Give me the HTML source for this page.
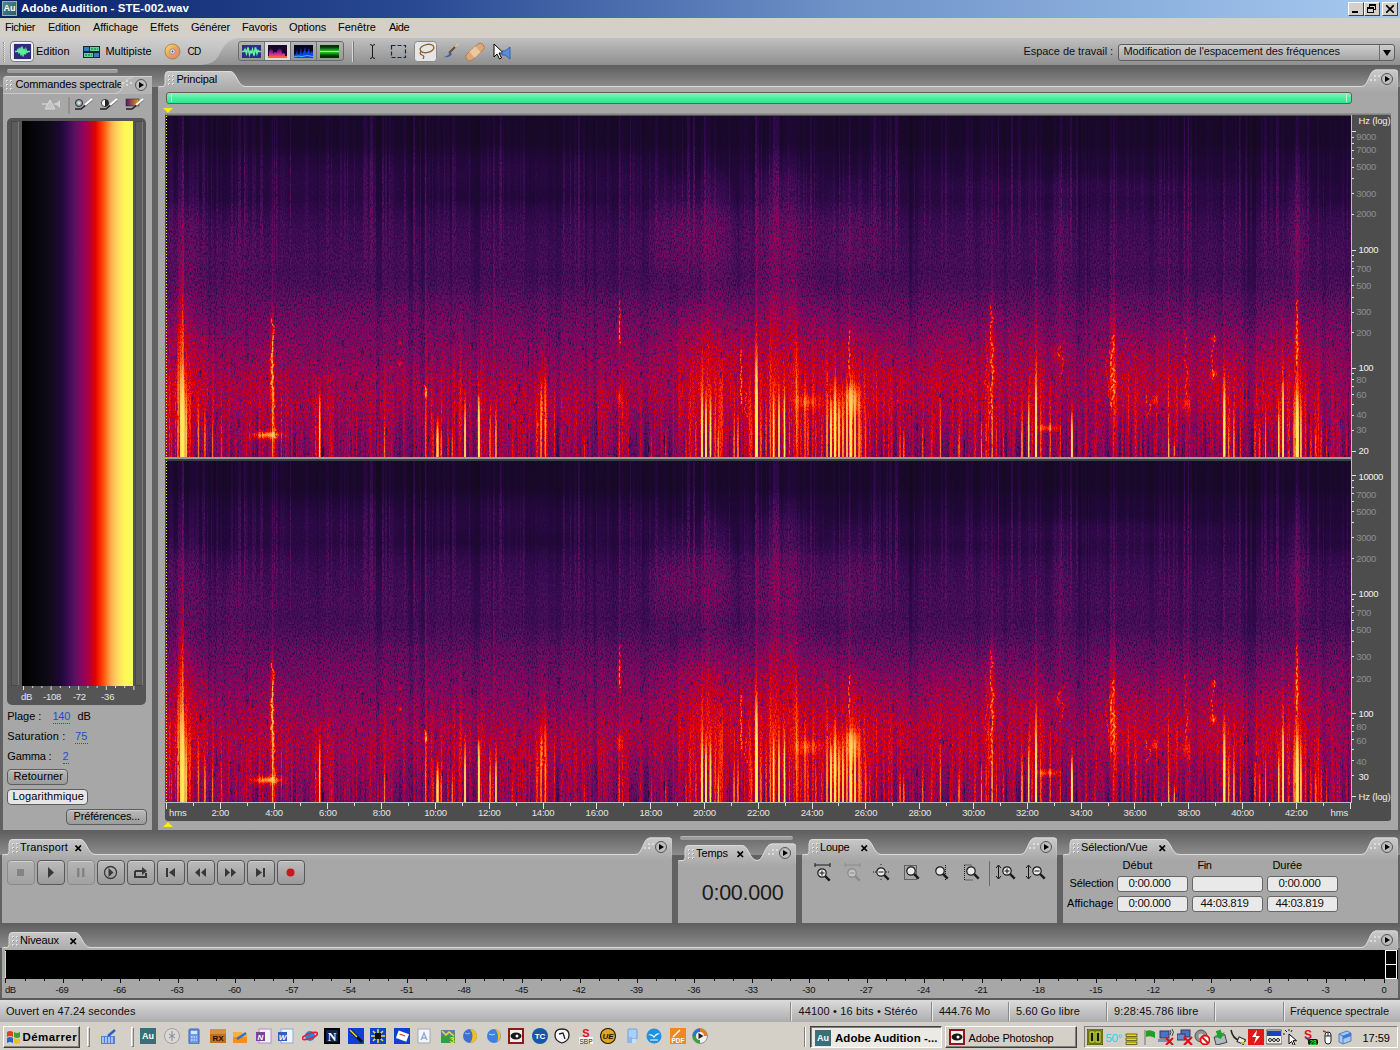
<!DOCTYPE html><html><head><meta charset="utf-8"><title>Adobe Audition - STE-002.wav</title><style>*{box-sizing:border-box;margin:0;padding:0}
html,body{width:1400px;height:1050px;overflow:hidden}
body{position:relative;background:#616161;font-family:"Liberation Sans",sans-serif;font-size:11px;color:#000;line-height:13px}
.a{position:absolute}
.t{position:absolute;white-space:nowrap}
#title{left:0;top:0;width:1400px;height:18px;background:linear-gradient(90deg,#0a246a 0%,#2a4a94 30%,#6f92c8 60%,#a6caf0 100%)}
#title .t{color:#fff}
#menu{left:0;top:18px;width:1400px;height:20px;background:#d4d0c8}
#menu .t{}
#tb{left:0;top:38px;width:1400px;height:27px;background:linear-gradient(#c0c0c0,#aaa 45%,#8f8f8f)}
#tbl{left:0;top:38px;width:240px;height:27px}
.gap{background:linear-gradient(#5e5e5e,#707070 40%,#8d8d8d)}
.panel{background:#a7a7a7}
.tabtxt{font-size:11px;color:#000}
.btn{position:absolute;border:1px solid #5c5c5c;border-radius:4px;background:linear-gradient(#b9b9b9,#9b9b9b);text-align:center;font-size:11px;line-height:13px;box-shadow:inset 0 1px 0 #cfcfcf}
.fld{position:absolute;border:1px solid #666;border-radius:3px;background:#e9e9e9;text-align:center;font-size:12px;line-height:14px;height:16px;width:71px}
.blue{color:#1a4fd0;border-bottom:1px dotted #1a4fd0}
.lt{color:#e6e6e6;font-size:10.5px}
.dim{color:#9d9d9d;font-size:10.5px}
</style></head><body>
<div id="title" class="a"><div class="a" style="left:2px;top:1px;width:15px;height:15px;background:linear-gradient(135deg,#4f8a8c,#2c5a66);border:1px solid #8fb3b3;color:#fff;font-size:9px;line-height:12px;text-align:center;font-weight:bold">Au</div><div class="t " style="left:21px;top:2px;font-size:11.5px;letter-spacing:0.08px;font-weight:bold;color:#fff;">Adobe Audition - STE-002.wav</div>
<div class="a" style="left:1348px;top:2px;width:16px;height:14px;background:#d4d0c8;border:1px solid;border-color:#fff #404040 #404040 #fff"><div class="a" style="left:3px;top:8px;width:6px;height:2px;background:#000"></div></div>
<div class="a" style="left:1364px;top:2px;width:16px;height:14px;background:#d4d0c8;border:1px solid;border-color:#fff #404040 #404040 #fff"><div class="a" style="left:4px;top:1px;width:7px;height:6px;border:1px solid #000;border-top-width:2px"></div><div class="a" style="left:2px;top:4px;width:7px;height:6px;border:1px solid #000;border-top-width:2px;background:#d4d0c8"></div></div>
<div class="a" style="left:1382px;top:2px;width:16px;height:14px;background:#d4d0c8;border:1px solid;border-color:#fff #404040 #404040 #fff"><svg class="a" style="left:3px;top:2px" width="8" height="8"><path d="M0 0L8 8M8 0L0 8" stroke="#000" stroke-width="1.6"/></svg></div>
</div>
<div id="menu" class="a">
<div class="t " style="left:5px;top:3px;font-size:11px;letter-spacing:-0.43px;">Fichier</div><div class="t " style="left:48px;top:3px;font-size:11px;letter-spacing:-0.23px;">Edition</div><div class="t " style="left:93px;top:3px;font-size:11px;letter-spacing:-0.07px;">Affichage</div><div class="t " style="left:150px;top:3px;font-size:11px;letter-spacing:0.18px;">Effets</div><div class="t " style="left:191px;top:3px;font-size:11px;letter-spacing:-0.19px;">Générer</div><div class="t " style="left:242px;top:3px;font-size:11px;letter-spacing:-0.15px;">Favoris</div><div class="t " style="left:289px;top:3px;font-size:11px;letter-spacing:-0.13px;">Options</div><div class="t " style="left:338px;top:3px;font-size:11px;letter-spacing:0.01px;">Fenêtre</div><div class="t " style="left:389px;top:3px;font-size:11px;letter-spacing:-0.50px;">Aide</div>
</div>
<div id="tb" class="a"></div>
<svg id="tbl" class="a" viewBox="0 0 240 27"><defs><linearGradient id="g1" x1="0" y1="0" x2="0" y2="1"><stop offset="0" stop-color="#cfcfcf"/><stop offset="1" stop-color="#b2b2b2"/></linearGradient></defs><path d="M0 0H240C226 1 224 9 219 17C215 25 208 27 196 27H0Z" fill="url(#g1)"/></svg>

<div class="a" style="left:3px;top:42px;width:2px;height:20px;border-left:1px dotted #8a8a8a;border-right:1px dotted #e8e8e8"></div><div class="a" style="left:10px;top:41px;width:24px;height:21px;border:1px solid #7a7a7a;border-radius:4px;background:#e4e4e4;box-shadow:inset 0 0 0 1px #fff"></div><svg class="a" style="left:14px;top:44px" width="17" height="15"><rect width="17" height="15" fill="#322a7c"/><path d="M1 7.500h2l1-2l1 4l1-6l1 8l1-9l1 10l1-8l1 6l1-5l1 3l1-1h2" stroke="#5cf09a" stroke-width="1.400" fill="none"/></svg><div class="t " style="left:36px;top:45px;font-size:11px;letter-spacing:-0.02px;">Edition</div><svg class="a" style="left:83px;top:46px" width="17" height="12"><rect width="17" height="12" fill="#1c2430"/><rect x="1" y="1" width="5" height="4" fill="#3c78c8"/><rect x="7" y="1" width="9" height="4" fill="#58d890"/><rect x="1" y="7" width="9" height="4" fill="#58d890"/><rect x="11" y="7" width="5" height="4" fill="#3c78c8"/><path d="M8 3h7M2 9h7" stroke="#1c5c34" stroke-dasharray="2 1"/></svg><div class="t " style="left:105.5px;top:45px;font-size:11px;letter-spacing:-0.05px;">Multipiste</div><svg class="a" style="left:164px;top:43px" width="17" height="17"><defs><linearGradient id="cdg" x1="0" y1="0" x2="1" y2="1"><stop offset="0" stop-color="#f8e8a0"/><stop offset=".4" stop-color="#e8b050"/><stop offset=".7" stop-color="#e89070"/><stop offset="1" stop-color="#c8a040"/></linearGradient></defs><circle cx="8.500" cy="8.500" r="7.500" fill="url(#cdg)" stroke="#a07830" stroke-width=".8"/><circle cx="8.500" cy="8.500" r="2.600" fill="#e8e0e8" stroke="#9080a0" stroke-width=".8"/><circle cx="8.500" cy="8.500" r=".9" fill="#504860"/></svg><div class="t " style="left:187.5px;top:45px;font-size:10px;letter-spacing:-0.72px;">CD</div><div class="a" style="left:238px;top:41px;width:106px;height:20px;border:1px solid #6a6a6a;border-radius:3px;background:linear-gradient(#b4b4b4,#989898)"></div><div class="a" style="left:265px;top:42px;width:26px;height:18px;background:#dcdcdc"></div><div class="a" style="left:264px;top:42px;width:1px;height:18px;background:#747474"></div><div class="a" style="left:290px;top:42px;width:1px;height:18px;background:#747474"></div><div class="a" style="left:316px;top:42px;width:1px;height:18px;background:#747474"></div><svg class="a" style="left:242px;top:45px" width="100" height="13"><defs><linearGradient id="spg" x1="0" y1="0" x2="0" y2="1"><stop offset="0" stop-color="#201040"/><stop offset=".5" stop-color="#a020a0"/><stop offset=".85" stop-color="#f04080"/><stop offset="1" stop-color="#ff8020"/></linearGradient><linearGradient id="grg" x1="0" y1="0" x2="0" y2="1"><stop offset="0" stop-color="#043004"/><stop offset=".5" stop-color="#30e030"/><stop offset="1" stop-color="#043004"/></linearGradient></defs><rect x="0" y="0" width="19" height="13" fill="#2a3088"/><path d="M0 6.500h2l1-2l1.500 4l1.500-6l1.500 7l1-3l1 1l1-3l1.500 6l1.500-8l1.500 6l1-3l1 1h2" stroke="#68f0a0" stroke-width="1.600" fill="none"/><rect x="26" y="0" width="19" height="13" fill="#180830"/><path d="M27 12V6q2-5 4 0v3q2-4 4-1v-2q3-6 5 0v3q1-2 3 0v3z" fill="url(#spg)"/><rect x="26" y="11" width="19" height="2" fill="#ff6030"/><rect x="52" y="0" width="19" height="13" fill="#040820"/><path d="M52 13v-3l2-1l1-4l1 5l2-2l1-5l1 6l2-3l1-4l1 6l2-2l1-3l1 5l2-2l1 2v5z" fill="#1040e0"/><path d="M52 12l4-1l4 .500l5-1l6 1" stroke="#40c0ff" fill="none"/><rect x="78" y="0" width="19" height="13" fill="#043004"/><rect x="78" y="2" width="19" height="9" fill="url(#grg)"/><path d="M78 6.500h19" stroke="#a0ffa0"/></svg><div class="a" style="left:352px;top:41px;width:2px;height:21px;border-left:1px solid #d8d8d8;border-right:1px solid #7a7a7a"></div><svg class="a" style="left:360px;top:40px" width="160" height="24"><path d="M12.500 6v11M10 4.500q2.500 0 2.500 2q0-2 2.500-2M10 18.500q2.500 0 2.500-2q0 2 2.500 2" stroke="#1a1a1a" fill="none"/><rect x="31.500" y="5.500" width="14" height="12" fill="none" stroke="#1c2440" stroke-width="1.200" stroke-dasharray="4 2"/><rect x="54.500" y="1.500" width="22" height="20" rx="3" fill="#e6e6e6" stroke="#8a8a8a"/><ellipse cx="67" cy="8.500" rx="7" ry="4" fill="none" stroke="#8a6432" stroke-width="1.400" transform="rotate(-12 67 8.500)"/><path d="M61 11q-2 3 1 4q3 1 1 4" stroke="#8a6432" stroke-width="1.300" fill="none"/><path d="M97 5L89 13" stroke="#6a4a2a" stroke-width="2"/><path d="M98 4l-3 3" stroke="#d8c8a0" stroke-width="2"/><path d="M90 12q-1 4-6 5q5 1 8-3z" fill="#3060b0"/><rect x="104" y="8" width="22" height="8" rx="4" fill="#dca878" stroke="#a87848" stroke-width=".8" transform="rotate(-42 115 12)"/><rect x="111" y="8" width="8" height="8" fill="#ecc8a0" transform="rotate(-42 115 12)"/><path d="M134 4v13l3-3l2.500 5l2-1l-2.500-5h4.500z" fill="#fff" stroke="#000" stroke-width="1"/><path d="M142 11h3l5-4v12l-5-4h-3z" fill="#5890e0" stroke="#2850a0" stroke-width=".8"/></svg><div class="t " style="left:1023.5px;top:45px;font-size:11px;letter-spacing:-0.05px;color:#111;">Espace de travail :</div><div class="a" style="left:1118px;top:44px;width:277px;height:17px;border:1px solid #5e5e5e;border-radius:3px;background:linear-gradient(#cdcdcd,#a6a6a6)"></div><div class="t " style="left:1123.5px;top:45px;font-size:11px;letter-spacing:-0.08px;color:#111;">Modification de l'espacement des fréquences</div><div class="a" style="left:1379px;top:45px;width:1px;height:15px;background:#6e6e6e"></div><svg class="a" style="left:1382px;top:49px" width="10" height="8"><path d="M1 1h8l-4 6z" fill="#000"/></svg>
<div class="a gap" style="left:0;top:65px;width:1400px;height:22px"></div><div class="a" style="left:7px;top:69px;width:111px;height:4px;border-radius:2px;background:#9c9c9c;border-top:1px solid #b5b5b5"></div><div class="a" style="left:3px;top:76px;width:149px;height:754px;background:linear-gradient(#bdbdbd,#a7a7a7 18px);border-radius:4px 0 0 0;border-top:1px solid #d0d0d0"></div><div class="a" style="left:3px;top:93px;width:118px;height:1px;background:#c9c9c9"></div><div class="a" style="left:0;top:76px;width:121px;height:17px;overflow:hidden"><div class="t " style="left:15.5px;top:2px;font-size:11px;letter-spacing:-0.15px;">Commandes spectrales</div></div><svg class="a" style="left:3px;top:76px" width="149" height="20"><rect x="3" y="4" width="2" height="2" fill="#e2e2e2"/><rect x="4" y="5" width="1" height="1" fill="#8a8a8a"/><rect x="7" y="4" width="2" height="2" fill="#e2e2e2"/><rect x="8" y="5" width="1" height="1" fill="#8a8a8a"/><rect x="3" y="8" width="2" height="2" fill="#e2e2e2"/><rect x="4" y="9" width="1" height="1" fill="#8a8a8a"/><rect x="7" y="8" width="2" height="2" fill="#e2e2e2"/><rect x="8" y="9" width="1" height="1" fill="#8a8a8a"/><rect x="3" y="12" width="2" height="2" fill="#e2e2e2"/><rect x="4" y="13" width="1" height="1" fill="#8a8a8a"/><rect x="7" y="12" width="2" height="2" fill="#e2e2e2"/><rect x="8" y="13" width="1" height="1" fill="#8a8a8a"/><path d="M112 18C122 17 118 2 130 1H149V18Z" fill="#b4b4b4"/><path d="M112 17.5C122 17 118 2 130 1.5" fill="none" stroke="#cfcfcf"/><rect x="119" y="6" width="2" height="2" fill="#d8d8d8"/><rect x="123" y="4" width="2" height="2" fill="#d8d8d8"/><rect x="127" y="6" width="2" height="2" fill="#d8d8d8"/><rect x="123" y="8" width="2" height="2" fill="#d8d8d8"/><circle cx="138" cy="9" r="5.5" fill="#bdbdbd" stroke="#555"/><path d="M136 6l5 3l-5 3z" fill="#000"/></svg><svg class="a" style="left:40px;top:96px" width="110" height="20"><path d="M2 8H8M14 8H20" stroke="#d0d0d0" stroke-width="1.3"/><path d="M5 13L10 4L15 13Z" fill="#c4c4c4" stroke="#d8d8d8" stroke-width="1"/><path d="M15 8L20 4V12Z" fill="#d0d0d0"/><path d="M29 1V18" stroke="#7a7a7a"/><defs><radialGradient id="rb"><stop offset="0" stop-color="#fff"/><stop offset=".5" stop-color="#7fd0a0"/><stop offset="1" stop-color="#c040c0"/></radialGradient><linearGradient id="pg" x1="0" x2="1"><stop offset="0" stop-color="#5a1070"/><stop offset="1" stop-color="#e0a020"/></linearGradient></defs><circle cx="39" cy="7" r="3.6" fill="url(#rb)" stroke="#222" stroke-width=".8"/><path d="M35 13H41L52 4" stroke="#222" stroke-width="1.6" fill="none"/><path d="M45 9L52 3" stroke="#fff" stroke-width="2.2"/><circle cx="65" cy="7" r="3.6" fill="#fff" stroke="#222" stroke-width=".8"/><path d="M65 3.4A3.6 3.6 0 0 1 65 10.6Z" fill="#222"/><path d="M60 13H66L77 4" stroke="#222" stroke-width="1.6" fill="none"/><path d="M70 9L77 3" stroke="#fff" stroke-width="2.2"/><rect x="86" y="3" width="13" height="7" fill="url(#pg)" stroke="#333" stroke-width=".6"/><path d="M86 13H92L103 4" stroke="#222" stroke-width="1.6" fill="none"/><path d="M96 9L103 3" stroke="#fff" stroke-width="2.2"/></svg><div class="a" style="left:7px;top:118px;width:139px;height:587px;background:#555;border-radius:5px"></div><div class="a" style="left:11px;top:121px;width:8px;height:565px;background:#5c5c5c;border:1px solid #484848;border-right-color:#7a7a7a"></div><div class="a" style="left:135px;top:121px;width:8px;height:565px;background:#5c5c5c;border:1px solid #484848;border-right-color:#7a7a7a"></div><div class="a" style="left:22px;top:121px;width:111px;height:565px;background:linear-gradient(90deg,#000000 0.0%,#0a0810 17.7%,#140a1e 27.4%,#200838 35.4%,#3a0c54 41.9%,#601060 48.3%,#8c0460 54.7%,#b00040 60.4%,#e00000 66.0%,#ff3000 70.9%,#ff7020 75.7%,#ffb050 80.5%,#ffd860 86.1%,#fff858 92.6%,#f4ff58 100.0%)"></div><svg class="a" style="left:7px;top:686px" width="139" height="6"><path d="M16.5 0V4" stroke="#ddd"/><path d="M25.7 0V2" stroke="#ddd"/><path d="M34.9 0V2" stroke="#ddd"/><path d="M44.1 0V4" stroke="#ddd"/><path d="M53.3 0V2" stroke="#ddd"/><path d="M62.5 0V2" stroke="#ddd"/><path d="M71.7 0V4" stroke="#ddd"/><path d="M80.9 0V2" stroke="#ddd"/><path d="M90.1 0V2" stroke="#ddd"/><path d="M99.3 0V4" stroke="#ddd"/><path d="M108.5 0V2" stroke="#ddd"/><path d="M117.7 0V2" stroke="#ddd"/><path d="M126.9 0V4" stroke="#ddd"/></svg><div class="t " style="left:21px;top:690px;font-size:9.5px;letter-spacing:-0.31px;color:#e6e6e6;">dB</div><div class="t " style="left:43px;top:690px;font-size:9.5px;letter-spacing:-0.25px;color:#e6e6e6;">-108</div><div class="t " style="left:73px;top:690px;font-size:9.5px;letter-spacing:-0.41px;color:#e6e6e6;">-72</div><div class="t " style="left:101px;top:690px;font-size:9.5px;letter-spacing:-0.08px;color:#e6e6e6;">-36</div><div class="t " style="left:7.3px;top:710px;font-size:11px;letter-spacing:-0.04px;">Plage :</div><div class="t blue" style="left:52.5px;top:710px;font-size:11px;letter-spacing:-0.28px;">140</div><div class="t " style="left:77.5px;top:710px;font-size:11px;letter-spacing:-0.23px;">dB</div><div class="t " style="left:7.3px;top:730px;font-size:11px;letter-spacing:0.16px;">Saturation :</div><div class="t blue" style="left:75px;top:730px;font-size:11px;letter-spacing:0.13px;">75</div><div class="t " style="left:7.3px;top:750px;font-size:11px;letter-spacing:-0.15px;">Gamma :</div><div class="t blue" style="left:62.5px;top:750px;font-size:11px;letter-spacing:0.38px;">2</div><div class="btn" style="left:7px;top:769px;width:61px;height:16px"></div><div class="t " style="left:13.5px;top:769.5px;font-size:11px;letter-spacing:0.07px;">Retourner</div><div class="btn" style="left:7px;top:789px;width:81px;height:16px;background:#e6e6e6;box-shadow:none"></div><div class="t " style="left:12.5px;top:789.5px;font-size:11px;letter-spacing:0.14px;">Logarithmique</div><div class="btn" style="left:66px;top:809px;width:81px;height:16px"></div><div class="t " style="left:73.5px;top:809.5px;font-size:11px;letter-spacing:-0.14px;">Préférences...</div><svg class="a" style="left:158px;top:71px;overflow:visible" width="1240" height="759" viewBox="0 0 1240 759"><defs><linearGradient id="pg1" x1="0" y1="0" x2="0" y2="21" gradientUnits="userSpaceOnUse"><stop offset="0" stop-color="#c8c8c8"/><stop offset="1" stop-color="#a7a7a7"/></linearGradient></defs><path d="M0 759 V16 Q0 15 2 15 H5 Q7 15 7 12 V4 Q7 0 11 0 H72 C78.75 0 79.5 15 87 15 H1204 C1210.5 15 1211 -1.5 1218 -1.5 H1237 Q1240 -1.5 1240 1.5 V759 Z" fill="url(#pg1)"/><path d="M0 759 V16 Q0 15 2 15 H5 Q7 15 7 12 V4 Q7 0 11 0 H72 C78.75 0 79.5 15 87 15 H1204 C1210.5 15 1211 -1.5 1218 -1.5 H1237 Q1240 -1.5 1240 1.5 V759 Z" fill="none" stroke="#dadada" stroke-width="1" transform="translate(0,0.5)" clip-path="inset(-3px 1px 742px 1px)"/><rect x="10" y="4" width="2" height="2" fill="#e2e2e2"/><rect x="11" y="5" width="1" height="1" fill="#8a8a8a"/><rect x="14" y="4" width="2" height="2" fill="#e2e2e2"/><rect x="15" y="5" width="1" height="1" fill="#8a8a8a"/><rect x="10" y="8" width="2" height="2" fill="#e2e2e2"/><rect x="11" y="9" width="1" height="1" fill="#8a8a8a"/><rect x="14" y="8" width="2" height="2" fill="#e2e2e2"/><rect x="15" y="9" width="1" height="1" fill="#8a8a8a"/><rect x="10" y="12" width="2" height="2" fill="#e2e2e2"/><rect x="11" y="13" width="1" height="1" fill="#8a8a8a"/><rect x="14" y="12" width="2" height="2" fill="#e2e2e2"/><rect x="15" y="13" width="1" height="1" fill="#8a8a8a"/><rect x="1212" y="8" width="2" height="2" fill="#dcdcdc"/><rect x="1216" y="8" width="2" height="2" fill="#dcdcdc"/><rect x="1216" y="4" width="2" height="2" fill="#dcdcdc"/><rect x="1220" y="4" width="2" height="2" fill="#dcdcdc"/><circle cx="1229" cy="8" r="5.500" fill="#bdbdbd" stroke="#555" stroke-width="1"/><path d="M1227 5 l5 3 l-5 3z" fill="#000"/></svg><div class="t " style="left:176.4px;top:73px;font-size:11px;letter-spacing:-0.18px;">Principal</div><div class="a" style="left:166px;top:92px;width:1186px;height:12px;border:1px solid #6b5a5a;border-radius:3px;background:linear-gradient(#86f2be,#4fec9f 50%,#2fe78d)"></div><div class="a" style="left:171px;top:94px;width:1px;height:8px;background:#b8f8d8"></div><div class="a" style="left:1346px;top:94px;width:1px;height:8px;background:#b8f8d8"></div><div class="a" style="left:165px;top:113px;width:1226px;height:3px;background:linear-gradient(#9a9a9a,#6a6a6a)"></div><div class="a" style="left:165px;top:115px;width:1226px;height:706px;background:#4d4d4d;border-radius:0 3px 3px 3px"></div><svg class="a" style="left:162px;top:107px" width="12" height="8"><path d="M1 1H11L6 6Z" fill="#ffee00"/></svg><svg class="a" style="left:162px;top:820px" width="12" height="8"><path d="M1 7H11L6 2Z" fill="#ffee00"/></svg>
<svg class="a" style="left:0;top:0" width="1400" height="1050" viewBox="0 0 1400 1050"><defs><filter id="cmapf" x="166" y="116" width="1185" height="686" filterUnits="userSpaceOnUse" color-interpolation-filters="sRGB"><feTurbulence type="fractalNoise" baseFrequency="0.85 0.45" numOctaves="2" seed="3" result="n"/><feColorMatrix in="SourceGraphic" type="matrix" values="0 0 0 0 0  0 0 0 0 0  0 0 0 0 0  1 0 0 0 0" result="sa0"/><feComponentTransfer in="sa0" result="sa"><feFuncA type="table" tableValues="0 0 0 0 0 0 0 .05 .3 .7 1 1 1 .8 .5 .25 .1 0 0 0 0"/></feComponentTransfer><feColorMatrix in="n" type="matrix" values="0 0 0 0 0  0 0 0 0 0  0 0 0 0 0  0.75 0 0 0 -0.325" result="nb0"/><feColorMatrix in="n" type="matrix" values="0 0 0 0 1  0 0 0 0 1  0 0 0 0 1  0 0.45 0 0 -0.205" result="nw0"/><feComposite in="nb0" in2="sa" operator="in" result="nb"/><feComposite in="nw0" in2="sa" operator="in" result="nw"/><feMerge result="m"><feMergeNode in="SourceGraphic"/><feMergeNode in="nb"/><feMergeNode in="nw"/></feMerge><feComponentTransfer in="m"><feFuncR type="table" tableValues="0.000 0.003 0.007 0.010 0.014 0.017 0.021 0.024 0.028 0.031 0.035 0.038 0.043 0.050 0.056 0.062 0.069 0.075 0.083 0.092 0.101 0.110 0.119 0.134 0.158 0.183 0.207 0.234 0.271 0.307 0.343 0.380 0.422 0.464 0.507 0.549 0.587 0.626 0.665 0.708 0.761 0.813 0.866 0.908 0.947 0.985 1.000 1.000 1.000 1.000 1.000 1.000 1.000 1.000 1.000 1.000 1.000 1.000 1.000 1.000 0.993 0.984 0.975 0.966 0.957"/><feFuncG type="table" tableValues="0.000 0.003 0.006 0.008 0.011 0.014 0.017 0.019 0.022 0.025 0.028 0.030 0.032 0.033 0.035 0.036 0.037 0.039 0.039 0.037 0.035 0.034 0.032 0.033 0.036 0.040 0.044 0.048 0.052 0.055 0.059 0.062 0.050 0.039 0.027 0.016 0.011 0.007 0.003 0.000 0.000 0.000 0.000 0.046 0.106 0.166 0.239 0.321 0.403 0.484 0.566 0.648 0.711 0.755 0.799 0.843 0.874 0.904 0.934 0.965 0.977 0.983 0.988 0.994 1.000"/><feFuncB type="table" tableValues="0.000 0.006 0.011 0.017 0.022 0.028 0.033 0.039 0.044 0.050 0.055 0.061 0.069 0.078 0.086 0.095 0.104 0.113 0.127 0.147 0.167 0.187 0.207 0.229 0.255 0.281 0.308 0.332 0.343 0.355 0.366 0.376 0.376 0.376 0.376 0.376 0.342 0.308 0.274 0.227 0.157 0.087 0.017 0.000 0.000 0.000 0.025 0.066 0.107 0.159 0.221 0.282 0.322 0.340 0.357 0.375 0.370 0.362 0.355 0.347 0.345 0.345 0.345 0.345 0.345"/><feFuncA type="linear" slope="0" intercept="1"/></feComponentTransfer></filter><linearGradient id="sb" x1="0" y1="0" x2="0" y2="1"><stop offset="0.00" stop-color="#4f4f4f"/><stop offset="0.08" stop-color="#505050"/><stop offset="0.12" stop-color="#585858"/><stop offset="0.24" stop-color="#5c5c5c"/><stop offset="0.28" stop-color="#666666"/><stop offset="0.33" stop-color="#6c6c6c"/><stop offset="0.42" stop-color="#717171"/><stop offset="0.46" stop-color="#707070"/><stop offset="0.50" stop-color="#747474"/><stop offset="0.55" stop-color="#7e7e7e"/><stop offset="0.62" stop-color="#878787"/><stop offset="0.70" stop-color="#8c8c8c"/><stop offset="0.78" stop-color="#8f8f8f"/><stop offset="0.85" stop-color="#8e8e8e"/><stop offset="0.92" stop-color="#878787"/><stop offset="1.00" stop-color="#818181"/></linearGradient><linearGradient id="ss" x1="0" y1="0" x2="0" y2="1"><stop offset="0" stop-color="#e4e4e4" stop-opacity="0"/><stop offset=".3" stop-color="#e4e4e4" stop-opacity=".4"/><stop offset=".65" stop-color="#e4e4e4" stop-opacity=".8"/><stop offset="1" stop-color="#e4e4e4" stop-opacity=".85"/></linearGradient><linearGradient id="sc" x1="0" y1="0" x2="0" y2="1"><stop offset="0" stop-color="#f6f6f6" stop-opacity="0"/><stop offset=".35" stop-color="#f6f6f6" stop-opacity=".7"/><stop offset="1" stop-color="#f6f6f6" stop-opacity=".9"/></linearGradient><linearGradient id="su" x1="0" y1="0" x2="0" y2="1"><stop offset="0" stop-color="#fff" stop-opacity=".8"/><stop offset=".5" stop-color="#fff" stop-opacity="1"/><stop offset="1" stop-color="#fff" stop-opacity="0"/></linearGradient><linearGradient id="sl" x1="0" y1="0" x2="0" y2="1"><stop offset="0" stop-color="#fff" stop-opacity=".7"/><stop offset=".6" stop-color="#fff" stop-opacity="1"/><stop offset="1" stop-color="#fff" stop-opacity="1"/></linearGradient><radialGradient id="sr"><stop offset="0" stop-color="#e4e4e4" stop-opacity=".5"/><stop offset=".4" stop-color="#e4e4e4" stop-opacity=".35"/><stop offset="1" stop-color="#e4e4e4" stop-opacity="0"/></radialGradient><linearGradient id="sd" x1="0" y1="0" x2="0" y2="1"><stop offset="0" stop-color="#000" stop-opacity="0"/><stop offset=".5" stop-color="#000" stop-opacity=".7"/><stop offset="1" stop-color="#000" stop-opacity="1"/></linearGradient><pattern id="stp" x="166" y="116" width="237" height="345" patternUnits="userSpaceOnUse"><rect x="0" y="253" width="2" height="88" fill="url(#ss)" opacity="0.22"/><rect x="2" y="295" width="2" height="46" fill="url(#ss)" opacity="0.09"/><rect x="4" y="296" width="1" height="45" fill="url(#sd)" opacity="0.10"/><rect x="5" y="286" width="2" height="55" fill="url(#sd)" opacity="0.10"/><rect x="7" y="279" width="2" height="62" fill="url(#sd)" opacity="0.07"/><rect x="10" y="277" width="1" height="64" fill="url(#sd)" opacity="0.05"/><rect x="11" y="303" width="1" height="38" fill="url(#ss)" opacity="0.27"/><rect x="12" y="343" width="1" height="-2" fill="url(#sd)" opacity="0.17"/><rect x="14" y="234" width="1.5" height="107" fill="url(#ss)" opacity="0.27"/><rect x="16" y="293" width="1" height="48" fill="url(#sd)" opacity="0.12"/><rect x="17.5" y="291" width="1" height="50" fill="url(#sd)" opacity="0.11"/><rect x="19" y="305" width="1" height="36" fill="url(#sd)" opacity="0.06"/><rect x="20" y="261" width="3" height="80" fill="url(#ss)" opacity="0.19"/><rect x="24" y="297" width="1.5" height="44" fill="url(#sd)" opacity="0.10"/><rect x="25.5" y="310" width="2" height="31" fill="url(#ss)" opacity="0.23"/><rect x="28.5" y="308" width="1.5" height="33" fill="url(#sd)" opacity="0.08"/><rect x="31" y="314" width="1" height="27" fill="url(#sd)" opacity="0.09"/><rect x="32.5" y="301" width="1" height="40" fill="url(#sd)" opacity="0.08"/><rect x="34" y="294" width="1" height="47" fill="url(#sd)" opacity="0.12"/><rect x="35.5" y="258" width="3" height="83" fill="url(#ss)" opacity="0.10"/><rect x="38.5" y="322" width="3" height="19" fill="url(#sd)" opacity="0.07"/><rect x="41.5" y="313" width="1" height="28" fill="url(#ss)" opacity="0.16"/><rect x="42.5" y="315" width="3" height="26" fill="url(#sd)" opacity="0.10"/><rect x="46.5" y="271" width="1" height="70" fill="url(#sd)" opacity="0.05"/><rect x="48.5" y="300" width="1.5" height="41" fill="url(#ss)" opacity="0.23"/><rect x="50" y="305" width="3" height="36" fill="url(#ss)" opacity="0.11"/><rect x="53.5" y="237" width="1" height="104" fill="url(#ss)" opacity="0.11"/><rect x="54.5" y="269" width="2" height="72" fill="url(#ss)" opacity="0.23"/><rect x="57.5" y="256" width="1.5" height="85" fill="url(#ss)" opacity="0.11"/><rect x="60" y="345" width="2" height="-4" fill="url(#sd)" opacity="0.11"/><rect x="62.5" y="239" width="1" height="102" fill="url(#ss)" opacity="0.24"/><rect x="64" y="330" width="1" height="11" fill="url(#sd)" opacity="0.13"/><rect x="65" y="296" width="1.5" height="45" fill="url(#sd)" opacity="0.08"/><rect x="67.5" y="329" width="1.5" height="12" fill="url(#sd)" opacity="0.09"/><rect x="69.5" y="281" width="3" height="60" fill="url(#sd)" opacity="0.11"/><rect x="73" y="287" width="1.5" height="54" fill="url(#ss)" opacity="0.24"/><rect x="75" y="254" width="1.5" height="87" fill="url(#ss)" opacity="0.27"/><rect x="77.5" y="307" width="1.5" height="34" fill="url(#ss)" opacity="0.25"/><rect x="80" y="310" width="1.5" height="31" fill="url(#ss)" opacity="0.19"/><rect x="81.5" y="334" width="1" height="7" fill="url(#sd)" opacity="0.11"/><rect x="82.5" y="287" width="3" height="54" fill="url(#ss)" opacity="0.20"/><rect x="86.5" y="317" width="1.5" height="24" fill="url(#sd)" opacity="0.13"/><rect x="88" y="245" width="1" height="96" fill="url(#ss)" opacity="0.21"/><rect x="89" y="281" width="3" height="60" fill="url(#sd)" opacity="0.17"/><rect x="92" y="236" width="1" height="105" fill="url(#ss)" opacity="0.14"/><rect x="93" y="248" width="2" height="93" fill="url(#ss)" opacity="0.17"/><rect x="96" y="282" width="3" height="59" fill="url(#ss)" opacity="0.13"/><rect x="99.5" y="295" width="1" height="46" fill="url(#sd)" opacity="0.15"/><rect x="100.5" y="300" width="3" height="41" fill="url(#ss)" opacity="0.09"/><rect x="104" y="256" width="1" height="85" fill="url(#ss)" opacity="0.27"/><rect x="105.5" y="299" width="1.5" height="42" fill="url(#ss)" opacity="0.24"/><rect x="107.5" y="244" width="2" height="97" fill="url(#ss)" opacity="0.19"/><rect x="109.5" y="282" width="1" height="59" fill="url(#ss)" opacity="0.26"/><rect x="110.5" y="241" width="2" height="100" fill="url(#ss)" opacity="0.20"/><rect x="112.5" y="317" width="1.5" height="24" fill="url(#sd)" opacity="0.10"/><rect x="115" y="272" width="1" height="69" fill="url(#ss)" opacity="0.22"/><rect x="117" y="281" width="1" height="60" fill="url(#ss)" opacity="0.28"/><rect x="119" y="266" width="1.5" height="75" fill="url(#ss)" opacity="0.28"/><rect x="121.5" y="244" width="1.5" height="97" fill="url(#ss)" opacity="0.21"/><rect x="124" y="290" width="1" height="51" fill="url(#sd)" opacity="0.15"/><rect x="125" y="275" width="2" height="66" fill="url(#ss)" opacity="0.27"/><rect x="127" y="306" width="1" height="35" fill="url(#sd)" opacity="0.14"/><rect x="128.5" y="306" width="1.5" height="35" fill="url(#sd)" opacity="0.11"/><rect x="130" y="294" width="1" height="47" fill="url(#ss)" opacity="0.19"/><rect x="131.5" y="256" width="2" height="85" fill="url(#ss)" opacity="0.17"/><rect x="134" y="293" width="3" height="48" fill="url(#ss)" opacity="0.09"/><rect x="137.5" y="303" width="2" height="38" fill="url(#sd)" opacity="0.16"/><rect x="139.5" y="301" width="1" height="40" fill="url(#sd)" opacity="0.12"/><rect x="141.5" y="305" width="2" height="36" fill="url(#sd)" opacity="0.14"/><rect x="144" y="300" width="2" height="41" fill="url(#ss)" opacity="0.25"/><rect x="147" y="289" width="2" height="52" fill="url(#sd)" opacity="0.16"/><rect x="149" y="271" width="1" height="70" fill="url(#ss)" opacity="0.18"/><rect x="150.5" y="244" width="2" height="97" fill="url(#ss)" opacity="0.24"/><rect x="152.5" y="285" width="3" height="56" fill="url(#sd)" opacity="0.15"/><rect x="155.5" y="325" width="1.5" height="16" fill="url(#sd)" opacity="0.17"/><rect x="158" y="242" width="1" height="99" fill="url(#ss)" opacity="0.20"/><rect x="159" y="339" width="3" height="2" fill="url(#sd)" opacity="0.13"/><rect x="163" y="247" width="1" height="94" fill="url(#ss)" opacity="0.24"/><rect x="164" y="249" width="2" height="92" fill="url(#ss)" opacity="0.21"/><rect x="166" y="237" width="1.5" height="104" fill="url(#ss)" opacity="0.23"/><rect x="167.5" y="267" width="1" height="74" fill="url(#ss)" opacity="0.20"/><rect x="169.5" y="309" width="1.5" height="32" fill="url(#ss)" opacity="0.09"/><rect x="171.5" y="313" width="1" height="28" fill="url(#sd)" opacity="0.08"/><rect x="172.5" y="237" width="1.5" height="104" fill="url(#ss)" opacity="0.25"/><rect x="174.5" y="346" width="2" height="-5" fill="url(#sd)" opacity="0.15"/><rect x="177.5" y="264" width="3" height="77" fill="url(#ss)" opacity="0.08"/><rect x="181" y="279" width="1" height="62" fill="url(#ss)" opacity="0.25"/><rect x="183" y="264" width="1" height="77" fill="url(#ss)" opacity="0.27"/><rect x="184" y="268" width="2" height="73" fill="url(#sd)" opacity="0.06"/><rect x="186" y="288" width="2" height="53" fill="url(#ss)" opacity="0.10"/><rect x="189" y="277" width="1" height="64" fill="url(#sd)" opacity="0.09"/><rect x="190" y="259" width="1.5" height="82" fill="url(#ss)" opacity="0.15"/><rect x="192.5" y="277" width="2" height="64" fill="url(#sd)" opacity="0.13"/><rect x="195.5" y="274" width="1.5" height="67" fill="url(#ss)" opacity="0.19"/><rect x="197" y="237" width="2" height="104" fill="url(#ss)" opacity="0.12"/><rect x="199" y="306" width="1" height="35" fill="url(#sd)" opacity="0.13"/><rect x="200.5" y="267" width="1" height="74" fill="url(#ss)" opacity="0.27"/><rect x="202.5" y="270" width="1.5" height="71" fill="url(#ss)" opacity="0.11"/><rect x="204" y="263" width="1" height="78" fill="url(#ss)" opacity="0.26"/><rect x="205" y="253" width="2" height="88" fill="url(#ss)" opacity="0.11"/><rect x="207.5" y="251" width="3" height="90" fill="url(#ss)" opacity="0.09"/><rect x="211" y="343" width="1.5" height="-2" fill="url(#sd)" opacity="0.13"/><rect x="213.5" y="276" width="1" height="65" fill="url(#sd)" opacity="0.08"/><rect x="214.5" y="313" width="3" height="28" fill="url(#ss)" opacity="0.22"/><rect x="217.5" y="238" width="3" height="103" fill="url(#ss)" opacity="0.27"/><rect x="221" y="257" width="3" height="84" fill="url(#ss)" opacity="0.14"/><rect x="225" y="295" width="1" height="46" fill="url(#ss)" opacity="0.12"/><rect x="226" y="316" width="3" height="25" fill="url(#sd)" opacity="0.08"/><rect x="230" y="303" width="1" height="38" fill="url(#sd)" opacity="0.07"/><rect x="231" y="334" width="2" height="7" fill="url(#sd)" opacity="0.12"/><rect x="233" y="272" width="3" height="69" fill="url(#sd)" opacity="0.11"/></pattern><clipPath id="c1"><rect x="166" y="116" width="1185" height="341"/></clipPath><clipPath id="c2"><rect x="166" y="461" width="1185" height="341"/></clipPath></defs><g filter="url(#cmapf)"><g clip-path="url(#c1)"><rect x="166" y="116" width="1185" height="341" fill="url(#sb)"/><rect x="166" y="116" width="1185" height="341" fill="url(#stp)"/><rect x="169" y="116" width="2" height="187" fill="url(#su)" opacity="0.07"/><rect x="171" y="116" width="2" height="187" fill="url(#su)" opacity="0.08"/><rect x="173" y="116" width="1" height="187" fill="url(#su)" opacity="0.03"/><rect x="189" y="116" width="2" height="187" fill="url(#su)" opacity="0.06"/><rect x="191" y="116" width="1" height="187" fill="url(#su)" opacity="0.04"/><rect x="192" y="116" width="2" height="187" fill="url(#su)" opacity="0.07"/><rect x="194" y="116" width="2" height="187" fill="url(#su)" opacity="0.04"/><rect x="196" y="116" width="3" height="187" fill="url(#su)" opacity="0.08"/><rect x="202" y="116" width="3" height="187" fill="url(#su)" opacity="0.10"/><rect x="207" y="116" width="1" height="187" fill="url(#su)" opacity="0.07"/><rect x="208" y="116" width="2" height="187" fill="url(#su)" opacity="0.04"/><rect x="211" y="116" width="1" height="187" fill="url(#su)" opacity="0.13"/><rect x="216" y="116" width="2" height="187" fill="url(#su)" opacity="0.08"/><rect x="221" y="116" width="1" height="187" fill="url(#su)" opacity="0.04"/><rect x="224" y="116" width="1" height="187" fill="url(#su)" opacity="0.03"/><rect x="231" y="116" width="2" height="187" fill="url(#su)" opacity="0.09"/><rect x="235" y="116" width="2" height="187" fill="url(#su)" opacity="0.04"/><rect x="238" y="116" width="2" height="187" fill="url(#su)" opacity="0.12"/><rect x="240" y="116" width="1" height="187" fill="url(#su)" opacity="0.12"/><rect x="244" y="116" width="2" height="187" fill="url(#su)" opacity="0.15"/><rect x="246" y="116" width="2" height="187" fill="url(#su)" opacity="0.10"/><rect x="249" y="116" width="1" height="187" fill="url(#su)" opacity="0.03"/><rect x="252" y="116" width="2" height="187" fill="url(#su)" opacity="0.08"/><rect x="254" y="116" width="2" height="187" fill="url(#su)" opacity="0.07"/><rect x="260" y="116" width="3" height="187" fill="url(#su)" opacity="0.10"/><rect x="270" y="116" width="1" height="187" fill="url(#su)" opacity="0.03"/><rect x="274" y="116" width="1" height="187" fill="url(#su)" opacity="0.13"/><rect x="276" y="116" width="1" height="187" fill="url(#su)" opacity="0.13"/><rect x="277" y="116" width="1" height="187" fill="url(#su)" opacity="0.07"/><rect x="280" y="116" width="2" height="187" fill="url(#su)" opacity="0.04"/><rect x="282" y="116" width="3" height="187" fill="url(#su)" opacity="0.04"/><rect x="286" y="116" width="1" height="187" fill="url(#su)" opacity="0.03"/><rect x="290" y="116" width="1" height="187" fill="url(#su)" opacity="0.13"/><rect x="305" y="116" width="2" height="187" fill="url(#su)" opacity="0.04"/><rect x="307" y="116" width="1" height="187" fill="url(#su)" opacity="0.07"/><rect x="319" y="116" width="1" height="187" fill="url(#su)" opacity="0.06"/><rect x="326" y="116" width="3" height="187" fill="url(#su)" opacity="0.07"/><rect x="331" y="116" width="1" height="187" fill="url(#su)" opacity="0.08"/><rect x="340" y="116" width="2" height="187" fill="url(#su)" opacity="0.07"/><rect x="344" y="116" width="2" height="187" fill="url(#su)" opacity="0.07"/><rect x="347" y="116" width="1" height="187" fill="url(#su)" opacity="0.09"/><rect x="354" y="116" width="1" height="187" fill="url(#su)" opacity="0.07"/><rect x="363" y="116" width="1" height="187" fill="url(#su)" opacity="0.08"/><rect x="364" y="116" width="3" height="187" fill="url(#su)" opacity="0.11"/><rect x="367" y="116" width="1" height="187" fill="url(#su)" opacity="0.07"/><rect x="369" y="116" width="1" height="187" fill="url(#su)" opacity="0.06"/><rect x="370" y="116" width="3" height="187" fill="url(#su)" opacity="0.15"/><rect x="373" y="116" width="1" height="187" fill="url(#su)" opacity="0.04"/><rect x="374" y="116" width="2" height="187" fill="url(#su)" opacity="0.06"/><rect x="382" y="116" width="2" height="187" fill="url(#su)" opacity="0.11"/><rect x="385" y="116" width="2" height="187" fill="url(#su)" opacity="0.09"/><rect x="389" y="116" width="1" height="187" fill="url(#su)" opacity="0.11"/><rect x="390" y="116" width="3" height="187" fill="url(#su)" opacity="0.05"/><rect x="393" y="116" width="1" height="187" fill="url(#su)" opacity="0.03"/><rect x="394" y="116" width="3" height="187" fill="url(#su)" opacity="0.03"/><rect x="404" y="116" width="2" height="187" fill="url(#su)" opacity="0.09"/><rect x="409" y="116" width="1" height="187" fill="url(#su)" opacity="0.04"/><rect x="413" y="116" width="2" height="187" fill="url(#su)" opacity="0.15"/><rect x="420" y="116" width="1" height="187" fill="url(#su)" opacity="0.13"/><rect x="424" y="116" width="2" height="187" fill="url(#su)" opacity="0.05"/><rect x="429" y="116" width="1" height="187" fill="url(#su)" opacity="0.07"/><rect x="432" y="116" width="1" height="187" fill="url(#su)" opacity="0.08"/><rect x="437" y="116" width="3" height="187" fill="url(#su)" opacity="0.04"/><rect x="444" y="116" width="1" height="187" fill="url(#su)" opacity="0.09"/><rect x="445" y="116" width="1" height="187" fill="url(#su)" opacity="0.03"/><rect x="447" y="116" width="2" height="187" fill="url(#su)" opacity="0.04"/><rect x="452" y="116" width="2" height="187" fill="url(#su)" opacity="0.10"/><rect x="454" y="116" width="2" height="187" fill="url(#su)" opacity="0.06"/><rect x="469" y="116" width="1" height="187" fill="url(#su)" opacity="0.07"/><rect x="481" y="116" width="1" height="187" fill="url(#su)" opacity="0.05"/><rect x="484" y="116" width="1" height="187" fill="url(#su)" opacity="0.03"/><rect x="487" y="116" width="2" height="187" fill="url(#su)" opacity="0.06"/><rect x="490" y="116" width="2" height="187" fill="url(#su)" opacity="0.03"/><rect x="493" y="116" width="1" height="187" fill="url(#su)" opacity="0.03"/><rect x="499" y="116" width="1" height="187" fill="url(#su)" opacity="0.09"/><rect x="500" y="116" width="2" height="187" fill="url(#su)" opacity="0.13"/><rect x="503" y="116" width="1" height="187" fill="url(#su)" opacity="0.06"/><rect x="508" y="116" width="2" height="187" fill="url(#su)" opacity="0.03"/><rect x="516" y="116" width="1" height="187" fill="url(#su)" opacity="0.04"/><rect x="520" y="116" width="1" height="187" fill="url(#su)" opacity="0.05"/><rect x="523" y="116" width="2" height="187" fill="url(#su)" opacity="0.09"/><rect x="532" y="116" width="1" height="187" fill="url(#su)" opacity="0.05"/><rect x="535" y="116" width="2" height="187" fill="url(#su)" opacity="0.04"/><rect x="553" y="116" width="1" height="187" fill="url(#su)" opacity="0.04"/><rect x="555" y="116" width="1" height="187" fill="url(#su)" opacity="0.04"/><rect x="559" y="116" width="1" height="187" fill="url(#su)" opacity="0.03"/><rect x="563" y="116" width="1" height="187" fill="url(#su)" opacity="0.09"/><rect x="564" y="116" width="1" height="187" fill="url(#su)" opacity="0.09"/><rect x="570" y="116" width="1" height="187" fill="url(#su)" opacity="0.09"/><rect x="571" y="116" width="1" height="187" fill="url(#su)" opacity="0.03"/><rect x="574" y="116" width="2" height="187" fill="url(#su)" opacity="0.07"/><rect x="576" y="116" width="1" height="187" fill="url(#su)" opacity="0.03"/><rect x="578" y="116" width="2" height="187" fill="url(#su)" opacity="0.14"/><rect x="583" y="116" width="2" height="187" fill="url(#su)" opacity="0.06"/><rect x="590" y="116" width="1" height="187" fill="url(#su)" opacity="0.05"/><rect x="596" y="116" width="1" height="187" fill="url(#su)" opacity="0.11"/><rect x="607" y="116" width="2" height="187" fill="url(#su)" opacity="0.07"/><rect x="610" y="116" width="1" height="187" fill="url(#su)" opacity="0.03"/><rect x="619" y="116" width="3" height="187" fill="url(#su)" opacity="0.05"/><rect x="622" y="116" width="2" height="187" fill="url(#su)" opacity="0.03"/><rect x="625" y="116" width="1" height="187" fill="url(#su)" opacity="0.03"/><rect x="630" y="116" width="1" height="187" fill="url(#su)" opacity="0.14"/><rect x="632" y="116" width="1" height="187" fill="url(#su)" opacity="0.05"/><rect x="633" y="116" width="2" height="187" fill="url(#su)" opacity="0.06"/><rect x="636" y="116" width="3" height="187" fill="url(#su)" opacity="0.03"/><rect x="640" y="116" width="2" height="187" fill="url(#su)" opacity="0.08"/><rect x="645" y="116" width="1" height="187" fill="url(#su)" opacity="0.05"/><rect x="647" y="116" width="1" height="187" fill="url(#su)" opacity="0.04"/><rect x="649" y="116" width="2" height="187" fill="url(#su)" opacity="0.05"/><rect x="655" y="116" width="3" height="187" fill="url(#su)" opacity="0.08"/><rect x="664" y="116" width="2" height="187" fill="url(#su)" opacity="0.03"/><rect x="672" y="116" width="1" height="187" fill="url(#su)" opacity="0.07"/><rect x="674" y="116" width="2" height="187" fill="url(#su)" opacity="0.08"/><rect x="682" y="116" width="1" height="187" fill="url(#su)" opacity="0.10"/><rect x="687" y="116" width="3" height="187" fill="url(#su)" opacity="0.13"/><rect x="693" y="116" width="2" height="187" fill="url(#su)" opacity="0.15"/><rect x="700" y="116" width="1" height="187" fill="url(#su)" opacity="0.03"/><rect x="704" y="116" width="2" height="187" fill="url(#su)" opacity="0.14"/><rect x="708" y="116" width="2" height="187" fill="url(#su)" opacity="0.03"/><rect x="710" y="116" width="1" height="187" fill="url(#su)" opacity="0.03"/><rect x="714" y="116" width="2" height="187" fill="url(#su)" opacity="0.07"/><rect x="724" y="116" width="1" height="187" fill="url(#su)" opacity="0.03"/><rect x="729" y="116" width="1" height="187" fill="url(#su)" opacity="0.09"/><rect x="739" y="116" width="1" height="187" fill="url(#su)" opacity="0.08"/><rect x="740" y="116" width="3" height="187" fill="url(#su)" opacity="0.03"/><rect x="744" y="116" width="1" height="187" fill="url(#su)" opacity="0.08"/><rect x="745" y="116" width="1" height="187" fill="url(#su)" opacity="0.03"/><rect x="746" y="116" width="3" height="187" fill="url(#su)" opacity="0.04"/><rect x="750" y="116" width="2" height="187" fill="url(#su)" opacity="0.04"/><rect x="755" y="116" width="1" height="187" fill="url(#su)" opacity="0.11"/><rect x="756" y="116" width="2" height="187" fill="url(#su)" opacity="0.04"/><rect x="758" y="116" width="1" height="187" fill="url(#su)" opacity="0.11"/><rect x="761" y="116" width="1" height="187" fill="url(#su)" opacity="0.10"/><rect x="766" y="116" width="1" height="187" fill="url(#su)" opacity="0.04"/><rect x="769" y="116" width="1" height="187" fill="url(#su)" opacity="0.07"/><rect x="773" y="116" width="2" height="187" fill="url(#su)" opacity="0.10"/><rect x="775" y="116" width="1" height="187" fill="url(#su)" opacity="0.08"/><rect x="776" y="116" width="3" height="187" fill="url(#su)" opacity="0.09"/><rect x="782" y="116" width="1" height="187" fill="url(#su)" opacity="0.03"/><rect x="788" y="116" width="1" height="187" fill="url(#su)" opacity="0.05"/><rect x="798" y="116" width="2" height="187" fill="url(#su)" opacity="0.05"/><rect x="803" y="116" width="2" height="187" fill="url(#su)" opacity="0.05"/><rect x="806" y="116" width="1" height="187" fill="url(#su)" opacity="0.05"/><rect x="810" y="116" width="2" height="187" fill="url(#su)" opacity="0.11"/><rect x="814" y="116" width="1" height="187" fill="url(#su)" opacity="0.10"/><rect x="816" y="116" width="1" height="187" fill="url(#su)" opacity="0.03"/><rect x="817" y="116" width="2" height="187" fill="url(#su)" opacity="0.03"/><rect x="822" y="116" width="2" height="187" fill="url(#su)" opacity="0.03"/><rect x="833" y="116" width="2" height="187" fill="url(#su)" opacity="0.04"/><rect x="839" y="116" width="1" height="187" fill="url(#su)" opacity="0.14"/><rect x="843" y="116" width="1" height="187" fill="url(#su)" opacity="0.06"/><rect x="858" y="116" width="3" height="187" fill="url(#su)" opacity="0.05"/><rect x="861" y="116" width="1" height="187" fill="url(#su)" opacity="0.05"/><rect x="869" y="116" width="1" height="187" fill="url(#su)" opacity="0.06"/><rect x="871" y="116" width="1" height="187" fill="url(#su)" opacity="0.09"/><rect x="873" y="116" width="3" height="187" fill="url(#su)" opacity="0.13"/><rect x="876" y="116" width="2" height="187" fill="url(#su)" opacity="0.06"/><rect x="878" y="116" width="1" height="187" fill="url(#su)" opacity="0.03"/><rect x="879" y="116" width="2" height="187" fill="url(#su)" opacity="0.09"/><rect x="883" y="116" width="2" height="187" fill="url(#su)" opacity="0.03"/><rect x="886" y="116" width="2" height="187" fill="url(#su)" opacity="0.10"/><rect x="889" y="116" width="3" height="187" fill="url(#su)" opacity="0.11"/><rect x="893" y="116" width="1" height="187" fill="url(#su)" opacity="0.05"/><rect x="895" y="116" width="3" height="187" fill="url(#su)" opacity="0.14"/><rect x="899" y="116" width="1" height="187" fill="url(#su)" opacity="0.04"/><rect x="914" y="116" width="1" height="187" fill="url(#su)" opacity="0.10"/><rect x="921" y="116" width="1" height="187" fill="url(#su)" opacity="0.03"/><rect x="924" y="116" width="1" height="187" fill="url(#su)" opacity="0.11"/><rect x="925" y="116" width="1" height="187" fill="url(#su)" opacity="0.04"/><rect x="929" y="116" width="2" height="187" fill="url(#su)" opacity="0.06"/><rect x="941" y="116" width="2" height="187" fill="url(#su)" opacity="0.07"/><rect x="945" y="116" width="2" height="187" fill="url(#su)" opacity="0.11"/><rect x="948" y="116" width="1" height="187" fill="url(#su)" opacity="0.03"/><rect x="952" y="116" width="1" height="187" fill="url(#su)" opacity="0.03"/><rect x="965" y="116" width="1" height="187" fill="url(#su)" opacity="0.03"/><rect x="966" y="116" width="3" height="187" fill="url(#su)" opacity="0.08"/><rect x="970" y="116" width="3" height="187" fill="url(#su)" opacity="0.06"/><rect x="977" y="116" width="3" height="187" fill="url(#su)" opacity="0.03"/><rect x="981" y="116" width="3" height="187" fill="url(#su)" opacity="0.04"/><rect x="985" y="116" width="2" height="187" fill="url(#su)" opacity="0.08"/><rect x="988" y="116" width="2" height="187" fill="url(#su)" opacity="0.03"/><rect x="994" y="116" width="1" height="187" fill="url(#su)" opacity="0.05"/><rect x="998" y="116" width="1" height="187" fill="url(#su)" opacity="0.15"/><rect x="1005" y="116" width="3" height="187" fill="url(#su)" opacity="0.03"/><rect x="1011" y="116" width="2" height="187" fill="url(#su)" opacity="0.13"/><rect x="1018" y="116" width="3" height="187" fill="url(#su)" opacity="0.10"/><rect x="1026" y="116" width="1" height="187" fill="url(#su)" opacity="0.03"/><rect x="1028" y="116" width="3" height="187" fill="url(#su)" opacity="0.07"/><rect x="1031" y="116" width="2" height="187" fill="url(#su)" opacity="0.04"/><rect x="1040" y="116" width="1" height="187" fill="url(#su)" opacity="0.06"/><rect x="1053" y="116" width="3" height="187" fill="url(#su)" opacity="0.03"/><rect x="1061" y="116" width="1" height="187" fill="url(#su)" opacity="0.13"/><rect x="1063" y="116" width="1" height="187" fill="url(#su)" opacity="0.03"/><rect x="1067" y="116" width="1" height="187" fill="url(#su)" opacity="0.07"/><rect x="1070" y="116" width="2" height="187" fill="url(#su)" opacity="0.13"/><rect x="1076" y="116" width="2" height="187" fill="url(#su)" opacity="0.13"/><rect x="1082" y="116" width="1" height="187" fill="url(#su)" opacity="0.07"/><rect x="1083" y="116" width="2" height="187" fill="url(#su)" opacity="0.03"/><rect x="1088" y="116" width="1" height="187" fill="url(#su)" opacity="0.08"/><rect x="1097" y="116" width="1" height="187" fill="url(#su)" opacity="0.05"/><rect x="1098" y="116" width="1" height="187" fill="url(#su)" opacity="0.03"/><rect x="1100" y="116" width="1" height="187" fill="url(#su)" opacity="0.03"/><rect x="1116" y="116" width="1" height="187" fill="url(#su)" opacity="0.08"/><rect x="1126" y="116" width="3" height="187" fill="url(#su)" opacity="0.05"/><rect x="1134" y="116" width="1" height="187" fill="url(#su)" opacity="0.05"/><rect x="1141" y="116" width="3" height="187" fill="url(#su)" opacity="0.04"/><rect x="1154" y="116" width="1" height="187" fill="url(#su)" opacity="0.08"/><rect x="1159" y="116" width="3" height="187" fill="url(#su)" opacity="0.07"/><rect x="1164" y="116" width="1" height="187" fill="url(#su)" opacity="0.10"/><rect x="1173" y="116" width="1" height="187" fill="url(#su)" opacity="0.09"/><rect x="1174" y="116" width="1" height="187" fill="url(#su)" opacity="0.05"/><rect x="1176" y="116" width="2" height="187" fill="url(#su)" opacity="0.05"/><rect x="1180" y="116" width="1" height="187" fill="url(#su)" opacity="0.03"/><rect x="1182" y="116" width="1" height="187" fill="url(#su)" opacity="0.03"/><rect x="1184" y="116" width="1" height="187" fill="url(#su)" opacity="0.12"/><rect x="1188" y="116" width="1" height="187" fill="url(#su)" opacity="0.11"/><rect x="1190" y="116" width="2" height="187" fill="url(#su)" opacity="0.08"/><rect x="1195" y="116" width="2" height="187" fill="url(#su)" opacity="0.08"/><rect x="1207" y="116" width="2" height="187" fill="url(#su)" opacity="0.04"/><rect x="1211" y="116" width="1" height="187" fill="url(#su)" opacity="0.04"/><rect x="1217" y="116" width="3" height="187" fill="url(#su)" opacity="0.03"/><rect x="1223" y="116" width="3" height="187" fill="url(#su)" opacity="0.03"/><rect x="1229" y="116" width="1" height="187" fill="url(#su)" opacity="0.03"/><rect x="1232" y="116" width="1" height="187" fill="url(#su)" opacity="0.03"/><rect x="1235" y="116" width="2" height="187" fill="url(#su)" opacity="0.04"/><rect x="1239" y="116" width="1" height="187" fill="url(#su)" opacity="0.15"/><rect x="1240" y="116" width="1" height="187" fill="url(#su)" opacity="0.09"/><rect x="1245" y="116" width="2" height="187" fill="url(#su)" opacity="0.13"/><rect x="1247" y="116" width="1" height="187" fill="url(#su)" opacity="0.10"/><rect x="1250" y="116" width="2" height="187" fill="url(#su)" opacity="0.11"/><rect x="1261" y="116" width="2" height="187" fill="url(#su)" opacity="0.10"/><rect x="1264" y="116" width="3" height="187" fill="url(#su)" opacity="0.10"/><rect x="1270" y="116" width="3" height="187" fill="url(#su)" opacity="0.06"/><rect x="1276" y="116" width="1" height="187" fill="url(#su)" opacity="0.14"/><rect x="1277" y="116" width="2" height="187" fill="url(#su)" opacity="0.12"/><rect x="1289" y="116" width="1" height="187" fill="url(#su)" opacity="0.03"/><rect x="1299" y="116" width="1" height="187" fill="url(#su)" opacity="0.09"/><rect x="1302" y="116" width="3" height="187" fill="url(#su)" opacity="0.04"/><rect x="1307" y="116" width="2" height="187" fill="url(#su)" opacity="0.11"/><rect x="1309" y="116" width="2" height="187" fill="url(#su)" opacity="0.03"/><rect x="1318" y="116" width="1" height="187" fill="url(#su)" opacity="0.06"/><rect x="1323" y="116" width="1" height="187" fill="url(#su)" opacity="0.10"/><rect x="1330" y="116" width="1" height="187" fill="url(#su)" opacity="0.06"/><rect x="1342" y="116" width="2" height="187" fill="url(#su)" opacity="0.04"/><rect x="1346" y="116" width="1" height="187" fill="url(#su)" opacity="0.03"/><rect x="1347" y="116" width="1" height="187" fill="url(#su)" opacity="0.14"/><rect x="1350" y="116" width="1" height="187" fill="url(#su)" opacity="0.05"/><rect x="1345" y="116" width="4" height="341" fill="#000" opacity="0.05"/><rect x="1247" y="116" width="9" height="341" fill="#000" opacity="0.07"/><rect x="376" y="116" width="6" height="341" fill="#000" opacity="0.07"/><rect x="419" y="116" width="6" height="341" fill="#000" opacity="0.06"/><rect x="421" y="116" width="4" height="341" fill="#000" opacity="0.03"/><rect x="1106" y="116" width="3" height="341" fill="#000" opacity="0.04"/><rect x="640" y="116" width="9" height="341" fill="#000" opacity="0.04"/><rect x="532" y="116" width="6" height="341" fill="#000" opacity="0.04"/><rect x="909" y="116" width="3" height="341" fill="#000" opacity="0.06"/><rect x="408" y="116" width="6" height="341" fill="#000" opacity="0.04"/><rect x="222" y="116" width="4" height="341" fill="#000" opacity="0.04"/><rect x="491" y="116" width="2" height="341" fill="#000" opacity="0.05"/><rect x="1045" y="116" width="9" height="341" fill="#000" opacity="0.04"/><rect x="1260" y="116" width="3" height="341" fill="#000" opacity="0.03"/><rect x="594" y="116" width="3" height="341" fill="#000" opacity="0.06"/><rect x="1087" y="116" width="3" height="341" fill="#000" opacity="0.06"/><rect x="1023" y="116" width="2" height="341" fill="#000" opacity="0.02"/><rect x="548" y="116" width="6" height="341" fill="#000" opacity="0.04"/><rect x="1179" y="116" width="6" height="341" fill="#000" opacity="0.04"/><rect x="1079" y="116" width="9" height="341" fill="#000" opacity="0.05"/><rect x="524" y="116" width="9" height="341" fill="#000" opacity="0.03"/><rect x="214" y="116" width="3" height="341" fill="#000" opacity="0.05"/><rect x="317" y="116" width="3" height="341" fill="#000" opacity="0.04"/><rect x="669" y="116" width="9" height="341" fill="#000" opacity="0.05"/><rect x="779" y="116" width="9" height="341" fill="#000" opacity="0.03"/><rect x="1026" y="116" width="6" height="341" fill="#000" opacity="0.03"/><rect x="409" y="116" width="4" height="341" fill="#000" opacity="0.05"/><rect x="699" y="116" width="3" height="341" fill="#000" opacity="0.04"/><rect x="1192" y="116" width="3" height="341" fill="#000" opacity="0.03"/><rect x="605" y="116" width="9" height="341" fill="#000" opacity="0.03"/><rect x="214" y="116" width="2" height="341" fill="#000" opacity="0.06"/><rect x="738" y="116" width="2" height="341" fill="#000" opacity="0.06"/><rect x="1322" y="116" width="4" height="341" fill="#000" opacity="0.05"/><rect x="245" y="116" width="3" height="341" fill="#000" opacity="0.05"/><rect x="585" y="116" width="2" height="341" fill="#000" opacity="0.07"/><rect x="1195" y="116" width="3" height="341" fill="#000" opacity="0.06"/><rect x="474" y="116" width="6" height="341" fill="#000" opacity="0.03"/><rect x="750" y="116" width="6" height="341" fill="#000" opacity="0.04"/><rect x="555" y="116" width="6" height="341" fill="#000" opacity="0.06"/><rect x="429" y="116" width="6" height="341" fill="#000" opacity="0.03"/><rect x="1076" y="116" width="4" height="341" fill="#000" opacity="0.05"/><rect x="450" y="116" width="2" height="341" fill="#000" opacity="0.06"/><rect x="1241" y="116" width="3" height="341" fill="#000" opacity="0.04"/><rect x="471" y="116" width="9" height="341" fill="#000" opacity="0.04"/><rect x="1250" y="116" width="6" height="341" fill="#000" opacity="0.03"/><rect x="1244" y="116" width="6" height="341" fill="#000" opacity="0.03"/><rect x="613" y="116" width="9" height="341" fill="#000" opacity="0.03"/><rect x="1018" y="116" width="4" height="341" fill="#000" opacity="0.02"/><rect x="208" y="116" width="4" height="341" fill="#000" opacity="0.06"/><rect x="836" y="116" width="4" height="341" fill="#000" opacity="0.06"/><rect x="1217" y="116" width="6" height="341" fill="#000" opacity="0.04"/><rect x="571" y="116" width="4" height="341" fill="#000" opacity="0.02"/><rect x="1004" y="116" width="3" height="341" fill="#000" opacity="0.06"/><rect x="909" y="116" width="9" height="341" fill="#000" opacity="0.05"/><rect x="892" y="116" width="2" height="341" fill="#000" opacity="0.03"/><rect x="1149" y="116" width="6" height="341" fill="#000" opacity="0.04"/><rect x="1244" y="116" width="2" height="341" fill="#000" opacity="0.06"/><rect x="976" y="116" width="4" height="341" fill="#000" opacity="0.04"/><rect x="593" y="116" width="2" height="341" fill="#000" opacity="0.03"/><rect x="394" y="116" width="3" height="341" fill="#000" opacity="0.03"/><ellipse cx="215" cy="400" rx="72" ry="80" fill="url(#sr)" opacity="0.24"/><ellipse cx="930" cy="385" rx="64" ry="80" fill="url(#sr)" opacity="0.24"/><ellipse cx="1150" cy="390" rx="80" ry="64" fill="url(#sr)" opacity="0.20"/><ellipse cx="1240" cy="390" rx="64" ry="64" fill="url(#sr)" opacity="0.20"/><ellipse cx="870" cy="390" rx="64" ry="64" fill="url(#sr)" opacity="0.20"/><ellipse cx="350" cy="395" rx="80" ry="56" fill="url(#sr)" opacity="0.16"/><ellipse cx="600" cy="400" rx="64" ry="48" fill="url(#sr)" opacity="0.12"/><ellipse cx="780" cy="370" rx="144" ry="96" fill="url(#sr)" opacity="0.32"/><ellipse cx="700" cy="380" rx="64" ry="96" fill="url(#sr)" opacity="0.32"/><ellipse cx="185" cy="390" rx="40" ry="96" fill="url(#sr)" opacity="0.40"/><ellipse cx="985" cy="380" rx="80" ry="80" fill="url(#sr)" opacity="0.28"/><ellipse cx="1040" cy="385" rx="48" ry="72" fill="url(#sr)" opacity="0.24"/><ellipse cx="1115" cy="380" rx="48" ry="80" fill="url(#sr)" opacity="0.24"/><ellipse cx="1190" cy="380" rx="80" ry="72" fill="url(#sr)" opacity="0.24"/><ellipse cx="1290" cy="385" rx="64" ry="80" fill="url(#sr)" opacity="0.28"/><ellipse cx="270" cy="390" rx="48" ry="64" fill="url(#sr)" opacity="0.20"/><ellipse cx="450" cy="395" rx="96" ry="56" fill="url(#sr)" opacity="0.20"/><ellipse cx="540" cy="395" rx="48" ry="64" fill="url(#sr)" opacity="0.20"/><ellipse cx="620" cy="385" rx="40" ry="72" fill="url(#sr)" opacity="0.20"/><ellipse cx="675" cy="235" rx="32" ry="64" fill="url(#sr)" opacity="0.32"/><ellipse cx="714" cy="235" rx="25.6" ry="80" fill="url(#sr)" opacity="0.36"/><ellipse cx="780" cy="240" rx="44.8" ry="96" fill="url(#sr)" opacity="0.34"/><ellipse cx="850" cy="235" rx="40" ry="64" fill="url(#sr)" opacity="0.24"/><ellipse cx="185" cy="260" rx="19.2" ry="112" fill="url(#sr)" opacity="0.24"/><ellipse cx="230" cy="270" rx="48" ry="64" fill="url(#sr)" opacity="0.12"/><ellipse cx="1297" cy="230" rx="12.8" ry="96" fill="url(#sr)" opacity="0.28"/><ellipse cx="1060" cy="240" rx="12.8" ry="96" fill="url(#sr)" opacity="0.16"/><ellipse cx="500" cy="170" rx="96" ry="28.8" fill="url(#sr)" opacity="0.10"/><ellipse cx="330" cy="180" rx="144" ry="32" fill="url(#sr)" opacity="0.12"/><ellipse cx="620" cy="180" rx="96" ry="32" fill="url(#sr)" opacity="0.10"/><ellipse cx="900" cy="185" rx="320" ry="22.4" fill="url(#sr)" opacity="0.08"/><ellipse cx="1150" cy="190" rx="240" ry="19.2" fill="url(#sr)" opacity="0.12"/><rect x="178" y="116" width="6" height="341" fill="url(#sl)" opacity="0.10"/><rect x="182" y="116" width="2" height="341" fill="url(#sl)" opacity="0.14"/><rect x="271.75" y="116" width="1.5" height="341" fill="url(#sl)" opacity="0.12"/><rect x="424.95" y="116" width="1.5" height="341" fill="url(#sl)" opacity="0.12"/><rect x="493.25" y="116" width="1.5" height="341" fill="url(#sl)" opacity="0.13"/><rect x="618.85" y="116" width="1.5" height="341" fill="url(#sl)" opacity="0.13"/><rect x="701" y="116" width="2" height="341" fill="url(#sl)" opacity="0.06"/><rect x="706.5" y="116" width="3" height="341" fill="url(#sl)" opacity="0.07"/><rect x="755.4" y="116" width="2" height="341" fill="url(#sl)" opacity="0.16"/><rect x="769" y="116" width="12" height="341" fill="url(#sl)" opacity="0.06"/><rect x="783" y="116" width="14" height="341" fill="url(#sl)" opacity="0.06"/><rect x="848.85" y="116" width="1.5" height="341" fill="url(#sl)" opacity="0.14"/><rect x="991.25" y="116" width="1.5" height="341" fill="url(#sl)" opacity="0.11"/><rect x="1035.25" y="116" width="1.5" height="341" fill="url(#sl)" opacity="0.14"/><rect x="1059.25" y="116" width="1.5" height="341" fill="url(#sl)" opacity="0.10"/><rect x="1085.25" y="116" width="1.5" height="341" fill="url(#sl)" opacity="0.10"/><rect x="1110" y="116" width="2" height="341" fill="url(#sl)" opacity="0.08"/><rect x="1113" y="116" width="2" height="341" fill="url(#sl)" opacity="0.12"/><rect x="1167.95" y="116" width="1.5" height="341" fill="url(#sl)" opacity="0.10"/><rect x="1183.25" y="116" width="1.5" height="341" fill="url(#sl)" opacity="0.10"/><rect x="1187.25" y="116" width="1.5" height="341" fill="url(#sl)" opacity="0.10"/><rect x="1223.25" y="116" width="1.5" height="341" fill="url(#sl)" opacity="0.10"/><rect x="1282.25" y="116" width="1.5" height="341" fill="url(#sl)" opacity="0.08"/><rect x="1295.5" y="116" width="3" height="341" fill="url(#sl)" opacity="0.14"/><rect x="1317.25" y="116" width="1.5" height="341" fill="url(#sl)" opacity="0.06"/><rect x="214.25" y="116" width="1.5" height="341" fill="url(#sl)" opacity="0.06"/><rect x="204.25" y="116" width="1.5" height="341" fill="url(#sl)" opacity="0.05"/><rect x="600.7" y="386" width="1.7" height="71" fill="url(#ss)" opacity="0.13"/><rect x="1002.8" y="396" width="2.1" height="61" fill="url(#ss)" opacity="0.22"/><rect x="1135.1" y="407" width="1.5" height="50" fill="url(#ss)" opacity="0.16"/><rect x="970.9" y="307" width="1.9" height="150" fill="url(#ss)" opacity="0.14"/><rect x="574.4" y="362" width="2.1" height="95" fill="url(#ss)" opacity="0.13"/><rect x="918.2" y="342" width="2.0" height="115" fill="url(#ss)" opacity="0.14"/><rect x="408.7" y="377" width="1.2" height="80" fill="url(#ss)" opacity="0.17"/><rect x="314.8" y="383" width="1.4" height="74" fill="url(#ss)" opacity="0.10"/><rect x="902.1" y="331" width="2.0" height="126" fill="url(#ss)" opacity="0.20"/><rect x="988.2" y="371" width="2.4" height="86" fill="url(#ss)" opacity="0.14"/><rect x="464.6" y="359" width="1.6" height="98" fill="url(#ss)" opacity="0.17"/><rect x="352.4" y="426" width="2.3" height="31" fill="url(#ss)" opacity="0.08"/><rect x="804.1" y="372" width="1.6" height="85" fill="url(#ss)" opacity="0.25"/><rect x="1179.8" y="318" width="1.1" height="139" fill="url(#ss)" opacity="0.18"/><rect x="935.8" y="329" width="2.1" height="128" fill="url(#ss)" opacity="0.12"/><rect x="849.0" y="356" width="1.3" height="101" fill="url(#ss)" opacity="0.20"/><rect x="690.1" y="377" width="1.8" height="80" fill="url(#ss)" opacity="0.25"/><rect x="678.7" y="325" width="2.3" height="132" fill="url(#ss)" opacity="0.12"/><rect x="490.4" y="327" width="1.5" height="130" fill="url(#ss)" opacity="0.12"/><rect x="819.5" y="344" width="1.2" height="113" fill="url(#ss)" opacity="0.17"/><rect x="960.3" y="307" width="1.5" height="150" fill="url(#ss)" opacity="0.12"/><rect x="1341.1" y="350" width="1.0" height="107" fill="url(#ss)" opacity="0.13"/><rect x="826.5" y="308" width="1.9" height="149" fill="url(#ss)" opacity="0.20"/><rect x="389.5" y="339" width="1.4" height="118" fill="url(#ss)" opacity="0.17"/><rect x="1280.8" y="291" width="2.3" height="166" fill="url(#ss)" opacity="0.24"/><rect x="965.7" y="334" width="1.0" height="123" fill="url(#ss)" opacity="0.13"/><rect x="718.0" y="377" width="1.1" height="80" fill="url(#ss)" opacity="0.20"/><rect x="479.9" y="312" width="2.4" height="145" fill="url(#ss)" opacity="0.17"/><rect x="795.7" y="355" width="2.2" height="102" fill="url(#ss)" opacity="0.26"/><rect x="737.3" y="375" width="1.6" height="82" fill="url(#ss)" opacity="0.24"/><rect x="177.2" y="301" width="1.5" height="156" fill="url(#ss)" opacity="0.21"/><rect x="494.0" y="388" width="1.9" height="69" fill="url(#ss)" opacity="0.17"/><rect x="245.0" y="390" width="1.9" height="67" fill="url(#ss)" opacity="0.08"/><rect x="379.4" y="313" width="1.2" height="144" fill="url(#ss)" opacity="0.11"/><rect x="577.8" y="336" width="1.6" height="121" fill="url(#ss)" opacity="0.08"/><rect x="639.7" y="323" width="1.1" height="134" fill="url(#ss)" opacity="0.17"/><rect x="1068.4" y="300" width="1.3" height="157" fill="url(#ss)" opacity="0.13"/><rect x="851.9" y="319" width="1.7" height="138" fill="url(#ss)" opacity="0.23"/><rect x="1090.8" y="401" width="2.2" height="56" fill="url(#ss)" opacity="0.09"/><rect x="1257.3" y="380" width="2.2" height="77" fill="url(#ss)" opacity="0.14"/><rect x="1031.3" y="354" width="2.4" height="103" fill="url(#ss)" opacity="0.16"/><rect x="574.3" y="366" width="2.1" height="91" fill="url(#ss)" opacity="0.11"/><rect x="1261.9" y="300" width="2.1" height="157" fill="url(#ss)" opacity="0.21"/><rect x="719.7" y="372" width="1.8" height="85" fill="url(#ss)" opacity="0.18"/><rect x="216.4" y="397" width="1.8" height="60" fill="url(#ss)" opacity="0.14"/><rect x="220.7" y="314" width="1.5" height="143" fill="url(#ss)" opacity="0.14"/><rect x="469.3" y="352" width="1.3" height="105" fill="url(#ss)" opacity="0.19"/><rect x="228.2" y="415" width="2.1" height="42" fill="url(#ss)" opacity="0.15"/><rect x="387.5" y="403" width="2.2" height="54" fill="url(#ss)" opacity="0.09"/><rect x="289.5" y="349" width="1.4" height="108" fill="url(#ss)" opacity="0.07"/><rect x="571.8" y="374" width="1.5" height="83" fill="url(#ss)" opacity="0.08"/><rect x="671.8" y="363" width="2.4" height="94" fill="url(#ss)" opacity="0.09"/><rect x="688.0" y="374" width="2.3" height="83" fill="url(#ss)" opacity="0.13"/><rect x="232.3" y="407" width="2.5" height="50" fill="url(#ss)" opacity="0.09"/><rect x="1127.8" y="334" width="1.5" height="123" fill="url(#ss)" opacity="0.18"/><rect x="426.2" y="324" width="1.6" height="133" fill="url(#ss)" opacity="0.15"/><rect x="974.0" y="348" width="1.7" height="109" fill="url(#ss)" opacity="0.13"/><rect x="796.7" y="319" width="2.4" height="138" fill="url(#ss)" opacity="0.24"/><rect x="1344.4" y="350" width="2.2" height="107" fill="url(#ss)" opacity="0.17"/><rect x="1286.9" y="354" width="1.3" height="103" fill="url(#ss)" opacity="0.19"/><rect x="369.2" y="377" width="1.1" height="80" fill="url(#ss)" opacity="0.09"/><rect x="573.7" y="385" width="1.5" height="72" fill="url(#ss)" opacity="0.06"/><rect x="409.6" y="392" width="2.3" height="65" fill="url(#ss)" opacity="0.14"/><rect x="250.7" y="352" width="1.6" height="105" fill="url(#ss)" opacity="0.12"/><rect x="324.5" y="318" width="1.1" height="139" fill="url(#ss)" opacity="0.15"/><rect x="749.7" y="299" width="1.2" height="158" fill="url(#ss)" opacity="0.27"/><rect x="258.6" y="388" width="1.3" height="69" fill="url(#ss)" opacity="0.11"/><rect x="656.6" y="339" width="2.0" height="118" fill="url(#ss)" opacity="0.11"/><rect x="858.4" y="354" width="1.4" height="103" fill="url(#ss)" opacity="0.16"/><rect x="889.6" y="308" width="1.6" height="149" fill="url(#ss)" opacity="0.18"/><rect x="625.9" y="342" width="1.2" height="115" fill="url(#ss)" opacity="0.18"/><rect x="289.7" y="391" width="1.7" height="66" fill="url(#ss)" opacity="0.08"/><rect x="185.1" y="290" width="1.9" height="167" fill="url(#ss)" opacity="0.26"/><rect x="1132.6" y="406" width="2.0" height="51" fill="url(#ss)" opacity="0.08"/><rect x="367.9" y="371" width="1.7" height="86" fill="url(#ss)" opacity="0.12"/><rect x="429.4" y="289" width="2.2" height="168" fill="url(#ss)" opacity="0.16"/><rect x="807.5" y="300" width="1.1" height="157" fill="url(#ss)" opacity="0.25"/><rect x="1102.4" y="408" width="1.8" height="49" fill="url(#ss)" opacity="0.14"/><rect x="1150.0" y="364" width="1.1" height="93" fill="url(#ss)" opacity="0.15"/><rect x="1301.6" y="358" width="2.2" height="99" fill="url(#ss)" opacity="0.25"/><rect x="1315.3" y="335" width="2.3" height="122" fill="url(#ss)" opacity="0.15"/><rect x="605.5" y="354" width="2.2" height="103" fill="url(#ss)" opacity="0.15"/><rect x="655.3" y="375" width="2.5" height="82" fill="url(#ss)" opacity="0.14"/><rect x="1349.7" y="373" width="1.1" height="84" fill="url(#ss)" opacity="0.11"/><rect x="770.0" y="318" width="1.5" height="139" fill="url(#ss)" opacity="0.17"/><rect x="718.6" y="388" width="1.9" height="69" fill="url(#ss)" opacity="0.12"/><rect x="329.1" y="401" width="2.2" height="56" fill="url(#ss)" opacity="0.12"/><rect x="834.7" y="304" width="1.9" height="153" fill="url(#ss)" opacity="0.26"/><rect x="306.9" y="402" width="1.3" height="55" fill="url(#ss)" opacity="0.14"/><rect x="1039.7" y="325" width="1.4" height="132" fill="url(#ss)" opacity="0.19"/><rect x="750.7" y="380" width="1.8" height="77" fill="url(#ss)" opacity="0.24"/><rect x="627.9" y="345" width="1.3" height="112" fill="url(#ss)" opacity="0.14"/><rect x="662.8" y="407" width="1.3" height="50" fill="url(#ss)" opacity="0.18"/><rect x="329.4" y="410" width="2.4" height="47" fill="url(#ss)" opacity="0.10"/><rect x="482.9" y="348" width="1.3" height="109" fill="url(#ss)" opacity="0.18"/><rect x="621.8" y="379" width="1.5" height="78" fill="url(#ss)" opacity="0.09"/><rect x="795.3" y="303" width="1.6" height="154" fill="url(#ss)" opacity="0.20"/><rect x="965.9" y="379" width="1.0" height="78" fill="url(#ss)" opacity="0.16"/><rect x="782.0" y="340" width="2.1" height="117" fill="url(#ss)" opacity="0.19"/><rect x="290.3" y="394" width="1.5" height="63" fill="url(#ss)" opacity="0.09"/><rect x="988.1" y="376" width="1.3" height="81" fill="url(#ss)" opacity="0.17"/><rect x="383.7" y="319" width="2.1" height="138" fill="url(#ss)" opacity="0.15"/><rect x="418.8" y="371" width="2.2" height="86" fill="url(#ss)" opacity="0.19"/><rect x="608.4" y="325" width="1.9" height="132" fill="url(#ss)" opacity="0.08"/><rect x="433.0" y="312" width="1.0" height="145" fill="url(#ss)" opacity="0.12"/><rect x="504.3" y="327" width="2.5" height="130" fill="url(#ss)" opacity="0.16"/><rect x="265.3" y="331" width="1.5" height="126" fill="url(#ss)" opacity="0.15"/><rect x="975.2" y="321" width="1.8" height="136" fill="url(#ss)" opacity="0.19"/><rect x="563.5" y="381" width="2.4" height="76" fill="url(#ss)" opacity="0.15"/><rect x="264.9" y="387" width="1.2" height="70" fill="url(#ss)" opacity="0.15"/><rect x="1115.4" y="357" width="2.3" height="100" fill="url(#ss)" opacity="0.17"/><rect x="1299.5" y="323" width="2.2" height="134" fill="url(#ss)" opacity="0.23"/><rect x="636.6" y="388" width="2.0" height="69" fill="url(#ss)" opacity="0.09"/><rect x="280.9" y="349" width="1.2" height="108" fill="url(#ss)" opacity="0.16"/><rect x="490.7" y="328" width="2.3" height="129" fill="url(#ss)" opacity="0.20"/><rect x="998.9" y="349" width="1.7" height="108" fill="url(#ss)" opacity="0.20"/><rect x="736.8" y="346" width="2.3" height="111" fill="url(#ss)" opacity="0.19"/><rect x="183.5" y="371" width="2.0" height="86" fill="url(#ss)" opacity="0.21"/><rect x="976.2" y="345" width="1.9" height="112" fill="url(#ss)" opacity="0.18"/><rect x="341.2" y="391" width="1.6" height="66" fill="url(#ss)" opacity="0.08"/><rect x="915.4" y="340" width="1.6" height="117" fill="url(#ss)" opacity="0.13"/><rect x="1117.2" y="338" width="1.4" height="119" fill="url(#ss)" opacity="0.12"/><rect x="243.3" y="341" width="1.6" height="116" fill="url(#ss)" opacity="0.11"/><rect x="305.3" y="339" width="1.9" height="118" fill="url(#ss)" opacity="0.13"/><rect x="344.1" y="422" width="1.5" height="35" fill="url(#ss)" opacity="0.08"/><rect x="746.1" y="332" width="2.5" height="125" fill="url(#ss)" opacity="0.16"/><rect x="458.8" y="308" width="2.5" height="149" fill="url(#ss)" opacity="0.24"/><rect x="573.8" y="338" width="1.3" height="119" fill="url(#ss)" opacity="0.09"/><rect x="602.9" y="351" width="1.2" height="106" fill="url(#ss)" opacity="0.16"/><rect x="886.7" y="391" width="2.5" height="66" fill="url(#ss)" opacity="0.10"/><rect x="370.4" y="408" width="2.0" height="49" fill="url(#ss)" opacity="0.10"/><rect x="477.2" y="294" width="1.0" height="163" fill="url(#ss)" opacity="0.26"/><rect x="346.3" y="362" width="2.2" height="95" fill="url(#ss)" opacity="0.11"/><rect x="271.9" y="394" width="1.2" height="63" fill="url(#ss)" opacity="0.17"/><rect x="864.2" y="352" width="1.5" height="105" fill="url(#ss)" opacity="0.21"/><rect x="938.4" y="362" width="1.7" height="95" fill="url(#ss)" opacity="0.16"/><rect x="422.2" y="370" width="1.4" height="87" fill="url(#ss)" opacity="0.20"/><rect x="255.3" y="380" width="1.9" height="77" fill="url(#ss)" opacity="0.15"/><rect x="524.3" y="312" width="2.4" height="145" fill="url(#ss)" opacity="0.17"/><rect x="601.4" y="354" width="1.2" height="103" fill="url(#ss)" opacity="0.17"/><rect x="332.8" y="355" width="1.2" height="102" fill="url(#ss)" opacity="0.19"/><rect x="1320.9" y="382" width="1.8" height="75" fill="url(#ss)" opacity="0.20"/><rect x="268.0" y="385" width="1.9" height="72" fill="url(#ss)" opacity="0.18"/><rect x="286.6" y="336" width="1.3" height="121" fill="url(#ss)" opacity="0.13"/><rect x="1279.8" y="378" width="1.1" height="79" fill="url(#ss)" opacity="0.21"/><rect x="426.0" y="323" width="1.2" height="134" fill="url(#ss)" opacity="0.20"/><rect x="349.4" y="366" width="2.2" height="91" fill="url(#ss)" opacity="0.12"/><rect x="1346.9" y="371" width="2.3" height="86" fill="url(#ss)" opacity="0.10"/><rect x="1077.5" y="314" width="2.4" height="143" fill="url(#ss)" opacity="0.11"/><rect x="522.4" y="414" width="1.6" height="43" fill="url(#ss)" opacity="0.09"/><rect x="882.6" y="391" width="2.2" height="66" fill="url(#ss)" opacity="0.14"/><rect x="605.9" y="414" width="1.3" height="43" fill="url(#ss)" opacity="0.11"/><rect x="581.4" y="341" width="1.6" height="116" fill="url(#ss)" opacity="0.15"/><rect x="222.7" y="349" width="2.1" height="108" fill="url(#ss)" opacity="0.13"/><rect x="938.1" y="402" width="1.6" height="55" fill="url(#ss)" opacity="0.10"/><rect x="700.9" y="309" width="2.4" height="148" fill="url(#ss)" opacity="0.18"/><rect x="889.1" y="367" width="1.9" height="90" fill="url(#ss)" opacity="0.13"/><rect x="534.3" y="302" width="1.8" height="155" fill="url(#ss)" opacity="0.17"/><rect x="206.8" y="314" width="1.1" height="143" fill="url(#ss)" opacity="0.20"/><rect x="689.3" y="298" width="1.8" height="159" fill="url(#ss)" opacity="0.15"/><rect x="248.8" y="332" width="2.3" height="125" fill="url(#ss)" opacity="0.16"/><rect x="960.5" y="331" width="2.5" height="126" fill="url(#ss)" opacity="0.14"/><rect x="832.3" y="383" width="1.1" height="74" fill="url(#ss)" opacity="0.28"/><rect x="227.7" y="319" width="2.4" height="138" fill="url(#ss)" opacity="0.11"/><rect x="246.2" y="340" width="1.7" height="117" fill="url(#ss)" opacity="0.08"/><rect x="330.2" y="324" width="2.2" height="133" fill="url(#ss)" opacity="0.10"/><rect x="447.2" y="358" width="1.4" height="99" fill="url(#ss)" opacity="0.26"/><rect x="957.9" y="345" width="2.1" height="112" fill="url(#ss)" opacity="0.17"/><rect x="1197.8" y="412" width="2.1" height="45" fill="url(#ss)" opacity="0.14"/><rect x="546.7" y="349" width="1.4" height="108" fill="url(#ss)" opacity="0.22"/><rect x="690.3" y="373" width="1.4" height="84" fill="url(#ss)" opacity="0.15"/><rect x="185.6" y="381" width="2.5" height="76" fill="url(#ss)" opacity="0.25"/><rect x="386.3" y="406" width="2.0" height="51" fill="url(#ss)" opacity="0.10"/><rect x="1224.4" y="348" width="1.5" height="109" fill="url(#ss)" opacity="0.24"/><rect x="212.2" y="312" width="1.7" height="145" fill="url(#ss)" opacity="0.18"/><rect x="858.5" y="342" width="1.4" height="115" fill="url(#ss)" opacity="0.13"/><rect x="1140.8" y="414" width="1.0" height="43" fill="url(#ss)" opacity="0.13"/><rect x="891.5" y="312" width="1.0" height="145" fill="url(#ss)" opacity="0.11"/><rect x="1317.7" y="321" width="2.3" height="136" fill="url(#ss)" opacity="0.21"/><rect x="463.1" y="368" width="1.2" height="89" fill="url(#ss)" opacity="0.15"/><rect x="891.7" y="349" width="1.9" height="108" fill="url(#ss)" opacity="0.15"/><rect x="748.4" y="356" width="1.9" height="101" fill="url(#ss)" opacity="0.24"/><rect x="721.0" y="344" width="2.4" height="113" fill="url(#ss)" opacity="0.26"/><rect x="537.5" y="347" width="1.6" height="110" fill="url(#ss)" opacity="0.19"/><rect x="923.1" y="369" width="1.0" height="88" fill="url(#ss)" opacity="0.13"/><rect x="1049.1" y="378" width="2.0" height="79" fill="url(#ss)" opacity="0.20"/><rect x="641.1" y="369" width="2.3" height="88" fill="url(#ss)" opacity="0.12"/><rect x="544.6" y="353" width="1.1" height="104" fill="url(#ss)" opacity="0.11"/><rect x="804.1" y="295" width="1.4" height="162" fill="url(#ss)" opacity="0.15"/><rect x="638.3" y="322" width="1.3" height="135" fill="url(#ss)" opacity="0.13"/><rect x="584.4" y="324" width="1.1" height="133" fill="url(#ss)" opacity="0.15"/><rect x="540.5" y="355" width="1.8" height="102" fill="url(#ss)" opacity="0.25"/><rect x="983.2" y="338" width="1.4" height="119" fill="url(#ss)" opacity="0.16"/><rect x="458.5" y="366" width="1.4" height="91" fill="url(#ss)" opacity="0.19"/><rect x="305.4" y="368" width="2.1" height="89" fill="url(#ss)" opacity="0.08"/><rect x="1299.1" y="354" width="1.7" height="103" fill="url(#ss)" opacity="0.22"/><rect x="639.8" y="414" width="2.3" height="43" fill="url(#ss)" opacity="0.16"/><rect x="473.7" y="316" width="1.6" height="141" fill="url(#ss)" opacity="0.18"/><rect x="1084.2" y="331" width="2.1" height="126" fill="url(#ss)" opacity="0.18"/><rect x="958.9" y="351" width="1.6" height="106" fill="url(#ss)" opacity="0.15"/><rect x="169.0" y="314" width="1.7" height="143" fill="url(#ss)" opacity="0.20"/><rect x="1008.6" y="308" width="2.3" height="149" fill="url(#ss)" opacity="0.18"/><rect x="439.5" y="350" width="1.2" height="107" fill="url(#ss)" opacity="0.15"/><rect x="719.1" y="357" width="1.0" height="100" fill="url(#ss)" opacity="0.19"/><rect x="288.4" y="356" width="1.1" height="101" fill="url(#ss)" opacity="0.06"/><rect x="854.1" y="317" width="1.7" height="140" fill="url(#ss)" opacity="0.11"/><rect x="423.7" y="402" width="1.1" height="55" fill="url(#ss)" opacity="0.13"/><rect x="225.6" y="391" width="1.8" height="66" fill="url(#ss)" opacity="0.12"/><rect x="597.6" y="362" width="1.6" height="95" fill="url(#ss)" opacity="0.12"/><rect x="516.3" y="402" width="2.3" height="55" fill="url(#ss)" opacity="0.12"/><rect x="1256.3" y="372" width="2.4" height="85" fill="url(#ss)" opacity="0.13"/><rect x="730.0" y="333" width="1.9" height="124" fill="url(#ss)" opacity="0.25"/><rect x="758.5" y="383" width="1.9" height="74" fill="url(#ss)" opacity="0.13"/><rect x="269.4" y="332" width="2.5" height="125" fill="url(#ss)" opacity="0.13"/><rect x="1314.2" y="367" width="1.9" height="90" fill="url(#ss)" opacity="0.21"/><rect x="1110.8" y="316" width="1.1" height="141" fill="url(#ss)" opacity="0.11"/><rect x="1294.0" y="306" width="1.4" height="151" fill="url(#ss)" opacity="0.24"/><rect x="168.5" y="334" width="1.9" height="123" fill="url(#ss)" opacity="0.28"/><rect x="756.4" y="367" width="1.4" height="90" fill="url(#ss)" opacity="0.20"/><rect x="1189.1" y="348" width="1.1" height="109" fill="url(#ss)" opacity="0.14"/><rect x="841.8" y="328" width="1.6" height="129" fill="url(#ss)" opacity="0.24"/><rect x="899.6" y="323" width="1.4" height="134" fill="url(#ss)" opacity="0.21"/><rect x="1201.4" y="406" width="2.0" height="51" fill="url(#ss)" opacity="0.10"/><rect x="1155.8" y="381" width="1.9" height="76" fill="url(#ss)" opacity="0.19"/><rect x="393.0" y="316" width="1.1" height="141" fill="url(#ss)" opacity="0.10"/><rect x="951.3" y="328" width="1.7" height="129" fill="url(#ss)" opacity="0.09"/><rect x="1200.0" y="375" width="1.1" height="82" fill="url(#ss)" opacity="0.16"/><rect x="818.2" y="354" width="2.0" height="103" fill="url(#ss)" opacity="0.22"/><rect x="1268.2" y="377" width="1.1" height="80" fill="url(#ss)" opacity="0.14"/><rect x="882.0" y="365" width="2.5" height="92" fill="url(#ss)" opacity="0.13"/><rect x="519.6" y="376" width="1.1" height="81" fill="url(#ss)" opacity="0.14"/><rect x="833.5" y="327" width="2.3" height="130" fill="url(#ss)" opacity="0.17"/><rect x="273.0" y="351" width="2.3" height="106" fill="url(#ss)" opacity="0.13"/><rect x="1051.7" y="345" width="1.7" height="112" fill="url(#ss)" opacity="0.10"/><rect x="938.9" y="314" width="2.5" height="143" fill="url(#ss)" opacity="0.16"/><rect x="598.2" y="367" width="1.4" height="90" fill="url(#ss)" opacity="0.14"/><rect x="352.2" y="326" width="2.1" height="131" fill="url(#ss)" opacity="0.12"/><rect x="769.2" y="289" width="2.1" height="168" fill="url(#ss)" opacity="0.22"/><rect x="553.5" y="395" width="2.2" height="62" fill="url(#ss)" opacity="0.16"/><rect x="1239.8" y="392" width="2.0" height="65" fill="url(#ss)" opacity="0.10"/><rect x="714.5" y="344" width="1.7" height="113" fill="url(#ss)" opacity="0.12"/><rect x="678.6" y="315" width="1.0" height="142" fill="url(#ss)" opacity="0.13"/><rect x="596.7" y="340" width="2.1" height="117" fill="url(#ss)" opacity="0.09"/><rect x="774.7" y="342" width="1.6" height="115" fill="url(#ss)" opacity="0.21"/><rect x="908.3" y="387" width="1.9" height="70" fill="url(#ss)" opacity="0.10"/><rect x="1245.0" y="361" width="1.0" height="96" fill="url(#ss)" opacity="0.10"/><rect x="234.2" y="378" width="2.0" height="79" fill="url(#ss)" opacity="0.09"/><rect x="906.2" y="338" width="1.5" height="119" fill="url(#ss)" opacity="0.21"/><rect x="1168.2" y="370" width="1.0" height="87" fill="url(#ss)" opacity="0.23"/><rect x="499.5" y="339" width="1.5" height="118" fill="url(#ss)" opacity="0.20"/><rect x="544.6" y="354" width="2.4" height="103" fill="url(#ss)" opacity="0.25"/><rect x="374.1" y="331" width="1.9" height="126" fill="url(#ss)" opacity="0.16"/><rect x="882.5" y="340" width="2.2" height="117" fill="url(#ss)" opacity="0.15"/><rect x="733.7" y="297" width="1.7" height="160" fill="url(#ss)" opacity="0.23"/><rect x="1049.4" y="375" width="2.0" height="82" fill="url(#ss)" opacity="0.18"/><rect x="550.0" y="355" width="2.1" height="102" fill="url(#ss)" opacity="0.17"/><rect x="624.1" y="394" width="1.6" height="63" fill="url(#ss)" opacity="0.18"/><rect x="822.2" y="291" width="1.2" height="166" fill="url(#ss)" opacity="0.16"/><rect x="1089.7" y="332" width="1.0" height="125" fill="url(#ss)" opacity="0.09"/><rect x="1260.7" y="319" width="1.0" height="138" fill="url(#ss)" opacity="0.16"/><rect x="370.3" y="334" width="1.2" height="123" fill="url(#ss)" opacity="0.09"/><rect x="391.1" y="366" width="2.3" height="91" fill="url(#ss)" opacity="0.19"/><rect x="692.4" y="360" width="1.4" height="97" fill="url(#ss)" opacity="0.21"/><rect x="480.7" y="332" width="1.9" height="125" fill="url(#ss)" opacity="0.27"/><rect x="1167.3" y="328" width="1.4" height="129" fill="url(#ss)" opacity="0.16"/><rect x="212.5" y="344" width="1.8" height="113" fill="url(#ss)" opacity="0.18"/><rect x="826.0" y="334" width="1.6" height="123" fill="url(#ss)" opacity="0.19"/><rect x="759.9" y="310" width="1.9" height="147" fill="url(#ss)" opacity="0.24"/><rect x="396.7" y="327" width="1.8" height="130" fill="url(#ss)" opacity="0.11"/><rect x="825.0" y="290" width="1.4" height="167" fill="url(#ss)" opacity="0.22"/><rect x="796.2" y="298" width="2.3" height="159" fill="url(#ss)" opacity="0.24"/><rect x="1055.7" y="350" width="2.5" height="107" fill="url(#ss)" opacity="0.20"/><rect x="813.8" y="292" width="2.1" height="165" fill="url(#ss)" opacity="0.17"/><rect x="453.1" y="338" width="2.4" height="119" fill="url(#ss)" opacity="0.23"/><rect x="1338.8" y="401" width="1.9" height="56" fill="url(#ss)" opacity="0.11"/><rect x="1261.6" y="349" width="1.4" height="108" fill="url(#ss)" opacity="0.14"/><rect x="1222.1" y="340" width="2.5" height="117" fill="url(#ss)" opacity="0.13"/><rect x="1109.9" y="334" width="1.2" height="123" fill="url(#ss)" opacity="0.13"/><rect x="1014.0" y="380" width="2.0" height="77" fill="url(#ss)" opacity="0.21"/><rect x="930.3" y="406" width="2.2" height="51" fill="url(#ss)" opacity="0.20"/><rect x="544.7" y="299" width="1.0" height="158" fill="url(#ss)" opacity="0.24"/><rect x="526.3" y="399" width="2.0" height="58" fill="url(#ss)" opacity="0.14"/><rect x="658.2" y="384" width="1.1" height="73" fill="url(#ss)" opacity="0.13"/><rect x="403.0" y="327" width="1.4" height="130" fill="url(#ss)" opacity="0.14"/><rect x="1274.9" y="355" width="1.2" height="102" fill="url(#ss)" opacity="0.22"/><rect x="985.5" y="387" width="1.5" height="70" fill="url(#ss)" opacity="0.12"/><rect x="863.0" y="299" width="1.4" height="158" fill="url(#ss)" opacity="0.14"/><rect x="887.8" y="363" width="1.6" height="94" fill="url(#ss)" opacity="0.20"/><rect x="886.3" y="327" width="1.0" height="130" fill="url(#ss)" opacity="0.17"/><rect x="908.6" y="348" width="1.7" height="109" fill="url(#ss)" opacity="0.11"/><rect x="1304.3" y="300" width="1.6" height="157" fill="url(#ss)" opacity="0.16"/><rect x="611.2" y="331" width="1.5" height="126" fill="url(#ss)" opacity="0.16"/><rect x="245.5" y="352" width="1.9" height="105" fill="url(#ss)" opacity="0.15"/><rect x="932.9" y="321" width="2.1" height="136" fill="url(#ss)" opacity="0.10"/><rect x="1337.4" y="388" width="1.9" height="69" fill="url(#ss)" opacity="0.10"/><rect x="699.6" y="331" width="1.1" height="126" fill="url(#ss)" opacity="0.15"/><rect x="1145.4" y="395" width="1.6" height="62" fill="url(#ss)" opacity="0.13"/><rect x="280.2" y="316" width="1.5" height="141" fill="url(#ss)" opacity="0.16"/><rect x="1121.7" y="409" width="1.6" height="48" fill="url(#ss)" opacity="0.17"/><rect x="509.3" y="336" width="2.0" height="121" fill="url(#ss)" opacity="0.13"/><rect x="1210.5" y="399" width="1.2" height="58" fill="url(#ss)" opacity="0.15"/><rect x="517.9" y="340" width="2.5" height="117" fill="url(#ss)" opacity="0.10"/><rect x="927.8" y="369" width="2.3" height="88" fill="url(#ss)" opacity="0.12"/><rect x="826.6" y="299" width="1.6" height="158" fill="url(#ss)" opacity="0.22"/><rect x="967.9" y="364" width="2.3" height="93" fill="url(#ss)" opacity="0.18"/><rect x="443.5" y="336" width="1.4" height="121" fill="url(#ss)" opacity="0.17"/><rect x="754.6" y="296" width="2.2" height="161" fill="url(#ss)" opacity="0.20"/><rect x="851.8" y="308" width="2.4" height="149" fill="url(#ss)" opacity="0.16"/><rect x="957.5" y="395" width="1.0" height="62" fill="url(#ss)" opacity="0.11"/><rect x="883.6" y="361" width="1.4" height="96" fill="url(#ss)" opacity="0.14"/><rect x="1035.2" y="298" width="2.0" height="159" fill="url(#ss)" opacity="0.22"/><rect x="721.9" y="338" width="1.0" height="119" fill="url(#ss)" opacity="0.23"/><rect x="1115.6" y="330" width="1.7" height="127" fill="url(#ss)" opacity="0.14"/><rect x="483.8" y="344" width="1.4" height="113" fill="url(#ss)" opacity="0.24"/><rect x="804.1" y="353" width="2.4" height="104" fill="url(#ss)" opacity="0.24"/><rect x="314.9" y="369" width="2.0" height="88" fill="url(#ss)" opacity="0.15"/><rect x="812.3" y="306" width="2.0" height="151" fill="url(#ss)" opacity="0.19"/><rect x="603.5" y="413" width="1.2" height="44" fill="url(#ss)" opacity="0.13"/><rect x="468.9" y="335" width="2.3" height="122" fill="url(#ss)" opacity="0.19"/><rect x="934.0" y="355" width="1.2" height="102" fill="url(#ss)" opacity="0.17"/><rect x="355.9" y="360" width="1.1" height="97" fill="url(#ss)" opacity="0.13"/><rect x="1254.5" y="330" width="2.0" height="127" fill="url(#ss)" opacity="0.16"/><rect x="922.6" y="329" width="1.1" height="128" fill="url(#ss)" opacity="0.14"/><rect x="692.2" y="316" width="1.6" height="141" fill="url(#ss)" opacity="0.16"/><rect x="1175.8" y="347" width="2.4" height="110" fill="url(#ss)" opacity="0.11"/><rect x="804.7" y="326" width="1.5" height="131" fill="url(#ss)" opacity="0.19"/><rect x="1029.7" y="294" width="1.9" height="163" fill="url(#ss)" opacity="0.16"/><rect x="1304.6" y="357" width="2.4" height="100" fill="url(#ss)" opacity="0.24"/><rect x="261.6" y="332" width="2.1" height="125" fill="url(#ss)" opacity="0.13"/><rect x="1295.5" y="332" width="1.9" height="125" fill="url(#ss)" opacity="0.12"/><rect x="341.5" y="386" width="1.5" height="71" fill="url(#ss)" opacity="0.11"/><rect x="1029.3" y="287" width="1.3" height="170" fill="url(#ss)" opacity="0.12"/><rect x="300.4" y="414" width="2.1" height="43" fill="url(#ss)" opacity="0.11"/><rect x="560.5" y="332" width="2.5" height="125" fill="url(#ss)" opacity="0.09"/><rect x="1001.5" y="344" width="1.1" height="113" fill="url(#ss)" opacity="0.20"/><rect x="559.8" y="353" width="2.4" height="104" fill="url(#ss)" opacity="0.17"/><rect x="1245.8" y="315" width="1.7" height="142" fill="url(#ss)" opacity="0.14"/><rect x="1083.7" y="402" width="1.6" height="55" fill="url(#ss)" opacity="0.11"/><rect x="380.0" y="314" width="1.6" height="143" fill="url(#ss)" opacity="0.21"/><rect x="1133.6" y="341" width="2.3" height="116" fill="url(#ss)" opacity="0.13"/><rect x="502.0" y="310" width="1.8" height="147" fill="url(#ss)" opacity="0.22"/><rect x="477.1" y="311" width="2.0" height="146" fill="url(#ss)" opacity="0.27"/><rect x="431.3" y="293" width="1.8" height="164" fill="url(#ss)" opacity="0.14"/><rect x="665.0" y="401" width="1.7" height="56" fill="url(#ss)" opacity="0.08"/><rect x="433.0" y="349" width="1.4" height="108" fill="url(#ss)" opacity="0.15"/><rect x="780.9" y="387" width="2.2" height="70" fill="url(#ss)" opacity="0.25"/><rect x="678.3" y="334" width="2.5" height="123" fill="url(#ss)" opacity="0.19"/><rect x="312.1" y="336" width="1.7" height="121" fill="url(#ss)" opacity="0.13"/><rect x="981.7" y="309" width="1.4" height="148" fill="url(#ss)" opacity="0.15"/><rect x="621.6" y="371" width="2.5" height="86" fill="url(#ss)" opacity="0.11"/><rect x="867.1" y="352" width="2.0" height="105" fill="url(#ss)" opacity="0.24"/><rect x="912.1" y="358" width="2.2" height="99" fill="url(#ss)" opacity="0.13"/><rect x="245.8" y="395" width="2.4" height="62" fill="url(#ss)" opacity="0.14"/><rect x="1121.2" y="345" width="1.7" height="112" fill="url(#ss)" opacity="0.10"/><rect x="1088.9" y="359" width="1.0" height="98" fill="url(#ss)" opacity="0.11"/><rect x="1053.2" y="359" width="1.4" height="98" fill="url(#ss)" opacity="0.15"/><rect x="543.6" y="340" width="1.7" height="117" fill="url(#ss)" opacity="0.13"/><rect x="903.2" y="379" width="2.0" height="78" fill="url(#ss)" opacity="0.11"/><rect x="911.9" y="321" width="2.0" height="136" fill="url(#ss)" opacity="0.14"/><rect x="897.0" y="333" width="1.5" height="124" fill="url(#ss)" opacity="0.12"/><rect x="258.8" y="368" width="1.1" height="89" fill="url(#ss)" opacity="0.07"/><rect x="307.6" y="370" width="2.3" height="87" fill="url(#ss)" opacity="0.16"/><rect x="1227.2" y="349" width="2.2" height="108" fill="url(#ss)" opacity="0.21"/><rect x="1135.5" y="393" width="2.3" height="64" fill="url(#ss)" opacity="0.18"/><rect x="300.9" y="338" width="1.3" height="119" fill="url(#ss)" opacity="0.12"/><rect x="888.6" y="317" width="1.5" height="140" fill="url(#ss)" opacity="0.14"/><rect x="614.2" y="406" width="1.3" height="51" fill="url(#ss)" opacity="0.12"/><rect x="956.7" y="385" width="1.3" height="72" fill="url(#ss)" opacity="0.14"/><rect x="673.2" y="317" width="1.1" height="140" fill="url(#ss)" opacity="0.13"/><rect x="872.7" y="345" width="1.8" height="112" fill="url(#ss)" opacity="0.23"/><rect x="419.2" y="377" width="1.9" height="80" fill="url(#ss)" opacity="0.14"/><rect x="687.6" y="369" width="2.3" height="88" fill="url(#ss)" opacity="0.17"/><rect x="931.4" y="343" width="1.6" height="114" fill="url(#ss)" opacity="0.17"/><rect x="172.2" y="373" width="2.4" height="84" fill="url(#ss)" opacity="0.13"/><rect x="1169.6" y="353" width="1.5" height="104" fill="url(#ss)" opacity="0.18"/><rect x="1086.9" y="388" width="1.8" height="69" fill="url(#ss)" opacity="0.21"/><rect x="1317.4" y="358" width="1.2" height="99" fill="url(#ss)" opacity="0.20"/><rect x="1266.4" y="343" width="2.3" height="114" fill="url(#ss)" opacity="0.18"/><rect x="581.6" y="327" width="1.3" height="130" fill="url(#ss)" opacity="0.09"/><rect x="235.8" y="390" width="1.9" height="67" fill="url(#ss)" opacity="0.09"/><rect x="570.3" y="366" width="2.1" height="91" fill="url(#ss)" opacity="0.09"/><rect x="1282.9" y="307" width="1.6" height="150" fill="url(#ss)" opacity="0.15"/><rect x="1163.0" y="306" width="1.7" height="151" fill="url(#ss)" opacity="0.09"/><rect x="1314.0" y="382" width="1.1" height="75" fill="url(#ss)" opacity="0.15"/><rect x="795.0" y="296" width="2.3" height="161" fill="url(#ss)" opacity="0.22"/><rect x="430.9" y="333" width="2.4" height="124" fill="url(#ss)" opacity="0.16"/><rect x="544.0" y="296" width="1.6" height="161" fill="url(#ss)" opacity="0.17"/><rect x="516.5" y="408" width="2.2" height="49" fill="url(#ss)" opacity="0.11"/><rect x="1180.6" y="343" width="1.6" height="114" fill="url(#ss)" opacity="0.16"/><rect x="684.6" y="354" width="2.2" height="103" fill="url(#ss)" opacity="0.12"/><rect x="512.0" y="405" width="1.8" height="52" fill="url(#ss)" opacity="0.12"/><rect x="219.8" y="367" width="2.2" height="90" fill="url(#ss)" opacity="0.11"/><rect x="175.0" y="364" width="1.2" height="93" fill="url(#ss)" opacity="0.19"/><rect x="871.1" y="362" width="1.0" height="95" fill="url(#ss)" opacity="0.14"/><rect x="358.6" y="367" width="1.6" height="90" fill="url(#ss)" opacity="0.14"/><rect x="281.0" y="356" width="1.4" height="101" fill="url(#ss)" opacity="0.13"/><rect x="992.6" y="373" width="1.2" height="84" fill="url(#ss)" opacity="0.20"/><rect x="1229.3" y="372" width="1.8" height="85" fill="url(#ss)" opacity="0.28"/><rect x="1153.2" y="394" width="1.8" height="63" fill="url(#ss)" opacity="0.16"/><rect x="876.1" y="309" width="1.0" height="148" fill="url(#ss)" opacity="0.21"/><rect x="485.9" y="378" width="2.1" height="79" fill="url(#ss)" opacity="0.16"/><rect x="1137.2" y="360" width="1.5" height="97" fill="url(#ss)" opacity="0.16"/><rect x="986.9" y="370" width="2.4" height="87" fill="url(#ss)" opacity="0.17"/><rect x="1268.5" y="347" width="2.1" height="110" fill="url(#ss)" opacity="0.14"/><rect x="460.7" y="309" width="1.9" height="148" fill="url(#ss)" opacity="0.16"/><rect x="1121.9" y="326" width="1.8" height="131" fill="url(#ss)" opacity="0.12"/><rect x="621.5" y="365" width="1.8" height="92" fill="url(#ss)" opacity="0.09"/><rect x="188.5" y="362" width="2.3" height="95" fill="url(#ss)" opacity="0.21"/><rect x="400.7" y="411" width="1.7" height="46" fill="url(#ss)" opacity="0.14"/><rect x="515.0" y="380" width="1.2" height="77" fill="url(#ss)" opacity="0.19"/><rect x="1293.6" y="383" width="2.0" height="74" fill="url(#ss)" opacity="0.11"/><rect x="262.1" y="409" width="1.8" height="48" fill="url(#ss)" opacity="0.11"/><rect x="1240.0" y="352" width="1.2" height="105" fill="url(#ss)" opacity="0.20"/><rect x="1070.3" y="394" width="1.9" height="63" fill="url(#ss)" opacity="0.21"/><rect x="327.5" y="334" width="2.4" height="123" fill="url(#ss)" opacity="0.12"/><rect x="303.1" y="326" width="2.1" height="131" fill="url(#ss)" opacity="0.11"/><rect x="562.1" y="385" width="2.3" height="72" fill="url(#ss)" opacity="0.18"/><rect x="235.8" y="360" width="1.8" height="97" fill="url(#ss)" opacity="0.13"/><rect x="859.1" y="357" width="2.3" height="100" fill="url(#ss)" opacity="0.14"/><rect x="681.6" y="313" width="2.5" height="144" fill="url(#ss)" opacity="0.17"/><rect x="1013.9" y="341" width="2.4" height="116" fill="url(#ss)" opacity="0.12"/><rect x="1140.1" y="389" width="1.2" height="68" fill="url(#ss)" opacity="0.19"/><rect x="1155.9" y="321" width="2.5" height="136" fill="url(#ss)" opacity="0.18"/><rect x="324.8" y="388" width="2.0" height="69" fill="url(#ss)" opacity="0.15"/><rect x="529.4" y="322" width="1.1" height="135" fill="url(#ss)" opacity="0.16"/><rect x="1338.1" y="393" width="1.8" height="64" fill="url(#ss)" opacity="0.10"/><rect x="740.6" y="294" width="2.4" height="163" fill="url(#ss)" opacity="0.22"/><rect x="1086.2" y="368" width="1.9" height="89" fill="url(#ss)" opacity="0.13"/><rect x="599.6" y="324" width="2.0" height="133" fill="url(#ss)" opacity="0.10"/><rect x="740.5" y="307" width="1.1" height="150" fill="url(#ss)" opacity="0.17"/><rect x="1232.8" y="351" width="2.1" height="106" fill="url(#ss)" opacity="0.24"/><rect x="237.8" y="379" width="1.5" height="78" fill="url(#ss)" opacity="0.08"/><rect x="848.3" y="363" width="2.1" height="94" fill="url(#ss)" opacity="0.15"/><rect x="588.9" y="322" width="1.9" height="135" fill="url(#ss)" opacity="0.14"/><rect x="522.6" y="346" width="1.8" height="111" fill="url(#ss)" opacity="0.13"/><rect x="567.7" y="408" width="1.9" height="49" fill="url(#ss)" opacity="0.13"/><rect x="649.6" y="410" width="2.4" height="47" fill="url(#ss)" opacity="0.16"/><rect x="1345.8" y="326" width="1.5" height="131" fill="url(#ss)" opacity="0.12"/><rect x="459.6" y="302" width="2.2" height="155" fill="url(#ss)" opacity="0.19"/><rect x="1144.8" y="325" width="1.7" height="132" fill="url(#ss)" opacity="0.12"/><rect x="536.3" y="391" width="1.1" height="66" fill="url(#ss)" opacity="0.20"/><rect x="1036.8" y="289" width="1.1" height="168" fill="url(#ss)" opacity="0.15"/><rect x="672.5" y="399" width="2.5" height="58" fill="url(#ss)" opacity="0.13"/><rect x="1049.5" y="370" width="2.4" height="87" fill="url(#ss)" opacity="0.16"/><rect x="1126.2" y="364" width="1.8" height="93" fill="url(#ss)" opacity="0.14"/><rect x="1021.4" y="346" width="2.2" height="111" fill="url(#ss)" opacity="0.19"/><rect x="1077.9" y="374" width="2.3" height="83" fill="url(#ss)" opacity="0.16"/><rect x="484.5" y="353" width="1.0" height="104" fill="url(#ss)" opacity="0.24"/><rect x="554.9" y="322" width="1.6" height="135" fill="url(#ss)" opacity="0.19"/><rect x="315.3" y="360" width="2.3" height="97" fill="url(#ss)" opacity="0.19"/><rect x="513.6" y="321" width="1.6" height="136" fill="url(#ss)" opacity="0.12"/><rect x="284.8" y="329" width="2.5" height="128" fill="url(#ss)" opacity="0.14"/><rect x="725.9" y="380" width="2.1" height="77" fill="url(#ss)" opacity="0.16"/><rect x="1346.5" y="340" width="1.1" height="117" fill="url(#ss)" opacity="0.10"/><rect x="355.4" y="384" width="1.6" height="73" fill="url(#ss)" opacity="0.12"/><rect x="529.1" y="324" width="1.6" height="133" fill="url(#ss)" opacity="0.14"/><rect x="900.1" y="354" width="1.4" height="103" fill="url(#ss)" opacity="0.11"/><rect x="1174.1" y="380" width="1.3" height="77" fill="url(#ss)" opacity="0.15"/><rect x="754.2" y="297" width="1.3" height="160" fill="url(#ss)" opacity="0.22"/><rect x="1173.9" y="320" width="1.3" height="137" fill="url(#ss)" opacity="0.15"/><rect x="1253.0" y="382" width="2.3" height="75" fill="url(#ss)" opacity="0.17"/><rect x="449.1" y="374" width="1.3" height="83" fill="url(#ss)" opacity="0.16"/><rect x="314.3" y="318" width="2.1" height="139" fill="url(#ss)" opacity="0.12"/><rect x="848.9" y="371" width="1.4" height="86" fill="url(#ss)" opacity="0.18"/><rect x="451.7" y="332" width="1.2" height="125" fill="url(#ss)" opacity="0.24"/><rect x="314.0" y="395" width="1.3" height="62" fill="url(#ss)" opacity="0.19"/><rect x="573.5" y="409" width="1.8" height="48" fill="url(#ss)" opacity="0.07"/><rect x="714.3" y="360" width="2.5" height="97" fill="url(#ss)" opacity="0.12"/><rect x="700.1" y="344" width="2.5" height="113" fill="url(#ss)" opacity="0.16"/><rect x="576.5" y="407" width="2.2" height="50" fill="url(#ss)" opacity="0.11"/><rect x="183.1" y="315" width="1.0" height="142" fill="url(#ss)" opacity="0.21"/><rect x="1350.7" y="377" width="1.9" height="80" fill="url(#ss)" opacity="0.12"/><rect x="784.0" y="351" width="1.2" height="106" fill="url(#ss)" opacity="0.25"/><rect x="1216.6" y="312" width="1.7" height="145" fill="url(#ss)" opacity="0.23"/><rect x="541.7" y="307" width="1.7" height="150" fill="url(#ss)" opacity="0.18"/><rect x="326.6" y="335" width="2.2" height="122" fill="url(#ss)" opacity="0.18"/><rect x="394.1" y="392" width="2.3" height="65" fill="url(#ss)" opacity="0.11"/><rect x="1336.6" y="396" width="1.9" height="61" fill="url(#ss)" opacity="0.16"/><rect x="800.0" y="326" width="2.5" height="131" fill="url(#ss)" opacity="0.21"/><rect x="413.0" y="326" width="1.6" height="131" fill="url(#ss)" opacity="0.13"/><rect x="1288.2" y="299" width="1.9" height="158" fill="url(#ss)" opacity="0.24"/><rect x="1020.0" y="301" width="1.8" height="156" fill="url(#ss)" opacity="0.17"/><rect x="291.1" y="332" width="1.1" height="125" fill="url(#ss)" opacity="0.10"/><rect x="1139.7" y="410" width="1.9" height="47" fill="url(#ss)" opacity="0.17"/><rect x="811.8" y="289" width="1.5" height="168" fill="url(#ss)" opacity="0.17"/><rect x="326.9" y="314" width="1.2" height="143" fill="url(#ss)" opacity="0.11"/><rect x="1167.2" y="351" width="1.7" height="106" fill="url(#ss)" opacity="0.13"/><rect x="275.9" y="398" width="1.6" height="59" fill="url(#ss)" opacity="0.14"/><rect x="573.3" y="340" width="1.3" height="117" fill="url(#ss)" opacity="0.16"/><rect x="1028.7" y="344" width="1.4" height="113" fill="url(#ss)" opacity="0.18"/><rect x="1126.3" y="337" width="1.8" height="120" fill="url(#ss)" opacity="0.10"/><rect x="197.3" y="368" width="1.1" height="89" fill="url(#ss)" opacity="0.24"/><rect x="855.9" y="312" width="1.1" height="145" fill="url(#ss)" opacity="0.18"/><rect x="1227.4" y="334" width="1.3" height="123" fill="url(#ss)" opacity="0.18"/><rect x="910.2" y="377" width="1.3" height="80" fill="url(#ss)" opacity="0.15"/><rect x="440.9" y="350" width="1.2" height="107" fill="url(#ss)" opacity="0.18"/><rect x="1338.9" y="347" width="1.2" height="110" fill="url(#ss)" opacity="0.19"/><rect x="453.8" y="300" width="1.2" height="157" fill="url(#ss)" opacity="0.20"/><rect x="1221.4" y="370" width="1.1" height="87" fill="url(#ss)" opacity="0.19"/><rect x="872.5" y="317" width="1.9" height="140" fill="url(#ss)" opacity="0.13"/><rect x="1275.9" y="289" width="1.6" height="168" fill="url(#ss)" opacity="0.23"/><rect x="1299.6" y="349" width="2.0" height="108" fill="url(#ss)" opacity="0.24"/><rect x="174.8" y="354" width="1.3" height="103" fill="url(#ss)" opacity="0.22"/><rect x="977.1" y="379" width="2.2" height="78" fill="url(#ss)" opacity="0.14"/><rect x="766.4" y="340" width="1.8" height="117" fill="url(#ss)" opacity="0.13"/><rect x="1270.4" y="317" width="1.4" height="140" fill="url(#ss)" opacity="0.19"/><rect x="531.3" y="379" width="1.7" height="78" fill="url(#ss)" opacity="0.20"/><rect x="587.9" y="333" width="1.8" height="124" fill="url(#ss)" opacity="0.12"/><rect x="351.8" y="368" width="1.2" height="89" fill="url(#ss)" opacity="0.09"/><rect x="1175.7" y="322" width="2.1" height="135" fill="url(#ss)" opacity="0.21"/><rect x="1158.8" y="374" width="1.5" height="83" fill="url(#ss)" opacity="0.17"/><rect x="1185.3" y="360" width="1.1" height="97" fill="url(#ss)" opacity="0.16"/><rect x="1048.0" y="334" width="1.9" height="123" fill="url(#ss)" opacity="0.11"/><rect x="348.2" y="405" width="1.3" height="52" fill="url(#ss)" opacity="0.11"/><rect x="512.2" y="378" width="1.7" height="79" fill="url(#ss)" opacity="0.13"/><rect x="1241.6" y="302" width="2.2" height="155" fill="url(#ss)" opacity="0.25"/><rect x="603.7" y="346" width="2.2" height="111" fill="url(#ss)" opacity="0.15"/><rect x="1134.8" y="317" width="1.8" height="140" fill="url(#ss)" opacity="0.11"/><rect x="1336.4" y="375" width="1.5" height="82" fill="url(#ss)" opacity="0.16"/><rect x="1255.5" y="316" width="1.5" height="141" fill="url(#ss)" opacity="0.17"/><rect x="413.2" y="341" width="1.5" height="116" fill="url(#ss)" opacity="0.16"/><rect x="922.1" y="369" width="2.4" height="88" fill="url(#ss)" opacity="0.12"/><rect x="973.6" y="374" width="1.5" height="83" fill="url(#ss)" opacity="0.18"/><rect x="754.7" y="388" width="1.9" height="69" fill="url(#ss)" opacity="0.19"/><rect x="1349.2" y="355" width="1.6" height="102" fill="url(#ss)" opacity="0.10"/><rect x="681.2" y="331" width="1.2" height="126" fill="url(#ss)" opacity="0.11"/><rect x="312.1" y="365" width="2.3" height="92" fill="url(#ss)" opacity="0.20"/><rect x="1100.8" y="407" width="1.2" height="50" fill="url(#ss)" opacity="0.15"/><rect x="553.4" y="371" width="1.6" height="86" fill="url(#ss)" opacity="0.18"/><rect x="897.2" y="377" width="1.4" height="80" fill="url(#ss)" opacity="0.09"/><rect x="875.5" y="343" width="1.5" height="114" fill="url(#ss)" opacity="0.19"/><rect x="672.8" y="335" width="1.2" height="122" fill="url(#ss)" opacity="0.16"/><rect x="441.2" y="292" width="1.9" height="165" fill="url(#ss)" opacity="0.13"/><rect x="637.2" y="328" width="1.0" height="129" fill="url(#ss)" opacity="0.16"/><rect x="1209.7" y="309" width="1.4" height="148" fill="url(#ss)" opacity="0.13"/><rect x="908.9" y="328" width="2.1" height="129" fill="url(#ss)" opacity="0.23"/><rect x="296.0" y="330" width="1.0" height="127" fill="url(#ss)" opacity="0.15"/><rect x="863.9" y="320" width="1.7" height="137" fill="url(#ss)" opacity="0.23"/><rect x="441.1" y="360" width="1.3" height="97" fill="url(#ss)" opacity="0.21"/><rect x="792.9" y="288" width="2.2" height="169" fill="url(#ss)" opacity="0.18"/><rect x="430.1" y="350" width="1.4" height="107" fill="url(#ss)" opacity="0.13"/><rect x="1256.6" y="366" width="2.0" height="91" fill="url(#ss)" opacity="0.11"/><rect x="1330.7" y="326" width="1.6" height="131" fill="url(#ss)" opacity="0.18"/><rect x="648.6" y="325" width="2.3" height="132" fill="url(#ss)" opacity="0.15"/><rect x="585.6" y="399" width="1.5" height="58" fill="url(#ss)" opacity="0.15"/><rect x="857.0" y="377" width="1.0" height="80" fill="url(#ss)" opacity="0.17"/><rect x="1012.8" y="356" width="1.8" height="101" fill="url(#ss)" opacity="0.16"/><rect x="749.0" y="348" width="2.1" height="109" fill="url(#ss)" opacity="0.19"/><rect x="259.0" y="358" width="1.9" height="99" fill="url(#ss)" opacity="0.15"/><rect x="1168.1" y="375" width="1.2" height="82" fill="url(#ss)" opacity="0.16"/><rect x="1028.7" y="365" width="1.7" height="92" fill="url(#ss)" opacity="0.16"/><rect x="721.1" y="333" width="1.0" height="124" fill="url(#ss)" opacity="0.22"/><rect x="718.4" y="288" width="1.9" height="169" fill="url(#ss)" opacity="0.16"/><rect x="431.0" y="365" width="1.4" height="92" fill="url(#ss)" opacity="0.22"/><rect x="660.4" y="381" width="1.9" height="76" fill="url(#ss)" opacity="0.12"/><rect x="1149.1" y="349" width="1.3" height="108" fill="url(#ss)" opacity="0.11"/><rect x="1225.3" y="379" width="1.8" height="78" fill="url(#ss)" opacity="0.16"/><rect x="506.7" y="368" width="1.2" height="89" fill="url(#ss)" opacity="0.14"/><rect x="1233.2" y="304" width="2.4" height="153" fill="url(#ss)" opacity="0.10"/><rect x="719.9" y="338" width="1.1" height="119" fill="url(#ss)" opacity="0.24"/><rect x="191.2" y="395" width="1.9" height="7" fill="#000" opacity="0.14"/><rect x="969.1" y="391" width="1.3" height="4" fill="#000" opacity="0.12"/><rect x="441.6" y="426" width="1.4" height="5" fill="#000" opacity="0.19"/><rect x="939.2" y="394" width="1.8" height="4" fill="#000" opacity="0.22"/><rect x="257.2" y="411" width="1.8" height="8" fill="#000" opacity="0.10"/><rect x="1284.2" y="370" width="1.6" height="7" fill="#000" opacity="0.17"/><rect x="1294.3" y="438" width="1.9" height="8" fill="#000" opacity="0.11"/><rect x="560.7" y="418" width="1.7" height="10" fill="#000" opacity="0.14"/><rect x="1074.9" y="448" width="1.6" height="8" fill="#000" opacity="0.16"/><rect x="734.2" y="374" width="1.1" height="7" fill="#000" opacity="0.21"/><rect x="784.2" y="419" width="1.1" height="9" fill="#000" opacity="0.13"/><rect x="751.8" y="450" width="1.3" height="5" fill="#000" opacity="0.20"/><rect x="779.8" y="344" width="1.6" height="5" fill="#000" opacity="0.16"/><rect x="452.9" y="333" width="1.6" height="6" fill="#000" opacity="0.18"/><rect x="392.1" y="375" width="1.6" height="6" fill="#000" opacity="0.18"/><rect x="1138.6" y="345" width="1.4" height="5" fill="#000" opacity="0.18"/><rect x="1339.8" y="419" width="1.7" height="4" fill="#000" opacity="0.14"/><rect x="642.2" y="338" width="1.1" height="5" fill="#000" opacity="0.13"/><rect x="457.6" y="365" width="1.2" height="4" fill="#000" opacity="0.17"/><rect x="509.9" y="424" width="1.3" height="4" fill="#000" opacity="0.21"/><rect x="411.2" y="340" width="1.5" height="5" fill="#000" opacity="0.13"/><rect x="702.8" y="348" width="1.5" height="3" fill="#000" opacity="0.16"/><rect x="640.0" y="372" width="2.0" height="6" fill="#000" opacity="0.19"/><rect x="177.6" y="416" width="1.1" height="4" fill="#000" opacity="0.21"/><rect x="544.4" y="412" width="1.2" height="7" fill="#000" opacity="0.18"/><rect x="453.6" y="392" width="1.9" height="5" fill="#000" opacity="0.13"/><rect x="238.2" y="418" width="1.7" height="9" fill="#000" opacity="0.20"/><rect x="916.1" y="423" width="1.8" height="8" fill="#000" opacity="0.20"/><rect x="903.3" y="404" width="1.4" height="5" fill="#000" opacity="0.14"/><rect x="990.1" y="373" width="1.7" height="8" fill="#000" opacity="0.21"/><rect x="963.9" y="441" width="1.5" height="7" fill="#000" opacity="0.17"/><rect x="355.2" y="381" width="1.5" height="8" fill="#000" opacity="0.12"/><rect x="500.3" y="412" width="1.0" height="4" fill="#000" opacity="0.21"/><rect x="941.7" y="392" width="1.9" height="8" fill="#000" opacity="0.14"/><rect x="1169.4" y="360" width="1.4" height="4" fill="#000" opacity="0.12"/><rect x="341.7" y="340" width="1.9" height="6" fill="#000" opacity="0.22"/><rect x="797.2" y="328" width="1.6" height="9" fill="#000" opacity="0.13"/><rect x="548.3" y="357" width="1.3" height="8" fill="#000" opacity="0.13"/><rect x="719.9" y="372" width="1.7" height="6" fill="#000" opacity="0.19"/><rect x="525.2" y="450" width="1.0" height="9" fill="#000" opacity="0.20"/><rect x="851.0" y="425" width="1.6" height="4" fill="#000" opacity="0.21"/><rect x="698.6" y="410" width="1.8" height="6" fill="#000" opacity="0.11"/><rect x="1157.9" y="414" width="1.7" height="7" fill="#000" opacity="0.22"/><rect x="1314.6" y="422" width="1.3" height="7" fill="#000" opacity="0.15"/><rect x="1051.2" y="374" width="1.8" height="6" fill="#000" opacity="0.18"/><rect x="366.4" y="438" width="1.7" height="4" fill="#000" opacity="0.09"/><rect x="895.4" y="383" width="1.9" height="3" fill="#000" opacity="0.19"/><rect x="1096.0" y="363" width="1.0" height="9" fill="#000" opacity="0.12"/><rect x="1247.0" y="389" width="2.0" height="9" fill="#000" opacity="0.18"/><rect x="628.2" y="443" width="1.5" height="4" fill="#000" opacity="0.20"/><rect x="370.1" y="353" width="1.5" height="6" fill="#000" opacity="0.20"/><rect x="541.5" y="438" width="1.1" height="4" fill="#000" opacity="0.18"/><rect x="957.3" y="441" width="1.1" height="4" fill="#000" opacity="0.16"/><rect x="1308.0" y="413" width="1.8" height="10" fill="#000" opacity="0.12"/><rect x="267.5" y="412" width="1.1" height="4" fill="#000" opacity="0.12"/><rect x="206.6" y="411" width="1.2" height="8" fill="#000" opacity="0.22"/><rect x="1029.8" y="397" width="1.6" height="6" fill="#000" opacity="0.10"/><rect x="979.9" y="413" width="1.3" height="8" fill="#000" opacity="0.20"/><rect x="622.3" y="426" width="1.4" height="6" fill="#000" opacity="0.20"/><rect x="1276.7" y="448" width="1.8" height="8" fill="#000" opacity="0.13"/><rect x="430.5" y="381" width="1.2" height="6" fill="#000" opacity="0.09"/><rect x="471.4" y="343" width="1.8" height="7" fill="#000" opacity="0.18"/><rect x="835.8" y="431" width="1.4" height="6" fill="#000" opacity="0.08"/><rect x="654.0" y="349" width="2.0" height="5" fill="#000" opacity="0.14"/><rect x="331.1" y="381" width="1.5" height="9" fill="#000" opacity="0.19"/><rect x="518.5" y="384" width="1.9" height="8" fill="#000" opacity="0.21"/><rect x="789.4" y="354" width="2.0" height="8" fill="#000" opacity="0.21"/><rect x="1176.2" y="447" width="1.9" height="5" fill="#000" opacity="0.09"/><rect x="1288.4" y="441" width="1.7" height="10" fill="#000" opacity="0.10"/><rect x="1162.1" y="407" width="2.0" height="3" fill="#000" opacity="0.15"/><rect x="1186.0" y="405" width="1.4" height="6" fill="#000" opacity="0.11"/><rect x="933.2" y="403" width="1.5" height="10" fill="#000" opacity="0.15"/><rect x="686.1" y="338" width="1.1" height="7" fill="#000" opacity="0.16"/><rect x="477.5" y="386" width="2.0" height="10" fill="#000" opacity="0.11"/><rect x="681.2" y="373" width="2.0" height="10" fill="#000" opacity="0.15"/><rect x="612.2" y="405" width="1.6" height="8" fill="#000" opacity="0.12"/><rect x="544.2" y="328" width="1.4" height="4" fill="#000" opacity="0.22"/><rect x="1254.5" y="410" width="2.0" height="8" fill="#000" opacity="0.15"/><rect x="1169.5" y="388" width="1.4" height="10" fill="#000" opacity="0.11"/><rect x="617.0" y="367" width="1.6" height="6" fill="#000" opacity="0.12"/><rect x="827.5" y="353" width="1.8" height="9" fill="#000" opacity="0.12"/><rect x="233.8" y="362" width="2.0" height="10" fill="#000" opacity="0.09"/><rect x="897.8" y="405" width="1.7" height="6" fill="#000" opacity="0.10"/><rect x="912.6" y="422" width="1.4" height="5" fill="#000" opacity="0.10"/><rect x="251.8" y="354" width="1.5" height="9" fill="#000" opacity="0.16"/><rect x="860.3" y="376" width="1.4" height="8" fill="#000" opacity="0.17"/><rect x="640.0" y="342" width="1.1" height="6" fill="#000" opacity="0.14"/><rect x="446.2" y="398" width="1.2" height="4" fill="#000" opacity="0.19"/><rect x="827.9" y="443" width="1.0" height="6" fill="#000" opacity="0.18"/><rect x="266.9" y="404" width="1.1" height="7" fill="#000" opacity="0.14"/><rect x="623.8" y="345" width="1.7" height="5" fill="#000" opacity="0.12"/><rect x="637.8" y="413" width="1.6" height="6" fill="#000" opacity="0.19"/><rect x="631.2" y="439" width="1.5" height="7" fill="#000" opacity="0.10"/><rect x="639.6" y="445" width="1.0" height="8" fill="#000" opacity="0.14"/><rect x="991.3" y="444" width="1.6" height="4" fill="#000" opacity="0.17"/><rect x="738.8" y="440" width="1.3" height="7" fill="#000" opacity="0.16"/><rect x="167.8" y="351" width="1.6" height="7" fill="#000" opacity="0.10"/><rect x="523.4" y="414" width="2.0" height="9" fill="#000" opacity="0.18"/><rect x="831.1" y="390" width="1.3" height="10" fill="#000" opacity="0.14"/><rect x="741.2" y="359" width="1.3" height="6" fill="#000" opacity="0.17"/><rect x="339.5" y="362" width="1.5" height="7" fill="#000" opacity="0.16"/><rect x="667.8" y="380" width="1.2" height="8" fill="#000" opacity="0.20"/><rect x="735.1" y="328" width="1.6" height="5" fill="#000" opacity="0.18"/><rect x="720.4" y="352" width="2.0" height="6" fill="#000" opacity="0.21"/><rect x="569.3" y="341" width="1.1" height="4" fill="#000" opacity="0.19"/><rect x="1130.2" y="380" width="1.3" height="3" fill="#000" opacity="0.15"/><rect x="1110.0" y="333" width="1.5" height="4" fill="#000" opacity="0.13"/><rect x="724.3" y="329" width="1.5" height="9" fill="#000" opacity="0.19"/><rect x="1263.1" y="383" width="1.4" height="7" fill="#000" opacity="0.11"/><rect x="239.7" y="398" width="1.2" height="6" fill="#000" opacity="0.15"/><rect x="544.7" y="349" width="1.8" height="6" fill="#000" opacity="0.18"/><rect x="576.5" y="442" width="1.4" height="5" fill="#000" opacity="0.16"/><rect x="691.3" y="429" width="1.2" height="7" fill="#000" opacity="0.12"/><rect x="985.6" y="441" width="1.3" height="9" fill="#000" opacity="0.15"/><rect x="1288.2" y="440" width="2.0" height="3" fill="#000" opacity="0.13"/><rect x="867.6" y="423" width="1.6" height="9" fill="#000" opacity="0.10"/><rect x="427.8" y="435" width="1.7" height="7" fill="#000" opacity="0.09"/><rect x="233.6" y="343" width="1.0" height="6" fill="#000" opacity="0.15"/><rect x="528.0" y="346" width="1.2" height="7" fill="#000" opacity="0.20"/><rect x="527.8" y="361" width="1.5" height="8" fill="#000" opacity="0.12"/><rect x="1295.3" y="363" width="1.7" height="7" fill="#000" opacity="0.13"/><rect x="237.3" y="375" width="1.5" height="4" fill="#000" opacity="0.20"/><rect x="205.8" y="361" width="1.1" height="8" fill="#000" opacity="0.09"/><rect x="1052.4" y="393" width="1.6" height="9" fill="#000" opacity="0.10"/><rect x="1244.2" y="390" width="1.5" height="9" fill="#000" opacity="0.21"/><rect x="1178.4" y="394" width="2.0" height="3" fill="#000" opacity="0.11"/><rect x="515.6" y="393" width="1.6" height="4" fill="#000" opacity="0.12"/><rect x="980.7" y="435" width="1.1" height="4" fill="#000" opacity="0.21"/><rect x="846.9" y="399" width="1.0" height="3" fill="#000" opacity="0.19"/><rect x="881.6" y="450" width="1.5" height="8" fill="#000" opacity="0.11"/><rect x="1057.2" y="432" width="1.8" height="4" fill="#000" opacity="0.17"/><rect x="437.0" y="353" width="2.0" height="10" fill="#000" opacity="0.08"/><rect x="1168.1" y="407" width="1.4" height="7" fill="#000" opacity="0.10"/><rect x="436.4" y="386" width="1.1" height="8" fill="#000" opacity="0.22"/><rect x="1344.0" y="377" width="1.1" height="7" fill="#000" opacity="0.09"/><rect x="1232.3" y="392" width="1.4" height="9" fill="#000" opacity="0.14"/><rect x="1066.1" y="389" width="1.2" height="9" fill="#000" opacity="0.09"/><rect x="200.1" y="370" width="1.5" height="7" fill="#000" opacity="0.17"/><rect x="427.7" y="354" width="1.9" height="9" fill="#000" opacity="0.14"/><rect x="464.7" y="416" width="1.2" height="4" fill="#000" opacity="0.08"/><rect x="199.4" y="370" width="1.4" height="5" fill="#000" opacity="0.20"/><rect x="971.1" y="421" width="1.2" height="9" fill="#000" opacity="0.08"/><rect x="208.2" y="328" width="1.6" height="6" fill="#000" opacity="0.10"/><rect x="1216.4" y="337" width="1.1" height="10" fill="#000" opacity="0.11"/><rect x="553.1" y="367" width="1.6" height="3" fill="#000" opacity="0.16"/><rect x="653.3" y="335" width="1.6" height="5" fill="#000" opacity="0.12"/><rect x="540.4" y="420" width="1.1" height="4" fill="#000" opacity="0.12"/><rect x="1077.4" y="336" width="2.0" height="7" fill="#000" opacity="0.19"/><rect x="791.7" y="377" width="1.1" height="5" fill="#000" opacity="0.11"/><rect x="911.7" y="392" width="1.0" height="3" fill="#000" opacity="0.09"/><rect x="1223.0" y="408" width="2.0" height="8" fill="#000" opacity="0.12"/><rect x="953.3" y="449" width="1.7" height="5" fill="#000" opacity="0.18"/><rect x="756.6" y="338" width="1.9" height="8" fill="#000" opacity="0.08"/><rect x="892.1" y="358" width="1.9" height="8" fill="#000" opacity="0.18"/><rect x="1098.5" y="405" width="1.7" height="6" fill="#000" opacity="0.19"/><rect x="322.6" y="447" width="1.8" height="9" fill="#000" opacity="0.21"/><rect x="648.0" y="445" width="1.6" height="7" fill="#000" opacity="0.20"/><rect x="566.1" y="426" width="1.4" height="9" fill="#000" opacity="0.18"/><rect x="794.7" y="425" width="1.3" height="10" fill="#000" opacity="0.13"/><rect x="861.3" y="351" width="1.5" height="8" fill="#000" opacity="0.21"/><rect x="755.6" y="382" width="1.9" height="7" fill="#000" opacity="0.18"/><rect x="605.1" y="372" width="1.2" height="9" fill="#000" opacity="0.22"/><rect x="328.2" y="366" width="1.2" height="4" fill="#000" opacity="0.12"/><rect x="478.1" y="422" width="1.6" height="10" fill="#000" opacity="0.19"/><rect x="308.6" y="381" width="1.4" height="8" fill="#000" opacity="0.12"/><rect x="275.4" y="389" width="1.1" height="3" fill="#000" opacity="0.17"/><rect x="994.1" y="399" width="1.6" height="4" fill="#000" opacity="0.22"/><rect x="548.0" y="376" width="2.0" height="8" fill="#000" opacity="0.09"/><rect x="1058.2" y="440" width="1.1" height="4" fill="#000" opacity="0.20"/><rect x="221.1" y="353" width="1.4" height="4" fill="#000" opacity="0.10"/><rect x="1249.0" y="382" width="1.1" height="5" fill="#000" opacity="0.19"/><rect x="377.7" y="358" width="1.3" height="7" fill="#000" opacity="0.18"/><rect x="707.2" y="425" width="1.8" height="4" fill="#000" opacity="0.18"/><rect x="765.1" y="434" width="1.3" height="3" fill="#000" opacity="0.21"/><rect x="967.0" y="358" width="1.7" height="7" fill="#000" opacity="0.11"/><rect x="362.0" y="374" width="1.7" height="8" fill="#000" opacity="0.13"/><rect x="1325.9" y="439" width="1.8" height="7" fill="#000" opacity="0.22"/><rect x="1332.2" y="340" width="1.9" height="8" fill="#000" opacity="0.15"/><rect x="513.9" y="403" width="1.7" height="8" fill="#000" opacity="0.17"/><rect x="266.4" y="375" width="1.6" height="5" fill="#000" opacity="0.20"/><rect x="1219.5" y="445" width="1.1" height="7" fill="#000" opacity="0.21"/><rect x="592.6" y="359" width="1.7" height="4" fill="#000" opacity="0.15"/><rect x="361.4" y="347" width="1.8" height="8" fill="#000" opacity="0.18"/><rect x="1257.0" y="346" width="1.9" height="5" fill="#000" opacity="0.13"/><rect x="1313.8" y="330" width="1.7" height="3" fill="#000" opacity="0.15"/><rect x="1290.7" y="396" width="1.7" height="9" fill="#000" opacity="0.10"/><rect x="802.6" y="373" width="1.3" height="9" fill="#000" opacity="0.21"/><rect x="1176.8" y="368" width="1.5" height="9" fill="#000" opacity="0.15"/><rect x="1335.1" y="401" width="1.2" height="6" fill="#000" opacity="0.19"/><rect x="213.8" y="425" width="1.8" height="9" fill="#000" opacity="0.14"/><rect x="216.8" y="417" width="1.1" height="7" fill="#000" opacity="0.08"/><rect x="174.7" y="355" width="1.6" height="8" fill="#000" opacity="0.16"/><rect x="170.3" y="357" width="1.7" height="6" fill="#000" opacity="0.14"/><rect x="1091.0" y="391" width="2.0" height="4" fill="#000" opacity="0.16"/><rect x="558.1" y="332" width="1.7" height="7" fill="#000" opacity="0.17"/><rect x="207.6" y="420" width="2.0" height="6" fill="#000" opacity="0.09"/><rect x="431.6" y="407" width="1.7" height="5" fill="#000" opacity="0.15"/><rect x="663.3" y="436" width="1.8" height="10" fill="#000" opacity="0.20"/><rect x="689.3" y="338" width="1.1" height="4" fill="#000" opacity="0.10"/><rect x="924.4" y="353" width="1.6" height="4" fill="#000" opacity="0.20"/><rect x="216.0" y="412" width="1.8" height="9" fill="#000" opacity="0.16"/><rect x="1053.9" y="379" width="1.1" height="7" fill="#000" opacity="0.15"/><rect x="1114.2" y="428" width="1.7" height="3" fill="#000" opacity="0.21"/><rect x="569.6" y="447" width="1.9" height="8" fill="#000" opacity="0.11"/><rect x="386.1" y="428" width="1.4" height="8" fill="#000" opacity="0.22"/><rect x="609.6" y="445" width="1.5" height="10" fill="#000" opacity="0.15"/><rect x="930.4" y="330" width="1.4" height="7" fill="#000" opacity="0.14"/><rect x="274.1" y="407" width="1.8" height="9" fill="#000" opacity="0.10"/><rect x="897.5" y="403" width="1.8" height="3" fill="#000" opacity="0.12"/><rect x="969.7" y="335" width="1.4" height="8" fill="#000" opacity="0.21"/><rect x="826.3" y="386" width="1.8" height="5" fill="#000" opacity="0.14"/><rect x="245.3" y="331" width="1.2" height="5" fill="#000" opacity="0.15"/><rect x="300.3" y="404" width="1.1" height="5" fill="#000" opacity="0.18"/><rect x="848.4" y="378" width="1.4" height="8" fill="#000" opacity="0.09"/><rect x="906.2" y="410" width="1.3" height="6" fill="#000" opacity="0.12"/><rect x="1322.3" y="386" width="1.1" height="6" fill="#000" opacity="0.14"/><rect x="183.8" y="352" width="1.9" height="7" fill="#000" opacity="0.15"/><rect x="704.8" y="438" width="1.2" height="6" fill="#000" opacity="0.18"/><rect x="833.3" y="439" width="1.8" height="9" fill="#000" opacity="0.20"/><rect x="1185.1" y="353" width="1.5" height="7" fill="#000" opacity="0.21"/><rect x="1098.0" y="331" width="1.6" height="10" fill="#000" opacity="0.12"/><rect x="514.1" y="437" width="1.2" height="4" fill="#000" opacity="0.12"/><rect x="705.2" y="383" width="1.5" height="3" fill="#000" opacity="0.19"/><rect x="641.1" y="369" width="1.1" height="5" fill="#000" opacity="0.18"/><rect x="923.6" y="437" width="1.8" height="9" fill="#000" opacity="0.15"/><rect x="463.2" y="327" width="1.2" height="7" fill="#000" opacity="0.20"/><rect x="315.7" y="418" width="1.5" height="8" fill="#000" opacity="0.17"/><rect x="581.8" y="344" width="1.6" height="6" fill="#000" opacity="0.18"/><rect x="655.5" y="328" width="1.0" height="7" fill="#000" opacity="0.15"/><rect x="846.6" y="362" width="1.5" height="7" fill="#000" opacity="0.10"/><rect x="1257.4" y="384" width="1.8" height="3" fill="#000" opacity="0.16"/><rect x="910.4" y="406" width="1.7" height="10" fill="#000" opacity="0.13"/><rect x="665.3" y="415" width="1.0" height="7" fill="#000" opacity="0.14"/><rect x="1276.9" y="410" width="1.9" height="4" fill="#000" opacity="0.13"/><rect x="536.8" y="351" width="2.0" height="9" fill="#000" opacity="0.12"/><rect x="842.6" y="370" width="1.8" height="8" fill="#000" opacity="0.19"/><rect x="1188.6" y="388" width="1.6" height="5" fill="#000" opacity="0.14"/><rect x="1319.9" y="393" width="1.4" height="5" fill="#000" opacity="0.12"/><rect x="691.3" y="336" width="1.8" height="4" fill="#000" opacity="0.15"/><rect x="1026.3" y="379" width="1.1" height="7" fill="#000" opacity="0.19"/><rect x="340.9" y="383" width="1.8" height="6" fill="#000" opacity="0.09"/><rect x="799.3" y="349" width="1.4" height="8" fill="#000" opacity="0.09"/><rect x="176.6" y="403" width="1.0" height="8" fill="#000" opacity="0.17"/><rect x="785.6" y="413" width="1.7" height="6" fill="#000" opacity="0.12"/><rect x="260.3" y="425" width="1.3" height="10" fill="#000" opacity="0.10"/><rect x="726.5" y="443" width="1.4" height="7" fill="#000" opacity="0.15"/><rect x="523.6" y="361" width="1.5" height="4" fill="#000" opacity="0.09"/><rect x="263.5" y="427" width="1.6" height="7" fill="#000" opacity="0.22"/><rect x="761.5" y="353" width="1.4" height="9" fill="#000" opacity="0.16"/><rect x="355.1" y="385" width="1.8" height="8" fill="#000" opacity="0.12"/><rect x="219.8" y="408" width="1.3" height="8" fill="#000" opacity="0.16"/><rect x="231.2" y="358" width="1.2" height="9" fill="#000" opacity="0.17"/><rect x="1069.6" y="431" width="1.5" height="6" fill="#000" opacity="0.11"/><rect x="584.6" y="349" width="1.7" height="9" fill="#000" opacity="0.11"/><rect x="181.6" y="435" width="1.0" height="5" fill="#000" opacity="0.10"/><rect x="1260.1" y="345" width="1.1" height="4" fill="#000" opacity="0.17"/><rect x="1281.3" y="374" width="1.8" height="9" fill="#000" opacity="0.10"/><rect x="949.8" y="399" width="2.0" height="3" fill="#000" opacity="0.22"/><rect x="246.7" y="353" width="2.0" height="7" fill="#000" opacity="0.15"/><rect x="1262.1" y="429" width="1.9" height="3" fill="#000" opacity="0.12"/><rect x="170.7" y="408" width="1.6" height="49" fill="url(#ss)" opacity="0.59"/><rect x="177" y="320" width="2" height="137" fill="url(#ss)" opacity="0.39"/><rect x="179.5" y="250" width="4" height="207" fill="url(#ss)" opacity="0.42"/><rect x="180.1" y="360" width="4.8" height="97" fill="url(#ss)" opacity="0.98"/><rect x="181.3" y="384" width="2.4" height="73" fill="url(#sc)" opacity="0.59"/><rect x="185" y="390" width="2" height="67" fill="url(#ss)" opacity="0.72"/><rect x="197.5" y="387" width="2" height="70" fill="url(#ss)" opacity="0.72"/><rect x="204" y="400" width="2" height="57" fill="url(#ss)" opacity="0.65"/><rect x="211.7" y="410" width="1.6" height="47" fill="url(#ss)" opacity="0.65"/><rect x="189.2" y="380" width="1.6" height="77" fill="url(#ss)" opacity="0.39"/><rect x="221.2" y="420" width="1.6" height="37" fill="url(#ss)" opacity="0.33"/><rect x="235.2" y="425" width="1.6" height="32" fill="url(#ss)" opacity="0.33"/><rect x="271.7" y="300" width="1.6" height="157" fill="url(#ss)" opacity="0.52"/><rect x="273.4" y="380" width="1.2" height="77" fill="url(#ss)" opacity="0.59"/><rect x="318.4" y="366" width="2.4" height="91" fill="url(#ss)" opacity="0.91"/><rect x="319" y="389" width="1.2" height="68" fill="url(#sc)" opacity="0.52"/><rect x="331.4" y="425" width="1.2" height="32" fill="url(#ss)" opacity="0.33"/><rect x="344.4" y="430" width="1.2" height="27" fill="url(#ss)" opacity="0.33"/><rect x="377.2" y="413" width="1.6" height="44" fill="url(#ss)" opacity="0.59"/><rect x="383.7" y="415" width="1.6" height="42" fill="url(#ss)" opacity="0.59"/><rect x="391.4" y="425" width="1.2" height="32" fill="url(#ss)" opacity="0.39"/><rect x="407.4" y="425" width="1.2" height="32" fill="url(#ss)" opacity="0.33"/><rect x="424.9" y="380" width="1.6" height="77" fill="url(#ss)" opacity="0.52"/><rect x="432.2" y="410" width="1.6" height="47" fill="url(#ss)" opacity="0.52"/><rect x="436.1" y="404" width="2.8" height="53" fill="url(#ss)" opacity="0.91"/><rect x="436.8" y="417" width="1.4" height="40" fill="url(#sc)" opacity="0.52"/><rect x="440.2" y="415" width="1.6" height="42" fill="url(#ss)" opacity="0.65"/><rect x="447.2" y="415" width="1.6" height="42" fill="url(#ss)" opacity="0.59"/><rect x="451.2" y="418" width="1.6" height="39" fill="url(#ss)" opacity="0.59"/><rect x="464" y="381" width="2" height="76" fill="url(#ss)" opacity="0.85"/><rect x="464.5" y="400" width="1" height="57" fill="url(#sc)" opacity="0.46"/><rect x="471.4" y="420" width="1.2" height="37" fill="url(#ss)" opacity="0.39"/><rect x="477.8" y="370" width="2.4" height="87" fill="url(#ss)" opacity="0.98"/><rect x="478.4" y="392" width="1.2" height="65" fill="url(#sc)" opacity="0.59"/><rect x="489" y="389" width="2" height="68" fill="url(#ss)" opacity="0.72"/><rect x="492.2" y="395" width="1.6" height="62" fill="url(#ss)" opacity="0.65"/><rect x="495" y="389" width="2" height="68" fill="url(#ss)" opacity="0.72"/><rect x="502.4" y="420" width="1.2" height="37" fill="url(#ss)" opacity="0.39"/><rect x="511.4" y="425" width="1.2" height="32" fill="url(#ss)" opacity="0.39"/><rect x="524.4" y="425" width="1.2" height="32" fill="url(#ss)" opacity="0.33"/><rect x="536.2" y="380" width="1.6" height="77" fill="url(#ss)" opacity="0.52"/><rect x="539.8" y="366" width="2.4" height="91" fill="url(#ss)" opacity="0.72"/><rect x="544.5" y="372" width="2" height="85" fill="url(#ss)" opacity="0.65"/><rect x="550.4" y="410" width="1.2" height="47" fill="url(#ss)" opacity="0.39"/><rect x="559.4" y="425" width="1.2" height="32" fill="url(#ss)" opacity="0.33"/><rect x="583.4" y="430" width="1.2" height="27" fill="url(#ss)" opacity="0.59"/><rect x="595.4" y="430" width="1.2" height="27" fill="url(#ss)" opacity="0.33"/><rect x="609.4" y="425" width="1.2" height="32" fill="url(#ss)" opacity="0.39"/><rect x="618.2" y="390" width="1.6" height="67" fill="url(#ss)" opacity="0.52"/><rect x="627.4" y="425" width="1.2" height="32" fill="url(#ss)" opacity="0.39"/><rect x="639.4" y="430" width="1.2" height="27" fill="url(#ss)" opacity="0.33"/><rect x="651.4" y="425" width="1.2" height="32" fill="url(#ss)" opacity="0.39"/><rect x="665.1" y="420" width="1.2" height="37" fill="url(#ss)" opacity="0.59"/><rect x="675.4" y="425" width="1.2" height="32" fill="url(#ss)" opacity="0.39"/><rect x="685.2" y="420" width="1.6" height="37" fill="url(#ss)" opacity="0.59"/><rect x="695.2" y="410" width="1.6" height="47" fill="url(#ss)" opacity="0.52"/><rect x="700.8" y="376" width="2.4" height="81" fill="url(#ss)" opacity="0.91"/><rect x="701.4" y="396" width="1.2" height="61" fill="url(#sc)" opacity="0.52"/><rect x="705" y="380" width="2" height="77" fill="url(#ss)" opacity="0.98"/><rect x="705.5" y="399" width="1" height="58" fill="url(#sc)" opacity="0.59"/><rect x="709.3" y="376" width="2.4" height="81" fill="url(#ss)" opacity="0.91"/><rect x="709.9" y="396" width="1.2" height="61" fill="url(#sc)" opacity="0.52"/><rect x="714.4" y="400" width="1.2" height="57" fill="url(#ss)" opacity="0.52"/><rect x="717.2" y="415" width="1.6" height="42" fill="url(#ss)" opacity="0.65"/><rect x="725.4" y="420" width="1.2" height="37" fill="url(#ss)" opacity="0.45"/><rect x="733.2" y="410" width="1.6" height="47" fill="url(#ss)" opacity="0.65"/><rect x="737.2" y="410" width="1.6" height="47" fill="url(#ss)" opacity="0.65"/><rect x="744.4" y="420" width="1.2" height="37" fill="url(#ss)" opacity="0.45"/><rect x="751.2" y="400" width="1.6" height="57" fill="url(#ss)" opacity="0.52"/><rect x="754.8" y="323" width="3.2" height="134" fill="url(#ss)" opacity="1.00"/><rect x="755.6" y="356" width="1.6" height="100" fill="url(#sc)" opacity="0.72"/><rect x="760.2" y="400" width="1.6" height="57" fill="url(#ss)" opacity="0.52"/><rect x="765.2" y="390" width="1.6" height="67" fill="url(#ss)" opacity="0.45"/><rect x="769.2" y="395" width="1.6" height="62" fill="url(#ss)" opacity="0.45"/><rect x="772.6" y="372" width="2" height="85" fill="url(#ss)" opacity="0.98"/><rect x="773.1" y="393" width="1" height="64" fill="url(#sc)" opacity="0.59"/><rect x="778" y="372" width="2" height="85" fill="url(#ss)" opacity="0.91"/><rect x="778.5" y="393" width="1" height="64" fill="url(#sc)" opacity="0.52"/><rect x="783.5" y="372" width="2" height="85" fill="url(#ss)" opacity="0.98"/><rect x="784" y="393" width="1" height="64" fill="url(#sc)" opacity="0.59"/><rect x="788.2" y="400" width="1.6" height="57" fill="url(#ss)" opacity="0.52"/><rect x="793.2" y="405" width="1.6" height="52" fill="url(#ss)" opacity="0.52"/><rect x="800.2" y="405" width="1.6" height="52" fill="url(#ss)" opacity="0.45"/><rect x="807.2" y="400" width="1.6" height="57" fill="url(#ss)" opacity="0.59"/><rect x="811.4" y="415" width="1.2" height="42" fill="url(#ss)" opacity="0.45"/><rect x="815.2" y="400" width="1.6" height="57" fill="url(#ss)" opacity="0.59"/><rect x="821.2" y="405" width="1.6" height="52" fill="url(#ss)" opacity="0.52"/><rect x="826.2" y="400" width="1.6" height="57" fill="url(#ss)" opacity="0.59"/><rect x="829.8" y="378" width="2.4" height="79" fill="url(#ss)" opacity="0.91"/><rect x="830.4" y="398" width="1.2" height="59" fill="url(#sc)" opacity="0.52"/><rect x="833.6" y="370" width="2.8" height="87" fill="url(#ss)" opacity="1.00"/><rect x="834.3" y="392" width="1.4" height="65" fill="url(#sc)" opacity="0.65"/><rect x="837.8" y="378" width="2.4" height="79" fill="url(#ss)" opacity="0.85"/><rect x="838.4" y="398" width="1.2" height="59" fill="url(#sc)" opacity="0.46"/><rect x="842" y="385" width="2" height="72" fill="url(#ss)" opacity="0.72"/><rect x="846" y="361" width="2" height="96" fill="url(#ss)" opacity="0.78"/><rect x="846.5" y="385" width="1" height="72" fill="url(#sc)" opacity="0.39"/><rect x="849.6" y="361" width="2.8" height="96" fill="url(#ss)" opacity="0.98"/><rect x="850.3" y="385" width="1.4" height="72" fill="url(#sc)" opacity="0.59"/><rect x="854" y="370" width="2" height="87" fill="url(#ss)" opacity="0.78"/><rect x="854.5" y="392" width="1" height="65" fill="url(#sc)" opacity="0.39"/><rect x="858.2" y="390" width="1.6" height="67" fill="url(#ss)" opacity="0.65"/><rect x="860.2" y="400" width="1.6" height="57" fill="url(#ss)" opacity="0.65"/><rect x="865.2" y="400" width="1.6" height="57" fill="url(#ss)" opacity="0.65"/><rect x="869.2" y="400" width="1.6" height="57" fill="url(#ss)" opacity="0.59"/><rect x="875.4" y="415" width="1.2" height="42" fill="url(#ss)" opacity="0.39"/><rect x="883.4" y="420" width="1.2" height="37" fill="url(#ss)" opacity="0.39"/><rect x="891.4" y="420" width="1.2" height="37" fill="url(#ss)" opacity="0.39"/><rect x="899.2" y="420" width="1.6" height="37" fill="url(#ss)" opacity="0.59"/><rect x="903.2" y="420" width="1.6" height="37" fill="url(#ss)" opacity="0.59"/><rect x="911.4" y="425" width="1.2" height="32" fill="url(#ss)" opacity="0.39"/><rect x="921.5" y="415" width="2" height="42" fill="url(#ss)" opacity="0.65"/><rect x="930.4" y="420" width="1.2" height="37" fill="url(#ss)" opacity="0.39"/><rect x="939.9" y="395" width="1.6" height="62" fill="url(#ss)" opacity="0.65"/><rect x="949.4" y="425" width="1.2" height="32" fill="url(#ss)" opacity="0.39"/><rect x="958.2" y="420" width="1.6" height="37" fill="url(#ss)" opacity="0.65"/><rect x="967.4" y="425" width="1.2" height="32" fill="url(#ss)" opacity="0.39"/><rect x="974.4" y="425" width="1.2" height="32" fill="url(#ss)" opacity="0.39"/><rect x="980.6" y="410" width="1.6" height="47" fill="url(#ss)" opacity="0.65"/><rect x="985.2" y="400" width="1.6" height="57" fill="url(#ss)" opacity="0.52"/><rect x="991" y="395" width="2" height="62" fill="url(#ss)" opacity="0.59"/><rect x="995.2" y="405" width="1.6" height="52" fill="url(#ss)" opacity="0.52"/><rect x="1003.4" y="420" width="1.2" height="37" fill="url(#ss)" opacity="0.39"/><rect x="1012.4" y="420" width="1.2" height="37" fill="url(#ss)" opacity="0.39"/><rect x="1021.2" y="395" width="1.6" height="62" fill="url(#ss)" opacity="0.72"/><rect x="1027.6" y="385" width="2" height="72" fill="url(#ss)" opacity="0.85"/><rect x="1028.1" y="403" width="1" height="54" fill="url(#sc)" opacity="0.46"/><rect x="1031.2" y="400" width="1.6" height="57" fill="url(#ss)" opacity="0.59"/><rect x="1034.8" y="359" width="2.4" height="98" fill="url(#ss)" opacity="1.00"/><rect x="1035.4" y="384" width="1.2" height="74" fill="url(#sc)" opacity="0.72"/><rect x="1040.2" y="405" width="1.6" height="52" fill="url(#ss)" opacity="0.52"/><rect x="1049.4" y="420" width="1.2" height="37" fill="url(#ss)" opacity="0.39"/><rect x="1059.2" y="415" width="1.6" height="42" fill="url(#ss)" opacity="0.45"/><rect x="1070.6" y="393" width="2.4" height="64" fill="url(#ss)" opacity="0.91"/><rect x="1071.2" y="409" width="1.2" height="48" fill="url(#sc)" opacity="0.52"/><rect x="1079.4" y="420" width="1.2" height="37" fill="url(#ss)" opacity="0.39"/><rect x="1085.4" y="415" width="1.2" height="42" fill="url(#ss)" opacity="0.45"/><rect x="1094.4" y="425" width="1.2" height="32" fill="url(#ss)" opacity="0.39"/><rect x="1103.4" y="425" width="1.2" height="32" fill="url(#ss)" opacity="0.39"/><rect x="1112.2" y="410" width="1.6" height="47" fill="url(#ss)" opacity="0.52"/><rect x="1121.4" y="425" width="1.2" height="32" fill="url(#ss)" opacity="0.39"/><rect x="1132.4" y="425" width="1.2" height="32" fill="url(#ss)" opacity="0.39"/><rect x="1144.4" y="425" width="1.2" height="32" fill="url(#ss)" opacity="0.39"/><rect x="1153.8" y="420" width="1.6" height="37" fill="url(#ss)" opacity="0.45"/><rect x="1161.4" y="425" width="1.2" height="32" fill="url(#ss)" opacity="0.39"/><rect x="1167.9" y="430" width="1.6" height="27" fill="url(#ss)" opacity="0.65"/><rect x="1173.4" y="435" width="1.2" height="22" fill="url(#ss)" opacity="0.78"/><rect x="1173.7" y="440" width="1" height="16" fill="url(#sc)" opacity="0.39"/><rect x="1179.4" y="425" width="1.2" height="32" fill="url(#ss)" opacity="0.39"/><rect x="1185.2" y="415" width="1.6" height="42" fill="url(#ss)" opacity="0.52"/><rect x="1194.4" y="425" width="1.2" height="32" fill="url(#ss)" opacity="0.39"/><rect x="1203.4" y="425" width="1.2" height="32" fill="url(#ss)" opacity="0.39"/><rect x="1212.4" y="420" width="1.2" height="37" fill="url(#ss)" opacity="0.45"/><rect x="1223.1" y="363" width="2.4" height="94" fill="url(#ss)" opacity="1.00"/><rect x="1223.7" y="386" width="1.2" height="70" fill="url(#sc)" opacity="0.72"/><rect x="1227.8" y="410" width="1.6" height="47" fill="url(#ss)" opacity="0.65"/><rect x="1233.2" y="410" width="1.6" height="47" fill="url(#ss)" opacity="0.65"/><rect x="1240.4" y="425" width="1.2" height="32" fill="url(#ss)" opacity="0.39"/><rect x="1247.4" y="425" width="1.2" height="32" fill="url(#ss)" opacity="0.39"/><rect x="1254.2" y="400" width="1.6" height="57" fill="url(#ss)" opacity="0.72"/><rect x="1259.2" y="405" width="1.6" height="52" fill="url(#ss)" opacity="0.65"/><rect x="1264.9" y="400" width="1.6" height="57" fill="url(#ss)" opacity="0.72"/><rect x="1271.4" y="420" width="1.2" height="37" fill="url(#ss)" opacity="0.39"/><rect x="1278" y="389" width="1.6" height="68" fill="url(#ss)" opacity="0.91"/><rect x="1278.4" y="406" width="1" height="51" fill="url(#sc)" opacity="0.52"/><rect x="1282.2" y="352" width="1.6" height="105" fill="url(#ss)" opacity="1.00"/><rect x="1282.6" y="378" width="1" height="79" fill="url(#sc)" opacity="0.72"/><rect x="1288.2" y="405" width="1.6" height="52" fill="url(#ss)" opacity="0.52"/><rect x="1292.8" y="380" width="2.4" height="77" fill="url(#ss)" opacity="0.65"/><rect x="1295.5" y="367" width="3.6" height="90" fill="url(#ss)" opacity="1.00"/><rect x="1296.4" y="390" width="1.8" height="68" fill="url(#sc)" opacity="0.65"/><rect x="1300" y="390" width="2" height="67" fill="url(#ss)" opacity="0.65"/><rect x="1305.4" y="415" width="1.2" height="42" fill="url(#ss)" opacity="0.45"/><rect x="1310.2" y="410" width="1.6" height="47" fill="url(#ss)" opacity="0.59"/><rect x="1315.2" y="410" width="1.6" height="47" fill="url(#ss)" opacity="0.59"/><rect x="1320.2" y="410" width="1.6" height="47" fill="url(#ss)" opacity="0.59"/><rect x="1325.9" y="410" width="1.6" height="47" fill="url(#ss)" opacity="0.59"/><rect x="1333.4" y="420" width="1.2" height="37" fill="url(#ss)" opacity="0.39"/><rect x="1340.4" y="420" width="1.2" height="37" fill="url(#ss)" opacity="0.39"/><rect x="1346.2" y="420" width="1.6" height="37" fill="url(#ss)" opacity="0.45"/><path d="M271.3 318.0 L271.4 322.8 L274.1 326.4 L274.0 332.6 L273.0 339.3 L272.5 346.2 L273.0 349.7 L271.6 355.5 L270.8 359.6 L273.7 364.4 L270.9 368.9 L272.1 373.3 L273.5 377.2 L270.8 383.6 L273.8 389.7 L273.3 396.1 L273.6 400.0 L273.8 404.6" fill="none" stroke="#e0e0e0" stroke-width="1.500" stroke-dasharray="5 1" opacity="0.55"/><path d="M275.5 405.0 L272.2 410.6 L274.0 414.6 L271.9 420.7 L275.1 427.3 L275.5 430.3 L271.9 434.4 L276.3 438.4" fill="none" stroke="#e0e0e0" stroke-width="1.500" stroke-dasharray="5 1" opacity="0.40"/><path d="M620.2 300.0 L619.0 305.1 L620.2 310.4 L620.0 316.2 L619.8 319.7 L619.7 323.3 L619.2 329.8 L619.8 333.4 L619.5 337.6 L620.4 343.4" fill="none" stroke="#e0e0e0" stroke-width="1.500" stroke-dasharray="5 2" opacity="0.50"/><path d="M741.2 350.0 L740.9 356.2 L740.3 359.7 L741.6 364.2 L741.5 369.6 L740.0 376.5 L741.8 380.9 L741.2 387.5 L740.2 391.3 L741.7 397.8 L741.5 403.9" fill="none" stroke="#e0e0e0" stroke-width="1.500" stroke-dasharray="3 1" opacity="0.50"/><path d="M745.9 392.0 L746.3 396.2 L745.5 399.3 L745.9 404.7 L744.1 408.3 L746.2 414.0 L747.8 418.8" fill="none" stroke="#e0e0e0" stroke-width="1.500" stroke-dasharray="3 1" opacity="0.40"/><path d="M850.1 330.0 L849.0 333.9 L850.0 339.1 L848.6 342.8 L848.6 349.2 L850.1 354.4 L848.6 361.1 L848.8 364.7 L849.4 370.5" fill="none" stroke="#e0e0e0" stroke-width="1.500" stroke-dasharray="4 2" opacity="0.50"/><path d="M989.9 305.0 L991.3 312.0 L990.6 315.9 L994.7 319.7 L990.0 323.0 L990.9 326.4 L990.3 332.3 L990.6 337.1 L990.1 340.4 L992.5 345.9 L994.1 351.8 L991.4 358.2 L990.6 363.3 L994.1 369.3 L992.7 373.1 L992.8 377.7 L992.3 383.3 L990.3 390.1 L991.1 393.8 L992.2 397.1 L990.9 403.6 L992.7 407.5 L989.6 413.0 L992.4 419.3" fill="none" stroke="#e0e0e0" stroke-width="1.500" stroke-dasharray="4 2" opacity="0.50"/><path d="M985.3 330.0 L986.1 334.9 L985.3 338.7 L986.9 342.3 L986.9 347.2 L985.5 354.0 L988.1 360.2 L986.8 363.9 L986.5 368.9 L985.6 374.3 L987.1 379.2 L983.8 382.3 L987.9 386.5 L986.4 392.6 L985.5 399.2" fill="none" stroke="#e0e0e0" stroke-width="1.500" stroke-dasharray="3 1" opacity="0.35"/><path d="M1114.2 335.0 L1111.8 339.6 L1114.7 346.3 L1112.5 350.8 L1111.6 355.5 L1111.1 359.8 L1110.7 366.7 L1114.7 370.5 L1110.8 376.6 L1115.4 381.9 L1111.1 388.4 L1114.8 391.7 L1112.7 398.4 L1110.9 404.5 L1113.1 409.1" fill="none" stroke="#e0e0e0" stroke-width="1.500" stroke-dasharray="5 2" opacity="0.50"/><path d="M1109.5 350.0 L1109.8 353.4 L1107.2 356.5 L1106.6 360.3 L1105.8 365.3 L1106.6 372.2 L1107.3 377.9 L1108.3 384.6 L1109.3 389.6 L1107.8 394.8 L1109.4 398.5" fill="none" stroke="#e0e0e0" stroke-width="1.500" stroke-dasharray="4 1" opacity="0.35"/><path d="M1064.7 340.0 L1062.3 344.9 L1058.7 348.5 L1057.7 354.0 L1064.7 361.0 L1062.1 366.6 L1062.6 370.7 L1059.6 377.1" fill="none" stroke="#e0e0e0" stroke-width="1.500" stroke-dasharray="5 2" opacity="0.40"/><path d="M1185.0 330.0 L1184.7 333.2 L1186.5 338.3 L1185.1 344.7 L1185.7 348.4 L1185.0 352.0 L1186.7 357.0 L1184.7 360.4 L1186.1 365.3 L1186.6 369.0 L1187.9 374.3 L1186.5 381.1 L1186.1 384.4 L1185.1 388.5 L1186.8 391.8 L1185.1 397.4" fill="none" stroke="#e0e0e0" stroke-width="1.500" stroke-dasharray="5 2" opacity="0.40"/><path d="M1214.3 335.0 L1215.5 339.0 L1213.4 344.9 L1213.1 348.3 L1212.0 351.4 L1211.5 357.5 L1212.6 361.4 L1211.8 368.2 L1213.6 372.9 L1213.7 376.1 L1212.5 379.4" fill="none" stroke="#e0e0e0" stroke-width="1.500" stroke-dasharray="3 2" opacity="0.50"/><path d="M1298.1 300.0 L1296.1 304.0 L1296.9 308.7 L1296.9 313.5 L1297.6 318.2 L1297.1 322.1 L1296.4 327.2 L1297.6 330.5 L1297.3 334.5 L1295.8 339.8 L1297.1 343.6 L1298.1 347.8 L1297.3 351.8 L1296.7 357.5 L1296.9 361.6 L1296.5 367.4" fill="none" stroke="#e0e0e0" stroke-width="1.500" stroke-dasharray="5 2" opacity="0.50"/><path d="M424.5 385.0 L426.5 391.6 L425.2 397.3" fill="none" stroke="#e0e0e0" stroke-width="1.500" stroke-dasharray="5 2" opacity="0.50"/><path d="M541.7 395.0 L542.1 400.2 L542.0 406.0 L542.3 412.9 L544.2 417.2 L538.6 422.0 L537.9 427.9" fill="none" stroke="#e0e0e0" stroke-width="1.500" stroke-dasharray="4 2" opacity="0.35"/><path d="M1146.1 395.0 L1146.5 402.0 L1150.8 405.2 L1149.6 412.1 L1146.2 416.0 L1148.9 419.6" fill="none" stroke="#e0e0e0" stroke-width="1.500" stroke-dasharray="4 1" opacity="0.40"/><ellipse cx="267" cy="435" rx="24" ry="7.5" fill="url(#sr)" opacity="0.80"/><ellipse cx="267" cy="435" rx="19.5" ry="3.75" fill="url(#sr)" opacity="1.00"/><ellipse cx="808" cy="402" rx="18" ry="10.5" fill="url(#sr)" opacity="0.70"/><ellipse cx="853" cy="400" rx="10.5" ry="21" fill="url(#sr)" opacity="1.00"/><ellipse cx="1048" cy="428" rx="16.5" ry="5.25" fill="url(#sr)" opacity="1.00"/><ellipse cx="835" cy="420" rx="13.5" ry="45" fill="url(#sr)" opacity="0.50"/><ellipse cx="272" cy="360" rx="3.75" ry="60" fill="url(#sr)" opacity="0.70"/><ellipse cx="619.5" cy="330" rx="3" ry="27" fill="url(#sr)" opacity="0.60"/><ellipse cx="619" cy="397" rx="4.5" ry="12" fill="url(#sr)" opacity="0.70"/><ellipse cx="992" cy="362" rx="6" ry="82.5" fill="url(#sr)" opacity="0.60"/><ellipse cx="1113" cy="370" rx="5.25" ry="90" fill="url(#sr)" opacity="0.60"/><ellipse cx="1154.6" cy="400" rx="4.5" ry="7.5" fill="url(#sr)" opacity="0.80"/><ellipse cx="1186" cy="405" rx="6" ry="13.5" fill="url(#sr)" opacity="0.70"/><ellipse cx="1213.4" cy="339" rx="4.5" ry="4.5" fill="url(#sr)" opacity="0.90"/><ellipse cx="1213.4" cy="374" rx="4.5" ry="6" fill="url(#sr)" opacity="0.90"/><ellipse cx="400" cy="343" rx="3" ry="3" fill="url(#sr)" opacity="0.80"/><ellipse cx="400" cy="364" rx="3.75" ry="3.75" fill="url(#sr)" opacity="0.80"/><ellipse cx="425.7" cy="393" rx="3.75" ry="7.5" fill="url(#sr)" opacity="0.80"/><ellipse cx="1059" cy="355" rx="12" ry="12" fill="url(#sr)" opacity="0.40"/><ellipse cx="1297" cy="340" rx="4.5" ry="45" fill="url(#sr)" opacity="0.60"/><ellipse cx="778" cy="390" rx="33" ry="112.5" fill="url(#sr)" opacity="0.32"/><ellipse cx="708" cy="400" rx="21" ry="105" fill="url(#sr)" opacity="0.28"/><ellipse cx="183" cy="400" rx="15" ry="135" fill="url(#sr)" opacity="0.30"/><ellipse cx="845" cy="400" rx="45" ry="90" fill="url(#sr)" opacity="0.28"/><ellipse cx="541" cy="410" rx="18" ry="75" fill="url(#sr)" opacity="0.20"/><ellipse cx="1036" cy="400" rx="15" ry="75" fill="url(#sr)" opacity="0.20"/><ellipse cx="1297" cy="400" rx="21" ry="90" fill="url(#sr)" opacity="0.20"/><ellipse cx="1224" cy="410" rx="15" ry="67.5" fill="url(#sr)" opacity="0.16"/></g><g clip-path="url(#c2)"><rect x="166" y="461" width="1185" height="341" fill="url(#sb)"/><rect x="166" y="461" width="1185" height="341" fill="url(#stp)"/><rect x="169" y="461" width="2" height="187" fill="url(#su)" opacity="0.07"/><rect x="171" y="461" width="2" height="187" fill="url(#su)" opacity="0.08"/><rect x="173" y="461" width="1" height="187" fill="url(#su)" opacity="0.03"/><rect x="189" y="461" width="2" height="187" fill="url(#su)" opacity="0.06"/><rect x="191" y="461" width="1" height="187" fill="url(#su)" opacity="0.04"/><rect x="192" y="461" width="2" height="187" fill="url(#su)" opacity="0.07"/><rect x="194" y="461" width="2" height="187" fill="url(#su)" opacity="0.04"/><rect x="196" y="461" width="3" height="187" fill="url(#su)" opacity="0.08"/><rect x="202" y="461" width="3" height="187" fill="url(#su)" opacity="0.10"/><rect x="207" y="461" width="1" height="187" fill="url(#su)" opacity="0.07"/><rect x="208" y="461" width="2" height="187" fill="url(#su)" opacity="0.04"/><rect x="211" y="461" width="1" height="187" fill="url(#su)" opacity="0.13"/><rect x="216" y="461" width="2" height="187" fill="url(#su)" opacity="0.08"/><rect x="221" y="461" width="1" height="187" fill="url(#su)" opacity="0.04"/><rect x="224" y="461" width="1" height="187" fill="url(#su)" opacity="0.03"/><rect x="231" y="461" width="2" height="187" fill="url(#su)" opacity="0.09"/><rect x="235" y="461" width="2" height="187" fill="url(#su)" opacity="0.04"/><rect x="238" y="461" width="2" height="187" fill="url(#su)" opacity="0.12"/><rect x="240" y="461" width="1" height="187" fill="url(#su)" opacity="0.12"/><rect x="244" y="461" width="2" height="187" fill="url(#su)" opacity="0.15"/><rect x="246" y="461" width="2" height="187" fill="url(#su)" opacity="0.10"/><rect x="249" y="461" width="1" height="187" fill="url(#su)" opacity="0.03"/><rect x="252" y="461" width="2" height="187" fill="url(#su)" opacity="0.08"/><rect x="254" y="461" width="2" height="187" fill="url(#su)" opacity="0.07"/><rect x="260" y="461" width="3" height="187" fill="url(#su)" opacity="0.10"/><rect x="270" y="461" width="1" height="187" fill="url(#su)" opacity="0.03"/><rect x="274" y="461" width="1" height="187" fill="url(#su)" opacity="0.13"/><rect x="276" y="461" width="1" height="187" fill="url(#su)" opacity="0.13"/><rect x="277" y="461" width="1" height="187" fill="url(#su)" opacity="0.07"/><rect x="280" y="461" width="2" height="187" fill="url(#su)" opacity="0.04"/><rect x="282" y="461" width="3" height="187" fill="url(#su)" opacity="0.04"/><rect x="286" y="461" width="1" height="187" fill="url(#su)" opacity="0.03"/><rect x="290" y="461" width="1" height="187" fill="url(#su)" opacity="0.13"/><rect x="305" y="461" width="2" height="187" fill="url(#su)" opacity="0.04"/><rect x="307" y="461" width="1" height="187" fill="url(#su)" opacity="0.07"/><rect x="319" y="461" width="1" height="187" fill="url(#su)" opacity="0.06"/><rect x="326" y="461" width="3" height="187" fill="url(#su)" opacity="0.07"/><rect x="331" y="461" width="1" height="187" fill="url(#su)" opacity="0.08"/><rect x="340" y="461" width="2" height="187" fill="url(#su)" opacity="0.07"/><rect x="344" y="461" width="2" height="187" fill="url(#su)" opacity="0.07"/><rect x="347" y="461" width="1" height="187" fill="url(#su)" opacity="0.09"/><rect x="354" y="461" width="1" height="187" fill="url(#su)" opacity="0.07"/><rect x="363" y="461" width="1" height="187" fill="url(#su)" opacity="0.08"/><rect x="364" y="461" width="3" height="187" fill="url(#su)" opacity="0.11"/><rect x="367" y="461" width="1" height="187" fill="url(#su)" opacity="0.07"/><rect x="369" y="461" width="1" height="187" fill="url(#su)" opacity="0.06"/><rect x="370" y="461" width="3" height="187" fill="url(#su)" opacity="0.15"/><rect x="373" y="461" width="1" height="187" fill="url(#su)" opacity="0.04"/><rect x="374" y="461" width="2" height="187" fill="url(#su)" opacity="0.06"/><rect x="382" y="461" width="2" height="187" fill="url(#su)" opacity="0.11"/><rect x="385" y="461" width="2" height="187" fill="url(#su)" opacity="0.09"/><rect x="389" y="461" width="1" height="187" fill="url(#su)" opacity="0.11"/><rect x="390" y="461" width="3" height="187" fill="url(#su)" opacity="0.05"/><rect x="393" y="461" width="1" height="187" fill="url(#su)" opacity="0.03"/><rect x="394" y="461" width="3" height="187" fill="url(#su)" opacity="0.03"/><rect x="404" y="461" width="2" height="187" fill="url(#su)" opacity="0.09"/><rect x="409" y="461" width="1" height="187" fill="url(#su)" opacity="0.04"/><rect x="413" y="461" width="2" height="187" fill="url(#su)" opacity="0.15"/><rect x="420" y="461" width="1" height="187" fill="url(#su)" opacity="0.13"/><rect x="424" y="461" width="2" height="187" fill="url(#su)" opacity="0.05"/><rect x="429" y="461" width="1" height="187" fill="url(#su)" opacity="0.07"/><rect x="432" y="461" width="1" height="187" fill="url(#su)" opacity="0.08"/><rect x="437" y="461" width="3" height="187" fill="url(#su)" opacity="0.04"/><rect x="444" y="461" width="1" height="187" fill="url(#su)" opacity="0.09"/><rect x="445" y="461" width="1" height="187" fill="url(#su)" opacity="0.03"/><rect x="447" y="461" width="2" height="187" fill="url(#su)" opacity="0.04"/><rect x="452" y="461" width="2" height="187" fill="url(#su)" opacity="0.10"/><rect x="454" y="461" width="2" height="187" fill="url(#su)" opacity="0.06"/><rect x="469" y="461" width="1" height="187" fill="url(#su)" opacity="0.07"/><rect x="481" y="461" width="1" height="187" fill="url(#su)" opacity="0.05"/><rect x="484" y="461" width="1" height="187" fill="url(#su)" opacity="0.03"/><rect x="487" y="461" width="2" height="187" fill="url(#su)" opacity="0.06"/><rect x="490" y="461" width="2" height="187" fill="url(#su)" opacity="0.03"/><rect x="493" y="461" width="1" height="187" fill="url(#su)" opacity="0.03"/><rect x="499" y="461" width="1" height="187" fill="url(#su)" opacity="0.09"/><rect x="500" y="461" width="2" height="187" fill="url(#su)" opacity="0.13"/><rect x="503" y="461" width="1" height="187" fill="url(#su)" opacity="0.06"/><rect x="508" y="461" width="2" height="187" fill="url(#su)" opacity="0.03"/><rect x="516" y="461" width="1" height="187" fill="url(#su)" opacity="0.04"/><rect x="520" y="461" width="1" height="187" fill="url(#su)" opacity="0.05"/><rect x="523" y="461" width="2" height="187" fill="url(#su)" opacity="0.09"/><rect x="532" y="461" width="1" height="187" fill="url(#su)" opacity="0.05"/><rect x="535" y="461" width="2" height="187" fill="url(#su)" opacity="0.04"/><rect x="553" y="461" width="1" height="187" fill="url(#su)" opacity="0.04"/><rect x="555" y="461" width="1" height="187" fill="url(#su)" opacity="0.04"/><rect x="559" y="461" width="1" height="187" fill="url(#su)" opacity="0.03"/><rect x="563" y="461" width="1" height="187" fill="url(#su)" opacity="0.09"/><rect x="564" y="461" width="1" height="187" fill="url(#su)" opacity="0.09"/><rect x="570" y="461" width="1" height="187" fill="url(#su)" opacity="0.09"/><rect x="571" y="461" width="1" height="187" fill="url(#su)" opacity="0.03"/><rect x="574" y="461" width="2" height="187" fill="url(#su)" opacity="0.07"/><rect x="576" y="461" width="1" height="187" fill="url(#su)" opacity="0.03"/><rect x="578" y="461" width="2" height="187" fill="url(#su)" opacity="0.14"/><rect x="583" y="461" width="2" height="187" fill="url(#su)" opacity="0.06"/><rect x="590" y="461" width="1" height="187" fill="url(#su)" opacity="0.05"/><rect x="596" y="461" width="1" height="187" fill="url(#su)" opacity="0.11"/><rect x="607" y="461" width="2" height="187" fill="url(#su)" opacity="0.07"/><rect x="610" y="461" width="1" height="187" fill="url(#su)" opacity="0.03"/><rect x="619" y="461" width="3" height="187" fill="url(#su)" opacity="0.05"/><rect x="622" y="461" width="2" height="187" fill="url(#su)" opacity="0.03"/><rect x="625" y="461" width="1" height="187" fill="url(#su)" opacity="0.03"/><rect x="630" y="461" width="1" height="187" fill="url(#su)" opacity="0.14"/><rect x="632" y="461" width="1" height="187" fill="url(#su)" opacity="0.05"/><rect x="633" y="461" width="2" height="187" fill="url(#su)" opacity="0.06"/><rect x="636" y="461" width="3" height="187" fill="url(#su)" opacity="0.03"/><rect x="640" y="461" width="2" height="187" fill="url(#su)" opacity="0.08"/><rect x="645" y="461" width="1" height="187" fill="url(#su)" opacity="0.05"/><rect x="647" y="461" width="1" height="187" fill="url(#su)" opacity="0.04"/><rect x="649" y="461" width="2" height="187" fill="url(#su)" opacity="0.05"/><rect x="655" y="461" width="3" height="187" fill="url(#su)" opacity="0.08"/><rect x="664" y="461" width="2" height="187" fill="url(#su)" opacity="0.03"/><rect x="672" y="461" width="1" height="187" fill="url(#su)" opacity="0.07"/><rect x="674" y="461" width="2" height="187" fill="url(#su)" opacity="0.08"/><rect x="682" y="461" width="1" height="187" fill="url(#su)" opacity="0.10"/><rect x="687" y="461" width="3" height="187" fill="url(#su)" opacity="0.13"/><rect x="693" y="461" width="2" height="187" fill="url(#su)" opacity="0.15"/><rect x="700" y="461" width="1" height="187" fill="url(#su)" opacity="0.03"/><rect x="704" y="461" width="2" height="187" fill="url(#su)" opacity="0.14"/><rect x="708" y="461" width="2" height="187" fill="url(#su)" opacity="0.03"/><rect x="710" y="461" width="1" height="187" fill="url(#su)" opacity="0.03"/><rect x="714" y="461" width="2" height="187" fill="url(#su)" opacity="0.07"/><rect x="724" y="461" width="1" height="187" fill="url(#su)" opacity="0.03"/><rect x="729" y="461" width="1" height="187" fill="url(#su)" opacity="0.09"/><rect x="739" y="461" width="1" height="187" fill="url(#su)" opacity="0.08"/><rect x="740" y="461" width="3" height="187" fill="url(#su)" opacity="0.03"/><rect x="744" y="461" width="1" height="187" fill="url(#su)" opacity="0.08"/><rect x="745" y="461" width="1" height="187" fill="url(#su)" opacity="0.03"/><rect x="746" y="461" width="3" height="187" fill="url(#su)" opacity="0.04"/><rect x="750" y="461" width="2" height="187" fill="url(#su)" opacity="0.04"/><rect x="755" y="461" width="1" height="187" fill="url(#su)" opacity="0.11"/><rect x="756" y="461" width="2" height="187" fill="url(#su)" opacity="0.04"/><rect x="758" y="461" width="1" height="187" fill="url(#su)" opacity="0.11"/><rect x="761" y="461" width="1" height="187" fill="url(#su)" opacity="0.10"/><rect x="766" y="461" width="1" height="187" fill="url(#su)" opacity="0.04"/><rect x="769" y="461" width="1" height="187" fill="url(#su)" opacity="0.07"/><rect x="773" y="461" width="2" height="187" fill="url(#su)" opacity="0.10"/><rect x="775" y="461" width="1" height="187" fill="url(#su)" opacity="0.08"/><rect x="776" y="461" width="3" height="187" fill="url(#su)" opacity="0.09"/><rect x="782" y="461" width="1" height="187" fill="url(#su)" opacity="0.03"/><rect x="788" y="461" width="1" height="187" fill="url(#su)" opacity="0.05"/><rect x="798" y="461" width="2" height="187" fill="url(#su)" opacity="0.05"/><rect x="803" y="461" width="2" height="187" fill="url(#su)" opacity="0.05"/><rect x="806" y="461" width="1" height="187" fill="url(#su)" opacity="0.05"/><rect x="810" y="461" width="2" height="187" fill="url(#su)" opacity="0.11"/><rect x="814" y="461" width="1" height="187" fill="url(#su)" opacity="0.10"/><rect x="816" y="461" width="1" height="187" fill="url(#su)" opacity="0.03"/><rect x="817" y="461" width="2" height="187" fill="url(#su)" opacity="0.03"/><rect x="822" y="461" width="2" height="187" fill="url(#su)" opacity="0.03"/><rect x="833" y="461" width="2" height="187" fill="url(#su)" opacity="0.04"/><rect x="839" y="461" width="1" height="187" fill="url(#su)" opacity="0.14"/><rect x="843" y="461" width="1" height="187" fill="url(#su)" opacity="0.06"/><rect x="858" y="461" width="3" height="187" fill="url(#su)" opacity="0.05"/><rect x="861" y="461" width="1" height="187" fill="url(#su)" opacity="0.05"/><rect x="869" y="461" width="1" height="187" fill="url(#su)" opacity="0.06"/><rect x="871" y="461" width="1" height="187" fill="url(#su)" opacity="0.09"/><rect x="873" y="461" width="3" height="187" fill="url(#su)" opacity="0.13"/><rect x="876" y="461" width="2" height="187" fill="url(#su)" opacity="0.06"/><rect x="878" y="461" width="1" height="187" fill="url(#su)" opacity="0.03"/><rect x="879" y="461" width="2" height="187" fill="url(#su)" opacity="0.09"/><rect x="883" y="461" width="2" height="187" fill="url(#su)" opacity="0.03"/><rect x="886" y="461" width="2" height="187" fill="url(#su)" opacity="0.10"/><rect x="889" y="461" width="3" height="187" fill="url(#su)" opacity="0.11"/><rect x="893" y="461" width="1" height="187" fill="url(#su)" opacity="0.05"/><rect x="895" y="461" width="3" height="187" fill="url(#su)" opacity="0.14"/><rect x="899" y="461" width="1" height="187" fill="url(#su)" opacity="0.04"/><rect x="914" y="461" width="1" height="187" fill="url(#su)" opacity="0.10"/><rect x="921" y="461" width="1" height="187" fill="url(#su)" opacity="0.03"/><rect x="924" y="461" width="1" height="187" fill="url(#su)" opacity="0.11"/><rect x="925" y="461" width="1" height="187" fill="url(#su)" opacity="0.04"/><rect x="929" y="461" width="2" height="187" fill="url(#su)" opacity="0.06"/><rect x="941" y="461" width="2" height="187" fill="url(#su)" opacity="0.07"/><rect x="945" y="461" width="2" height="187" fill="url(#su)" opacity="0.11"/><rect x="948" y="461" width="1" height="187" fill="url(#su)" opacity="0.03"/><rect x="952" y="461" width="1" height="187" fill="url(#su)" opacity="0.03"/><rect x="965" y="461" width="1" height="187" fill="url(#su)" opacity="0.03"/><rect x="966" y="461" width="3" height="187" fill="url(#su)" opacity="0.08"/><rect x="970" y="461" width="3" height="187" fill="url(#su)" opacity="0.06"/><rect x="977" y="461" width="3" height="187" fill="url(#su)" opacity="0.03"/><rect x="981" y="461" width="3" height="187" fill="url(#su)" opacity="0.04"/><rect x="985" y="461" width="2" height="187" fill="url(#su)" opacity="0.08"/><rect x="988" y="461" width="2" height="187" fill="url(#su)" opacity="0.03"/><rect x="994" y="461" width="1" height="187" fill="url(#su)" opacity="0.05"/><rect x="998" y="461" width="1" height="187" fill="url(#su)" opacity="0.15"/><rect x="1005" y="461" width="3" height="187" fill="url(#su)" opacity="0.03"/><rect x="1011" y="461" width="2" height="187" fill="url(#su)" opacity="0.13"/><rect x="1018" y="461" width="3" height="187" fill="url(#su)" opacity="0.10"/><rect x="1026" y="461" width="1" height="187" fill="url(#su)" opacity="0.03"/><rect x="1028" y="461" width="3" height="187" fill="url(#su)" opacity="0.07"/><rect x="1031" y="461" width="2" height="187" fill="url(#su)" opacity="0.04"/><rect x="1040" y="461" width="1" height="187" fill="url(#su)" opacity="0.06"/><rect x="1053" y="461" width="3" height="187" fill="url(#su)" opacity="0.03"/><rect x="1061" y="461" width="1" height="187" fill="url(#su)" opacity="0.13"/><rect x="1063" y="461" width="1" height="187" fill="url(#su)" opacity="0.03"/><rect x="1067" y="461" width="1" height="187" fill="url(#su)" opacity="0.07"/><rect x="1070" y="461" width="2" height="187" fill="url(#su)" opacity="0.13"/><rect x="1076" y="461" width="2" height="187" fill="url(#su)" opacity="0.13"/><rect x="1082" y="461" width="1" height="187" fill="url(#su)" opacity="0.07"/><rect x="1083" y="461" width="2" height="187" fill="url(#su)" opacity="0.03"/><rect x="1088" y="461" width="1" height="187" fill="url(#su)" opacity="0.08"/><rect x="1097" y="461" width="1" height="187" fill="url(#su)" opacity="0.05"/><rect x="1098" y="461" width="1" height="187" fill="url(#su)" opacity="0.03"/><rect x="1100" y="461" width="1" height="187" fill="url(#su)" opacity="0.03"/><rect x="1116" y="461" width="1" height="187" fill="url(#su)" opacity="0.08"/><rect x="1126" y="461" width="3" height="187" fill="url(#su)" opacity="0.05"/><rect x="1134" y="461" width="1" height="187" fill="url(#su)" opacity="0.05"/><rect x="1141" y="461" width="3" height="187" fill="url(#su)" opacity="0.04"/><rect x="1154" y="461" width="1" height="187" fill="url(#su)" opacity="0.08"/><rect x="1159" y="461" width="3" height="187" fill="url(#su)" opacity="0.07"/><rect x="1164" y="461" width="1" height="187" fill="url(#su)" opacity="0.10"/><rect x="1173" y="461" width="1" height="187" fill="url(#su)" opacity="0.09"/><rect x="1174" y="461" width="1" height="187" fill="url(#su)" opacity="0.05"/><rect x="1176" y="461" width="2" height="187" fill="url(#su)" opacity="0.05"/><rect x="1180" y="461" width="1" height="187" fill="url(#su)" opacity="0.03"/><rect x="1182" y="461" width="1" height="187" fill="url(#su)" opacity="0.03"/><rect x="1184" y="461" width="1" height="187" fill="url(#su)" opacity="0.12"/><rect x="1188" y="461" width="1" height="187" fill="url(#su)" opacity="0.11"/><rect x="1190" y="461" width="2" height="187" fill="url(#su)" opacity="0.08"/><rect x="1195" y="461" width="2" height="187" fill="url(#su)" opacity="0.08"/><rect x="1207" y="461" width="2" height="187" fill="url(#su)" opacity="0.04"/><rect x="1211" y="461" width="1" height="187" fill="url(#su)" opacity="0.04"/><rect x="1217" y="461" width="3" height="187" fill="url(#su)" opacity="0.03"/><rect x="1223" y="461" width="3" height="187" fill="url(#su)" opacity="0.03"/><rect x="1229" y="461" width="1" height="187" fill="url(#su)" opacity="0.03"/><rect x="1232" y="461" width="1" height="187" fill="url(#su)" opacity="0.03"/><rect x="1235" y="461" width="2" height="187" fill="url(#su)" opacity="0.04"/><rect x="1239" y="461" width="1" height="187" fill="url(#su)" opacity="0.15"/><rect x="1240" y="461" width="1" height="187" fill="url(#su)" opacity="0.09"/><rect x="1245" y="461" width="2" height="187" fill="url(#su)" opacity="0.13"/><rect x="1247" y="461" width="1" height="187" fill="url(#su)" opacity="0.10"/><rect x="1250" y="461" width="2" height="187" fill="url(#su)" opacity="0.11"/><rect x="1261" y="461" width="2" height="187" fill="url(#su)" opacity="0.10"/><rect x="1264" y="461" width="3" height="187" fill="url(#su)" opacity="0.10"/><rect x="1270" y="461" width="3" height="187" fill="url(#su)" opacity="0.06"/><rect x="1276" y="461" width="1" height="187" fill="url(#su)" opacity="0.14"/><rect x="1277" y="461" width="2" height="187" fill="url(#su)" opacity="0.12"/><rect x="1289" y="461" width="1" height="187" fill="url(#su)" opacity="0.03"/><rect x="1299" y="461" width="1" height="187" fill="url(#su)" opacity="0.09"/><rect x="1302" y="461" width="3" height="187" fill="url(#su)" opacity="0.04"/><rect x="1307" y="461" width="2" height="187" fill="url(#su)" opacity="0.11"/><rect x="1309" y="461" width="2" height="187" fill="url(#su)" opacity="0.03"/><rect x="1318" y="461" width="1" height="187" fill="url(#su)" opacity="0.06"/><rect x="1323" y="461" width="1" height="187" fill="url(#su)" opacity="0.10"/><rect x="1330" y="461" width="1" height="187" fill="url(#su)" opacity="0.06"/><rect x="1342" y="461" width="2" height="187" fill="url(#su)" opacity="0.04"/><rect x="1346" y="461" width="1" height="187" fill="url(#su)" opacity="0.03"/><rect x="1347" y="461" width="1" height="187" fill="url(#su)" opacity="0.14"/><rect x="1350" y="461" width="1" height="187" fill="url(#su)" opacity="0.05"/><rect x="1345" y="461" width="4" height="341" fill="#000" opacity="0.05"/><rect x="1247" y="461" width="9" height="341" fill="#000" opacity="0.07"/><rect x="376" y="461" width="6" height="341" fill="#000" opacity="0.07"/><rect x="419" y="461" width="6" height="341" fill="#000" opacity="0.06"/><rect x="421" y="461" width="4" height="341" fill="#000" opacity="0.03"/><rect x="1106" y="461" width="3" height="341" fill="#000" opacity="0.04"/><rect x="640" y="461" width="9" height="341" fill="#000" opacity="0.04"/><rect x="532" y="461" width="6" height="341" fill="#000" opacity="0.04"/><rect x="909" y="461" width="3" height="341" fill="#000" opacity="0.06"/><rect x="408" y="461" width="6" height="341" fill="#000" opacity="0.04"/><rect x="222" y="461" width="4" height="341" fill="#000" opacity="0.04"/><rect x="491" y="461" width="2" height="341" fill="#000" opacity="0.05"/><rect x="1045" y="461" width="9" height="341" fill="#000" opacity="0.04"/><rect x="1260" y="461" width="3" height="341" fill="#000" opacity="0.03"/><rect x="594" y="461" width="3" height="341" fill="#000" opacity="0.06"/><rect x="1087" y="461" width="3" height="341" fill="#000" opacity="0.06"/><rect x="1023" y="461" width="2" height="341" fill="#000" opacity="0.02"/><rect x="548" y="461" width="6" height="341" fill="#000" opacity="0.04"/><rect x="1179" y="461" width="6" height="341" fill="#000" opacity="0.04"/><rect x="1079" y="461" width="9" height="341" fill="#000" opacity="0.05"/><rect x="524" y="461" width="9" height="341" fill="#000" opacity="0.03"/><rect x="214" y="461" width="3" height="341" fill="#000" opacity="0.05"/><rect x="317" y="461" width="3" height="341" fill="#000" opacity="0.04"/><rect x="669" y="461" width="9" height="341" fill="#000" opacity="0.05"/><rect x="779" y="461" width="9" height="341" fill="#000" opacity="0.03"/><rect x="1026" y="461" width="6" height="341" fill="#000" opacity="0.03"/><rect x="409" y="461" width="4" height="341" fill="#000" opacity="0.05"/><rect x="699" y="461" width="3" height="341" fill="#000" opacity="0.04"/><rect x="1192" y="461" width="3" height="341" fill="#000" opacity="0.03"/><rect x="605" y="461" width="9" height="341" fill="#000" opacity="0.03"/><rect x="214" y="461" width="2" height="341" fill="#000" opacity="0.06"/><rect x="738" y="461" width="2" height="341" fill="#000" opacity="0.06"/><rect x="1322" y="461" width="4" height="341" fill="#000" opacity="0.05"/><rect x="245" y="461" width="3" height="341" fill="#000" opacity="0.05"/><rect x="585" y="461" width="2" height="341" fill="#000" opacity="0.07"/><rect x="1195" y="461" width="3" height="341" fill="#000" opacity="0.06"/><rect x="474" y="461" width="6" height="341" fill="#000" opacity="0.03"/><rect x="750" y="461" width="6" height="341" fill="#000" opacity="0.04"/><rect x="555" y="461" width="6" height="341" fill="#000" opacity="0.06"/><rect x="429" y="461" width="6" height="341" fill="#000" opacity="0.03"/><rect x="1076" y="461" width="4" height="341" fill="#000" opacity="0.05"/><rect x="450" y="461" width="2" height="341" fill="#000" opacity="0.06"/><rect x="1241" y="461" width="3" height="341" fill="#000" opacity="0.04"/><rect x="471" y="461" width="9" height="341" fill="#000" opacity="0.04"/><rect x="1250" y="461" width="6" height="341" fill="#000" opacity="0.03"/><rect x="1244" y="461" width="6" height="341" fill="#000" opacity="0.03"/><rect x="613" y="461" width="9" height="341" fill="#000" opacity="0.03"/><rect x="1018" y="461" width="4" height="341" fill="#000" opacity="0.02"/><rect x="208" y="461" width="4" height="341" fill="#000" opacity="0.06"/><rect x="836" y="461" width="4" height="341" fill="#000" opacity="0.06"/><rect x="1217" y="461" width="6" height="341" fill="#000" opacity="0.04"/><rect x="571" y="461" width="4" height="341" fill="#000" opacity="0.02"/><rect x="1004" y="461" width="3" height="341" fill="#000" opacity="0.06"/><rect x="909" y="461" width="9" height="341" fill="#000" opacity="0.05"/><rect x="892" y="461" width="2" height="341" fill="#000" opacity="0.03"/><rect x="1149" y="461" width="6" height="341" fill="#000" opacity="0.04"/><rect x="1244" y="461" width="2" height="341" fill="#000" opacity="0.06"/><rect x="976" y="461" width="4" height="341" fill="#000" opacity="0.04"/><rect x="593" y="461" width="2" height="341" fill="#000" opacity="0.03"/><rect x="394" y="461" width="3" height="341" fill="#000" opacity="0.03"/><ellipse cx="215" cy="745" rx="72" ry="80" fill="url(#sr)" opacity="0.25"/><ellipse cx="930" cy="730" rx="64" ry="80" fill="url(#sr)" opacity="0.25"/><ellipse cx="1150" cy="735" rx="80" ry="64" fill="url(#sr)" opacity="0.21"/><ellipse cx="1240" cy="735" rx="64" ry="64" fill="url(#sr)" opacity="0.21"/><ellipse cx="870" cy="735" rx="64" ry="64" fill="url(#sr)" opacity="0.21"/><ellipse cx="350" cy="740" rx="80" ry="56" fill="url(#sr)" opacity="0.17"/><ellipse cx="600" cy="745" rx="64" ry="48" fill="url(#sr)" opacity="0.13"/><ellipse cx="780" cy="715" rx="144" ry="96" fill="url(#sr)" opacity="0.34"/><ellipse cx="700" cy="725" rx="64" ry="96" fill="url(#sr)" opacity="0.34"/><ellipse cx="185" cy="735" rx="40" ry="96" fill="url(#sr)" opacity="0.42"/><ellipse cx="985" cy="725" rx="80" ry="80" fill="url(#sr)" opacity="0.29"/><ellipse cx="1040" cy="730" rx="48" ry="72" fill="url(#sr)" opacity="0.25"/><ellipse cx="1115" cy="725" rx="48" ry="80" fill="url(#sr)" opacity="0.25"/><ellipse cx="1190" cy="725" rx="80" ry="72" fill="url(#sr)" opacity="0.25"/><ellipse cx="1290" cy="730" rx="64" ry="80" fill="url(#sr)" opacity="0.29"/><ellipse cx="270" cy="735" rx="48" ry="64" fill="url(#sr)" opacity="0.21"/><ellipse cx="450" cy="740" rx="96" ry="56" fill="url(#sr)" opacity="0.21"/><ellipse cx="540" cy="740" rx="48" ry="64" fill="url(#sr)" opacity="0.21"/><ellipse cx="620" cy="730" rx="40" ry="72" fill="url(#sr)" opacity="0.21"/><ellipse cx="675" cy="580" rx="32" ry="64" fill="url(#sr)" opacity="0.34"/><ellipse cx="714" cy="580" rx="25.6" ry="80" fill="url(#sr)" opacity="0.38"/><ellipse cx="780" cy="585" rx="44.8" ry="96" fill="url(#sr)" opacity="0.36"/><ellipse cx="850" cy="580" rx="40" ry="64" fill="url(#sr)" opacity="0.25"/><ellipse cx="185" cy="605" rx="19.2" ry="112" fill="url(#sr)" opacity="0.25"/><ellipse cx="230" cy="615" rx="48" ry="64" fill="url(#sr)" opacity="0.13"/><ellipse cx="1297" cy="575" rx="12.8" ry="96" fill="url(#sr)" opacity="0.29"/><ellipse cx="1060" cy="585" rx="12.8" ry="96" fill="url(#sr)" opacity="0.17"/><ellipse cx="500" cy="515" rx="96" ry="28.8" fill="url(#sr)" opacity="0.11"/><ellipse cx="330" cy="525" rx="144" ry="32" fill="url(#sr)" opacity="0.13"/><ellipse cx="620" cy="525" rx="96" ry="32" fill="url(#sr)" opacity="0.11"/><ellipse cx="900" cy="530" rx="320" ry="22.4" fill="url(#sr)" opacity="0.08"/><ellipse cx="1150" cy="535" rx="240" ry="19.2" fill="url(#sr)" opacity="0.13"/><rect x="178" y="461" width="6" height="341" fill="url(#sl)" opacity="0.10"/><rect x="182" y="461" width="2" height="341" fill="url(#sl)" opacity="0.15"/><rect x="271.75" y="461" width="1.5" height="341" fill="url(#sl)" opacity="0.14"/><rect x="424.95" y="461" width="1.5" height="341" fill="url(#sl)" opacity="0.14"/><rect x="493.25" y="461" width="1.5" height="341" fill="url(#sl)" opacity="0.12"/><rect x="618.85" y="461" width="1.5" height="341" fill="url(#sl)" opacity="0.14"/><rect x="701" y="461" width="2" height="341" fill="url(#sl)" opacity="0.07"/><rect x="706.5" y="461" width="3" height="341" fill="url(#sl)" opacity="0.08"/><rect x="755.4" y="461" width="2" height="341" fill="url(#sl)" opacity="0.15"/><rect x="769" y="461" width="12" height="341" fill="url(#sl)" opacity="0.07"/><rect x="783" y="461" width="14" height="341" fill="url(#sl)" opacity="0.07"/><rect x="848.85" y="461" width="1.5" height="341" fill="url(#sl)" opacity="0.15"/><rect x="991.25" y="461" width="1.5" height="341" fill="url(#sl)" opacity="0.12"/><rect x="1035.25" y="461" width="1.5" height="341" fill="url(#sl)" opacity="0.14"/><rect x="1059.25" y="461" width="1.5" height="341" fill="url(#sl)" opacity="0.09"/><rect x="1085.25" y="461" width="1.5" height="341" fill="url(#sl)" opacity="0.09"/><rect x="1110" y="461" width="2" height="341" fill="url(#sl)" opacity="0.09"/><rect x="1113" y="461" width="2" height="341" fill="url(#sl)" opacity="0.12"/><rect x="1167.95" y="461" width="1.5" height="341" fill="url(#sl)" opacity="0.10"/><rect x="1183.25" y="461" width="1.5" height="341" fill="url(#sl)" opacity="0.10"/><rect x="1187.25" y="461" width="1.5" height="341" fill="url(#sl)" opacity="0.10"/><rect x="1223.25" y="461" width="1.5" height="341" fill="url(#sl)" opacity="0.10"/><rect x="1282.25" y="461" width="1.5" height="341" fill="url(#sl)" opacity="0.08"/><rect x="1295.5" y="461" width="3" height="341" fill="url(#sl)" opacity="0.15"/><rect x="1317.25" y="461" width="1.5" height="341" fill="url(#sl)" opacity="0.07"/><rect x="214.25" y="461" width="1.5" height="341" fill="url(#sl)" opacity="0.06"/><rect x="204.25" y="461" width="1.5" height="341" fill="url(#sl)" opacity="0.05"/><rect x="600.7" y="731" width="1.7" height="71" fill="url(#ss)" opacity="0.13"/><rect x="1002.8" y="741" width="2.1" height="61" fill="url(#ss)" opacity="0.22"/><rect x="1135.1" y="752" width="1.5" height="50" fill="url(#ss)" opacity="0.16"/><rect x="970.9" y="652" width="1.9" height="150" fill="url(#ss)" opacity="0.14"/><rect x="574.4" y="707" width="2.1" height="95" fill="url(#ss)" opacity="0.13"/><rect x="918.2" y="687" width="2.0" height="115" fill="url(#ss)" opacity="0.14"/><rect x="408.7" y="722" width="1.2" height="80" fill="url(#ss)" opacity="0.17"/><rect x="314.8" y="728" width="1.4" height="74" fill="url(#ss)" opacity="0.10"/><rect x="902.1" y="676" width="2.0" height="126" fill="url(#ss)" opacity="0.20"/><rect x="988.2" y="716" width="2.4" height="86" fill="url(#ss)" opacity="0.14"/><rect x="464.6" y="704" width="1.6" height="98" fill="url(#ss)" opacity="0.17"/><rect x="352.4" y="771" width="2.3" height="31" fill="url(#ss)" opacity="0.08"/><rect x="804.1" y="717" width="1.6" height="85" fill="url(#ss)" opacity="0.25"/><rect x="1179.8" y="663" width="1.1" height="139" fill="url(#ss)" opacity="0.18"/><rect x="935.8" y="674" width="2.1" height="128" fill="url(#ss)" opacity="0.12"/><rect x="849.0" y="701" width="1.3" height="101" fill="url(#ss)" opacity="0.20"/><rect x="690.1" y="722" width="1.8" height="80" fill="url(#ss)" opacity="0.25"/><rect x="678.7" y="670" width="2.3" height="132" fill="url(#ss)" opacity="0.12"/><rect x="490.4" y="672" width="1.5" height="130" fill="url(#ss)" opacity="0.12"/><rect x="819.5" y="689" width="1.2" height="113" fill="url(#ss)" opacity="0.17"/><rect x="960.3" y="652" width="1.5" height="150" fill="url(#ss)" opacity="0.12"/><rect x="1341.1" y="695" width="1.0" height="107" fill="url(#ss)" opacity="0.13"/><rect x="826.5" y="653" width="1.9" height="149" fill="url(#ss)" opacity="0.20"/><rect x="389.5" y="684" width="1.4" height="118" fill="url(#ss)" opacity="0.17"/><rect x="1280.8" y="636" width="2.3" height="166" fill="url(#ss)" opacity="0.24"/><rect x="965.7" y="679" width="1.0" height="123" fill="url(#ss)" opacity="0.13"/><rect x="718.0" y="722" width="1.1" height="80" fill="url(#ss)" opacity="0.20"/><rect x="479.9" y="657" width="2.4" height="145" fill="url(#ss)" opacity="0.17"/><rect x="795.7" y="700" width="2.2" height="102" fill="url(#ss)" opacity="0.26"/><rect x="737.3" y="720" width="1.6" height="82" fill="url(#ss)" opacity="0.24"/><rect x="177.2" y="646" width="1.5" height="156" fill="url(#ss)" opacity="0.21"/><rect x="494.0" y="733" width="1.9" height="69" fill="url(#ss)" opacity="0.17"/><rect x="245.0" y="735" width="1.9" height="67" fill="url(#ss)" opacity="0.08"/><rect x="379.4" y="658" width="1.2" height="144" fill="url(#ss)" opacity="0.11"/><rect x="577.8" y="681" width="1.6" height="121" fill="url(#ss)" opacity="0.08"/><rect x="639.7" y="668" width="1.1" height="134" fill="url(#ss)" opacity="0.17"/><rect x="1068.4" y="645" width="1.3" height="157" fill="url(#ss)" opacity="0.13"/><rect x="851.9" y="664" width="1.7" height="138" fill="url(#ss)" opacity="0.23"/><rect x="1090.8" y="746" width="2.2" height="56" fill="url(#ss)" opacity="0.09"/><rect x="1257.3" y="725" width="2.2" height="77" fill="url(#ss)" opacity="0.14"/><rect x="1031.3" y="699" width="2.4" height="103" fill="url(#ss)" opacity="0.16"/><rect x="574.3" y="711" width="2.1" height="91" fill="url(#ss)" opacity="0.11"/><rect x="1261.9" y="645" width="2.1" height="157" fill="url(#ss)" opacity="0.21"/><rect x="719.7" y="717" width="1.8" height="85" fill="url(#ss)" opacity="0.18"/><rect x="216.4" y="742" width="1.8" height="60" fill="url(#ss)" opacity="0.14"/><rect x="220.7" y="659" width="1.5" height="143" fill="url(#ss)" opacity="0.14"/><rect x="469.3" y="697" width="1.3" height="105" fill="url(#ss)" opacity="0.19"/><rect x="228.2" y="760" width="2.1" height="42" fill="url(#ss)" opacity="0.15"/><rect x="387.5" y="748" width="2.2" height="54" fill="url(#ss)" opacity="0.09"/><rect x="289.5" y="694" width="1.4" height="108" fill="url(#ss)" opacity="0.07"/><rect x="571.8" y="719" width="1.5" height="83" fill="url(#ss)" opacity="0.08"/><rect x="671.8" y="708" width="2.4" height="94" fill="url(#ss)" opacity="0.09"/><rect x="688.0" y="719" width="2.3" height="83" fill="url(#ss)" opacity="0.13"/><rect x="232.3" y="752" width="2.5" height="50" fill="url(#ss)" opacity="0.09"/><rect x="1127.8" y="679" width="1.5" height="123" fill="url(#ss)" opacity="0.18"/><rect x="426.2" y="669" width="1.6" height="133" fill="url(#ss)" opacity="0.15"/><rect x="974.0" y="693" width="1.7" height="109" fill="url(#ss)" opacity="0.13"/><rect x="796.7" y="664" width="2.4" height="138" fill="url(#ss)" opacity="0.24"/><rect x="1344.4" y="695" width="2.2" height="107" fill="url(#ss)" opacity="0.17"/><rect x="1286.9" y="699" width="1.3" height="103" fill="url(#ss)" opacity="0.19"/><rect x="369.2" y="722" width="1.1" height="80" fill="url(#ss)" opacity="0.09"/><rect x="573.7" y="730" width="1.5" height="72" fill="url(#ss)" opacity="0.06"/><rect x="409.6" y="737" width="2.3" height="65" fill="url(#ss)" opacity="0.14"/><rect x="250.7" y="697" width="1.6" height="105" fill="url(#ss)" opacity="0.12"/><rect x="324.5" y="663" width="1.1" height="139" fill="url(#ss)" opacity="0.15"/><rect x="749.7" y="644" width="1.2" height="158" fill="url(#ss)" opacity="0.27"/><rect x="258.6" y="733" width="1.3" height="69" fill="url(#ss)" opacity="0.11"/><rect x="656.6" y="684" width="2.0" height="118" fill="url(#ss)" opacity="0.11"/><rect x="858.4" y="699" width="1.4" height="103" fill="url(#ss)" opacity="0.16"/><rect x="889.6" y="653" width="1.6" height="149" fill="url(#ss)" opacity="0.18"/><rect x="625.9" y="687" width="1.2" height="115" fill="url(#ss)" opacity="0.18"/><rect x="289.7" y="736" width="1.7" height="66" fill="url(#ss)" opacity="0.08"/><rect x="185.1" y="635" width="1.9" height="167" fill="url(#ss)" opacity="0.26"/><rect x="1132.6" y="751" width="2.0" height="51" fill="url(#ss)" opacity="0.08"/><rect x="367.9" y="716" width="1.7" height="86" fill="url(#ss)" opacity="0.12"/><rect x="429.4" y="634" width="2.2" height="168" fill="url(#ss)" opacity="0.16"/><rect x="807.5" y="645" width="1.1" height="157" fill="url(#ss)" opacity="0.25"/><rect x="1102.4" y="753" width="1.8" height="49" fill="url(#ss)" opacity="0.14"/><rect x="1150.0" y="709" width="1.1" height="93" fill="url(#ss)" opacity="0.15"/><rect x="1301.6" y="703" width="2.2" height="99" fill="url(#ss)" opacity="0.25"/><rect x="1315.3" y="680" width="2.3" height="122" fill="url(#ss)" opacity="0.15"/><rect x="605.5" y="699" width="2.2" height="103" fill="url(#ss)" opacity="0.15"/><rect x="655.3" y="720" width="2.5" height="82" fill="url(#ss)" opacity="0.14"/><rect x="1349.7" y="718" width="1.1" height="84" fill="url(#ss)" opacity="0.11"/><rect x="770.0" y="663" width="1.5" height="139" fill="url(#ss)" opacity="0.17"/><rect x="718.6" y="733" width="1.9" height="69" fill="url(#ss)" opacity="0.12"/><rect x="329.1" y="746" width="2.2" height="56" fill="url(#ss)" opacity="0.12"/><rect x="834.7" y="649" width="1.9" height="153" fill="url(#ss)" opacity="0.26"/><rect x="306.9" y="747" width="1.3" height="55" fill="url(#ss)" opacity="0.14"/><rect x="1039.7" y="670" width="1.4" height="132" fill="url(#ss)" opacity="0.19"/><rect x="750.7" y="725" width="1.8" height="77" fill="url(#ss)" opacity="0.24"/><rect x="627.9" y="690" width="1.3" height="112" fill="url(#ss)" opacity="0.14"/><rect x="662.8" y="752" width="1.3" height="50" fill="url(#ss)" opacity="0.18"/><rect x="329.4" y="755" width="2.4" height="47" fill="url(#ss)" opacity="0.10"/><rect x="482.9" y="693" width="1.3" height="109" fill="url(#ss)" opacity="0.18"/><rect x="621.8" y="724" width="1.5" height="78" fill="url(#ss)" opacity="0.09"/><rect x="795.3" y="648" width="1.6" height="154" fill="url(#ss)" opacity="0.20"/><rect x="965.9" y="724" width="1.0" height="78" fill="url(#ss)" opacity="0.16"/><rect x="782.0" y="685" width="2.1" height="117" fill="url(#ss)" opacity="0.19"/><rect x="290.3" y="739" width="1.5" height="63" fill="url(#ss)" opacity="0.09"/><rect x="988.1" y="721" width="1.3" height="81" fill="url(#ss)" opacity="0.17"/><rect x="383.7" y="664" width="2.1" height="138" fill="url(#ss)" opacity="0.15"/><rect x="418.8" y="716" width="2.2" height="86" fill="url(#ss)" opacity="0.19"/><rect x="608.4" y="670" width="1.9" height="132" fill="url(#ss)" opacity="0.08"/><rect x="433.0" y="657" width="1.0" height="145" fill="url(#ss)" opacity="0.12"/><rect x="504.3" y="672" width="2.5" height="130" fill="url(#ss)" opacity="0.16"/><rect x="265.3" y="676" width="1.5" height="126" fill="url(#ss)" opacity="0.15"/><rect x="975.2" y="666" width="1.8" height="136" fill="url(#ss)" opacity="0.19"/><rect x="563.5" y="726" width="2.4" height="76" fill="url(#ss)" opacity="0.15"/><rect x="264.9" y="732" width="1.2" height="70" fill="url(#ss)" opacity="0.15"/><rect x="1115.4" y="702" width="2.3" height="100" fill="url(#ss)" opacity="0.17"/><rect x="1299.5" y="668" width="2.2" height="134" fill="url(#ss)" opacity="0.23"/><rect x="636.6" y="733" width="2.0" height="69" fill="url(#ss)" opacity="0.09"/><rect x="280.9" y="694" width="1.2" height="108" fill="url(#ss)" opacity="0.16"/><rect x="490.7" y="673" width="2.3" height="129" fill="url(#ss)" opacity="0.20"/><rect x="998.9" y="694" width="1.7" height="108" fill="url(#ss)" opacity="0.20"/><rect x="736.8" y="691" width="2.3" height="111" fill="url(#ss)" opacity="0.19"/><rect x="183.5" y="716" width="2.0" height="86" fill="url(#ss)" opacity="0.21"/><rect x="976.2" y="690" width="1.9" height="112" fill="url(#ss)" opacity="0.18"/><rect x="341.2" y="736" width="1.6" height="66" fill="url(#ss)" opacity="0.08"/><rect x="915.4" y="685" width="1.6" height="117" fill="url(#ss)" opacity="0.13"/><rect x="1117.2" y="683" width="1.4" height="119" fill="url(#ss)" opacity="0.12"/><rect x="243.3" y="686" width="1.6" height="116" fill="url(#ss)" opacity="0.11"/><rect x="305.3" y="684" width="1.9" height="118" fill="url(#ss)" opacity="0.13"/><rect x="344.1" y="767" width="1.5" height="35" fill="url(#ss)" opacity="0.08"/><rect x="746.1" y="677" width="2.5" height="125" fill="url(#ss)" opacity="0.16"/><rect x="458.8" y="653" width="2.5" height="149" fill="url(#ss)" opacity="0.24"/><rect x="573.8" y="683" width="1.3" height="119" fill="url(#ss)" opacity="0.09"/><rect x="602.9" y="696" width="1.2" height="106" fill="url(#ss)" opacity="0.16"/><rect x="886.7" y="736" width="2.5" height="66" fill="url(#ss)" opacity="0.10"/><rect x="370.4" y="753" width="2.0" height="49" fill="url(#ss)" opacity="0.10"/><rect x="477.2" y="639" width="1.0" height="163" fill="url(#ss)" opacity="0.26"/><rect x="346.3" y="707" width="2.2" height="95" fill="url(#ss)" opacity="0.11"/><rect x="271.9" y="739" width="1.2" height="63" fill="url(#ss)" opacity="0.17"/><rect x="864.2" y="697" width="1.5" height="105" fill="url(#ss)" opacity="0.21"/><rect x="938.4" y="707" width="1.7" height="95" fill="url(#ss)" opacity="0.16"/><rect x="422.2" y="715" width="1.4" height="87" fill="url(#ss)" opacity="0.20"/><rect x="255.3" y="725" width="1.9" height="77" fill="url(#ss)" opacity="0.15"/><rect x="524.3" y="657" width="2.4" height="145" fill="url(#ss)" opacity="0.17"/><rect x="601.4" y="699" width="1.2" height="103" fill="url(#ss)" opacity="0.17"/><rect x="332.8" y="700" width="1.2" height="102" fill="url(#ss)" opacity="0.19"/><rect x="1320.9" y="727" width="1.8" height="75" fill="url(#ss)" opacity="0.20"/><rect x="268.0" y="730" width="1.9" height="72" fill="url(#ss)" opacity="0.18"/><rect x="286.6" y="681" width="1.3" height="121" fill="url(#ss)" opacity="0.13"/><rect x="1279.8" y="723" width="1.1" height="79" fill="url(#ss)" opacity="0.21"/><rect x="426.0" y="668" width="1.2" height="134" fill="url(#ss)" opacity="0.20"/><rect x="349.4" y="711" width="2.2" height="91" fill="url(#ss)" opacity="0.12"/><rect x="1346.9" y="716" width="2.3" height="86" fill="url(#ss)" opacity="0.10"/><rect x="1077.5" y="659" width="2.4" height="143" fill="url(#ss)" opacity="0.11"/><rect x="522.4" y="759" width="1.6" height="43" fill="url(#ss)" opacity="0.09"/><rect x="882.6" y="736" width="2.2" height="66" fill="url(#ss)" opacity="0.14"/><rect x="605.9" y="759" width="1.3" height="43" fill="url(#ss)" opacity="0.11"/><rect x="581.4" y="686" width="1.6" height="116" fill="url(#ss)" opacity="0.15"/><rect x="222.7" y="694" width="2.1" height="108" fill="url(#ss)" opacity="0.13"/><rect x="938.1" y="747" width="1.6" height="55" fill="url(#ss)" opacity="0.10"/><rect x="700.9" y="654" width="2.4" height="148" fill="url(#ss)" opacity="0.18"/><rect x="889.1" y="712" width="1.9" height="90" fill="url(#ss)" opacity="0.13"/><rect x="534.3" y="647" width="1.8" height="155" fill="url(#ss)" opacity="0.17"/><rect x="206.8" y="659" width="1.1" height="143" fill="url(#ss)" opacity="0.20"/><rect x="689.3" y="643" width="1.8" height="159" fill="url(#ss)" opacity="0.15"/><rect x="248.8" y="677" width="2.3" height="125" fill="url(#ss)" opacity="0.16"/><rect x="960.5" y="676" width="2.5" height="126" fill="url(#ss)" opacity="0.14"/><rect x="832.3" y="728" width="1.1" height="74" fill="url(#ss)" opacity="0.28"/><rect x="227.7" y="664" width="2.4" height="138" fill="url(#ss)" opacity="0.11"/><rect x="246.2" y="685" width="1.7" height="117" fill="url(#ss)" opacity="0.08"/><rect x="330.2" y="669" width="2.2" height="133" fill="url(#ss)" opacity="0.10"/><rect x="447.2" y="703" width="1.4" height="99" fill="url(#ss)" opacity="0.26"/><rect x="957.9" y="690" width="2.1" height="112" fill="url(#ss)" opacity="0.17"/><rect x="1197.8" y="757" width="2.1" height="45" fill="url(#ss)" opacity="0.14"/><rect x="546.7" y="694" width="1.4" height="108" fill="url(#ss)" opacity="0.22"/><rect x="690.3" y="718" width="1.4" height="84" fill="url(#ss)" opacity="0.15"/><rect x="185.6" y="726" width="2.5" height="76" fill="url(#ss)" opacity="0.25"/><rect x="386.3" y="751" width="2.0" height="51" fill="url(#ss)" opacity="0.10"/><rect x="1224.4" y="693" width="1.5" height="109" fill="url(#ss)" opacity="0.24"/><rect x="212.2" y="657" width="1.7" height="145" fill="url(#ss)" opacity="0.18"/><rect x="858.5" y="687" width="1.4" height="115" fill="url(#ss)" opacity="0.13"/><rect x="1140.8" y="759" width="1.0" height="43" fill="url(#ss)" opacity="0.13"/><rect x="891.5" y="657" width="1.0" height="145" fill="url(#ss)" opacity="0.11"/><rect x="1317.7" y="666" width="2.3" height="136" fill="url(#ss)" opacity="0.21"/><rect x="463.1" y="713" width="1.2" height="89" fill="url(#ss)" opacity="0.15"/><rect x="891.7" y="694" width="1.9" height="108" fill="url(#ss)" opacity="0.15"/><rect x="748.4" y="701" width="1.9" height="101" fill="url(#ss)" opacity="0.24"/><rect x="721.0" y="689" width="2.4" height="113" fill="url(#ss)" opacity="0.26"/><rect x="537.5" y="692" width="1.6" height="110" fill="url(#ss)" opacity="0.19"/><rect x="923.1" y="714" width="1.0" height="88" fill="url(#ss)" opacity="0.13"/><rect x="1049.1" y="723" width="2.0" height="79" fill="url(#ss)" opacity="0.20"/><rect x="641.1" y="714" width="2.3" height="88" fill="url(#ss)" opacity="0.12"/><rect x="544.6" y="698" width="1.1" height="104" fill="url(#ss)" opacity="0.11"/><rect x="804.1" y="640" width="1.4" height="162" fill="url(#ss)" opacity="0.15"/><rect x="638.3" y="667" width="1.3" height="135" fill="url(#ss)" opacity="0.13"/><rect x="584.4" y="669" width="1.1" height="133" fill="url(#ss)" opacity="0.15"/><rect x="540.5" y="700" width="1.8" height="102" fill="url(#ss)" opacity="0.25"/><rect x="983.2" y="683" width="1.4" height="119" fill="url(#ss)" opacity="0.16"/><rect x="458.5" y="711" width="1.4" height="91" fill="url(#ss)" opacity="0.19"/><rect x="305.4" y="713" width="2.1" height="89" fill="url(#ss)" opacity="0.08"/><rect x="1299.1" y="699" width="1.7" height="103" fill="url(#ss)" opacity="0.22"/><rect x="639.8" y="759" width="2.3" height="43" fill="url(#ss)" opacity="0.16"/><rect x="473.7" y="661" width="1.6" height="141" fill="url(#ss)" opacity="0.18"/><rect x="1084.2" y="676" width="2.1" height="126" fill="url(#ss)" opacity="0.18"/><rect x="958.9" y="696" width="1.6" height="106" fill="url(#ss)" opacity="0.15"/><rect x="169.0" y="659" width="1.7" height="143" fill="url(#ss)" opacity="0.20"/><rect x="1008.6" y="653" width="2.3" height="149" fill="url(#ss)" opacity="0.18"/><rect x="439.5" y="695" width="1.2" height="107" fill="url(#ss)" opacity="0.15"/><rect x="719.1" y="702" width="1.0" height="100" fill="url(#ss)" opacity="0.19"/><rect x="288.4" y="701" width="1.1" height="101" fill="url(#ss)" opacity="0.06"/><rect x="854.1" y="662" width="1.7" height="140" fill="url(#ss)" opacity="0.11"/><rect x="423.7" y="747" width="1.1" height="55" fill="url(#ss)" opacity="0.13"/><rect x="225.6" y="736" width="1.8" height="66" fill="url(#ss)" opacity="0.12"/><rect x="597.6" y="707" width="1.6" height="95" fill="url(#ss)" opacity="0.12"/><rect x="516.3" y="747" width="2.3" height="55" fill="url(#ss)" opacity="0.12"/><rect x="1256.3" y="717" width="2.4" height="85" fill="url(#ss)" opacity="0.13"/><rect x="730.0" y="678" width="1.9" height="124" fill="url(#ss)" opacity="0.25"/><rect x="758.5" y="728" width="1.9" height="74" fill="url(#ss)" opacity="0.13"/><rect x="269.4" y="677" width="2.5" height="125" fill="url(#ss)" opacity="0.13"/><rect x="1314.2" y="712" width="1.9" height="90" fill="url(#ss)" opacity="0.21"/><rect x="1110.8" y="661" width="1.1" height="141" fill="url(#ss)" opacity="0.11"/><rect x="1294.0" y="651" width="1.4" height="151" fill="url(#ss)" opacity="0.24"/><rect x="168.5" y="679" width="1.9" height="123" fill="url(#ss)" opacity="0.28"/><rect x="756.4" y="712" width="1.4" height="90" fill="url(#ss)" opacity="0.20"/><rect x="1189.1" y="693" width="1.1" height="109" fill="url(#ss)" opacity="0.14"/><rect x="841.8" y="673" width="1.6" height="129" fill="url(#ss)" opacity="0.24"/><rect x="899.6" y="668" width="1.4" height="134" fill="url(#ss)" opacity="0.21"/><rect x="1201.4" y="751" width="2.0" height="51" fill="url(#ss)" opacity="0.10"/><rect x="1155.8" y="726" width="1.9" height="76" fill="url(#ss)" opacity="0.19"/><rect x="393.0" y="661" width="1.1" height="141" fill="url(#ss)" opacity="0.10"/><rect x="951.3" y="673" width="1.7" height="129" fill="url(#ss)" opacity="0.09"/><rect x="1200.0" y="720" width="1.1" height="82" fill="url(#ss)" opacity="0.16"/><rect x="818.2" y="699" width="2.0" height="103" fill="url(#ss)" opacity="0.22"/><rect x="1268.2" y="722" width="1.1" height="80" fill="url(#ss)" opacity="0.14"/><rect x="882.0" y="710" width="2.5" height="92" fill="url(#ss)" opacity="0.13"/><rect x="519.6" y="721" width="1.1" height="81" fill="url(#ss)" opacity="0.14"/><rect x="833.5" y="672" width="2.3" height="130" fill="url(#ss)" opacity="0.17"/><rect x="273.0" y="696" width="2.3" height="106" fill="url(#ss)" opacity="0.13"/><rect x="1051.7" y="690" width="1.7" height="112" fill="url(#ss)" opacity="0.10"/><rect x="938.9" y="659" width="2.5" height="143" fill="url(#ss)" opacity="0.16"/><rect x="598.2" y="712" width="1.4" height="90" fill="url(#ss)" opacity="0.14"/><rect x="352.2" y="671" width="2.1" height="131" fill="url(#ss)" opacity="0.12"/><rect x="769.2" y="634" width="2.1" height="168" fill="url(#ss)" opacity="0.22"/><rect x="553.5" y="740" width="2.2" height="62" fill="url(#ss)" opacity="0.16"/><rect x="1239.8" y="737" width="2.0" height="65" fill="url(#ss)" opacity="0.10"/><rect x="714.5" y="689" width="1.7" height="113" fill="url(#ss)" opacity="0.12"/><rect x="678.6" y="660" width="1.0" height="142" fill="url(#ss)" opacity="0.13"/><rect x="596.7" y="685" width="2.1" height="117" fill="url(#ss)" opacity="0.09"/><rect x="774.7" y="687" width="1.6" height="115" fill="url(#ss)" opacity="0.21"/><rect x="908.3" y="732" width="1.9" height="70" fill="url(#ss)" opacity="0.10"/><rect x="1245.0" y="706" width="1.0" height="96" fill="url(#ss)" opacity="0.10"/><rect x="234.2" y="723" width="2.0" height="79" fill="url(#ss)" opacity="0.09"/><rect x="906.2" y="683" width="1.5" height="119" fill="url(#ss)" opacity="0.21"/><rect x="1168.2" y="715" width="1.0" height="87" fill="url(#ss)" opacity="0.23"/><rect x="499.5" y="684" width="1.5" height="118" fill="url(#ss)" opacity="0.20"/><rect x="544.6" y="699" width="2.4" height="103" fill="url(#ss)" opacity="0.25"/><rect x="374.1" y="676" width="1.9" height="126" fill="url(#ss)" opacity="0.16"/><rect x="882.5" y="685" width="2.2" height="117" fill="url(#ss)" opacity="0.15"/><rect x="733.7" y="642" width="1.7" height="160" fill="url(#ss)" opacity="0.23"/><rect x="1049.4" y="720" width="2.0" height="82" fill="url(#ss)" opacity="0.18"/><rect x="550.0" y="700" width="2.1" height="102" fill="url(#ss)" opacity="0.17"/><rect x="624.1" y="739" width="1.6" height="63" fill="url(#ss)" opacity="0.18"/><rect x="822.2" y="636" width="1.2" height="166" fill="url(#ss)" opacity="0.16"/><rect x="1089.7" y="677" width="1.0" height="125" fill="url(#ss)" opacity="0.09"/><rect x="1260.7" y="664" width="1.0" height="138" fill="url(#ss)" opacity="0.16"/><rect x="370.3" y="679" width="1.2" height="123" fill="url(#ss)" opacity="0.09"/><rect x="391.1" y="711" width="2.3" height="91" fill="url(#ss)" opacity="0.19"/><rect x="692.4" y="705" width="1.4" height="97" fill="url(#ss)" opacity="0.21"/><rect x="480.7" y="677" width="1.9" height="125" fill="url(#ss)" opacity="0.27"/><rect x="1167.3" y="673" width="1.4" height="129" fill="url(#ss)" opacity="0.16"/><rect x="212.5" y="689" width="1.8" height="113" fill="url(#ss)" opacity="0.18"/><rect x="826.0" y="679" width="1.6" height="123" fill="url(#ss)" opacity="0.19"/><rect x="759.9" y="655" width="1.9" height="147" fill="url(#ss)" opacity="0.24"/><rect x="396.7" y="672" width="1.8" height="130" fill="url(#ss)" opacity="0.11"/><rect x="825.0" y="635" width="1.4" height="167" fill="url(#ss)" opacity="0.22"/><rect x="796.2" y="643" width="2.3" height="159" fill="url(#ss)" opacity="0.24"/><rect x="1055.7" y="695" width="2.5" height="107" fill="url(#ss)" opacity="0.20"/><rect x="813.8" y="637" width="2.1" height="165" fill="url(#ss)" opacity="0.17"/><rect x="453.1" y="683" width="2.4" height="119" fill="url(#ss)" opacity="0.23"/><rect x="1338.8" y="746" width="1.9" height="56" fill="url(#ss)" opacity="0.11"/><rect x="1261.6" y="694" width="1.4" height="108" fill="url(#ss)" opacity="0.14"/><rect x="1222.1" y="685" width="2.5" height="117" fill="url(#ss)" opacity="0.13"/><rect x="1109.9" y="679" width="1.2" height="123" fill="url(#ss)" opacity="0.13"/><rect x="1014.0" y="725" width="2.0" height="77" fill="url(#ss)" opacity="0.21"/><rect x="930.3" y="751" width="2.2" height="51" fill="url(#ss)" opacity="0.20"/><rect x="544.7" y="644" width="1.0" height="158" fill="url(#ss)" opacity="0.24"/><rect x="526.3" y="744" width="2.0" height="58" fill="url(#ss)" opacity="0.14"/><rect x="658.2" y="729" width="1.1" height="73" fill="url(#ss)" opacity="0.13"/><rect x="403.0" y="672" width="1.4" height="130" fill="url(#ss)" opacity="0.14"/><rect x="1274.9" y="700" width="1.2" height="102" fill="url(#ss)" opacity="0.22"/><rect x="985.5" y="732" width="1.5" height="70" fill="url(#ss)" opacity="0.12"/><rect x="863.0" y="644" width="1.4" height="158" fill="url(#ss)" opacity="0.14"/><rect x="887.8" y="708" width="1.6" height="94" fill="url(#ss)" opacity="0.20"/><rect x="886.3" y="672" width="1.0" height="130" fill="url(#ss)" opacity="0.17"/><rect x="908.6" y="693" width="1.7" height="109" fill="url(#ss)" opacity="0.11"/><rect x="1304.3" y="645" width="1.6" height="157" fill="url(#ss)" opacity="0.16"/><rect x="611.2" y="676" width="1.5" height="126" fill="url(#ss)" opacity="0.16"/><rect x="245.5" y="697" width="1.9" height="105" fill="url(#ss)" opacity="0.15"/><rect x="932.9" y="666" width="2.1" height="136" fill="url(#ss)" opacity="0.10"/><rect x="1337.4" y="733" width="1.9" height="69" fill="url(#ss)" opacity="0.10"/><rect x="699.6" y="676" width="1.1" height="126" fill="url(#ss)" opacity="0.15"/><rect x="1145.4" y="740" width="1.6" height="62" fill="url(#ss)" opacity="0.13"/><rect x="280.2" y="661" width="1.5" height="141" fill="url(#ss)" opacity="0.16"/><rect x="1121.7" y="754" width="1.6" height="48" fill="url(#ss)" opacity="0.17"/><rect x="509.3" y="681" width="2.0" height="121" fill="url(#ss)" opacity="0.13"/><rect x="1210.5" y="744" width="1.2" height="58" fill="url(#ss)" opacity="0.15"/><rect x="517.9" y="685" width="2.5" height="117" fill="url(#ss)" opacity="0.10"/><rect x="927.8" y="714" width="2.3" height="88" fill="url(#ss)" opacity="0.12"/><rect x="826.6" y="644" width="1.6" height="158" fill="url(#ss)" opacity="0.22"/><rect x="967.9" y="709" width="2.3" height="93" fill="url(#ss)" opacity="0.18"/><rect x="443.5" y="681" width="1.4" height="121" fill="url(#ss)" opacity="0.17"/><rect x="754.6" y="641" width="2.2" height="161" fill="url(#ss)" opacity="0.20"/><rect x="851.8" y="653" width="2.4" height="149" fill="url(#ss)" opacity="0.16"/><rect x="957.5" y="740" width="1.0" height="62" fill="url(#ss)" opacity="0.11"/><rect x="883.6" y="706" width="1.4" height="96" fill="url(#ss)" opacity="0.14"/><rect x="1035.2" y="643" width="2.0" height="159" fill="url(#ss)" opacity="0.22"/><rect x="721.9" y="683" width="1.0" height="119" fill="url(#ss)" opacity="0.23"/><rect x="1115.6" y="675" width="1.7" height="127" fill="url(#ss)" opacity="0.14"/><rect x="483.8" y="689" width="1.4" height="113" fill="url(#ss)" opacity="0.24"/><rect x="804.1" y="698" width="2.4" height="104" fill="url(#ss)" opacity="0.24"/><rect x="314.9" y="714" width="2.0" height="88" fill="url(#ss)" opacity="0.15"/><rect x="812.3" y="651" width="2.0" height="151" fill="url(#ss)" opacity="0.19"/><rect x="603.5" y="758" width="1.2" height="44" fill="url(#ss)" opacity="0.13"/><rect x="468.9" y="680" width="2.3" height="122" fill="url(#ss)" opacity="0.19"/><rect x="934.0" y="700" width="1.2" height="102" fill="url(#ss)" opacity="0.17"/><rect x="355.9" y="705" width="1.1" height="97" fill="url(#ss)" opacity="0.13"/><rect x="1254.5" y="675" width="2.0" height="127" fill="url(#ss)" opacity="0.16"/><rect x="922.6" y="674" width="1.1" height="128" fill="url(#ss)" opacity="0.14"/><rect x="692.2" y="661" width="1.6" height="141" fill="url(#ss)" opacity="0.16"/><rect x="1175.8" y="692" width="2.4" height="110" fill="url(#ss)" opacity="0.11"/><rect x="804.7" y="671" width="1.5" height="131" fill="url(#ss)" opacity="0.19"/><rect x="1029.7" y="639" width="1.9" height="163" fill="url(#ss)" opacity="0.16"/><rect x="1304.6" y="702" width="2.4" height="100" fill="url(#ss)" opacity="0.24"/><rect x="261.6" y="677" width="2.1" height="125" fill="url(#ss)" opacity="0.13"/><rect x="1295.5" y="677" width="1.9" height="125" fill="url(#ss)" opacity="0.12"/><rect x="341.5" y="731" width="1.5" height="71" fill="url(#ss)" opacity="0.11"/><rect x="1029.3" y="632" width="1.3" height="170" fill="url(#ss)" opacity="0.12"/><rect x="300.4" y="759" width="2.1" height="43" fill="url(#ss)" opacity="0.11"/><rect x="560.5" y="677" width="2.5" height="125" fill="url(#ss)" opacity="0.09"/><rect x="1001.5" y="689" width="1.1" height="113" fill="url(#ss)" opacity="0.20"/><rect x="559.8" y="698" width="2.4" height="104" fill="url(#ss)" opacity="0.17"/><rect x="1245.8" y="660" width="1.7" height="142" fill="url(#ss)" opacity="0.14"/><rect x="1083.7" y="747" width="1.6" height="55" fill="url(#ss)" opacity="0.11"/><rect x="380.0" y="659" width="1.6" height="143" fill="url(#ss)" opacity="0.21"/><rect x="1133.6" y="686" width="2.3" height="116" fill="url(#ss)" opacity="0.13"/><rect x="502.0" y="655" width="1.8" height="147" fill="url(#ss)" opacity="0.22"/><rect x="477.1" y="656" width="2.0" height="146" fill="url(#ss)" opacity="0.27"/><rect x="431.3" y="638" width="1.8" height="164" fill="url(#ss)" opacity="0.14"/><rect x="665.0" y="746" width="1.7" height="56" fill="url(#ss)" opacity="0.08"/><rect x="433.0" y="694" width="1.4" height="108" fill="url(#ss)" opacity="0.15"/><rect x="780.9" y="732" width="2.2" height="70" fill="url(#ss)" opacity="0.25"/><rect x="678.3" y="679" width="2.5" height="123" fill="url(#ss)" opacity="0.19"/><rect x="312.1" y="681" width="1.7" height="121" fill="url(#ss)" opacity="0.13"/><rect x="981.7" y="654" width="1.4" height="148" fill="url(#ss)" opacity="0.15"/><rect x="621.6" y="716" width="2.5" height="86" fill="url(#ss)" opacity="0.11"/><rect x="867.1" y="697" width="2.0" height="105" fill="url(#ss)" opacity="0.24"/><rect x="912.1" y="703" width="2.2" height="99" fill="url(#ss)" opacity="0.13"/><rect x="245.8" y="740" width="2.4" height="62" fill="url(#ss)" opacity="0.14"/><rect x="1121.2" y="690" width="1.7" height="112" fill="url(#ss)" opacity="0.10"/><rect x="1088.9" y="704" width="1.0" height="98" fill="url(#ss)" opacity="0.11"/><rect x="1053.2" y="704" width="1.4" height="98" fill="url(#ss)" opacity="0.15"/><rect x="543.6" y="685" width="1.7" height="117" fill="url(#ss)" opacity="0.13"/><rect x="903.2" y="724" width="2.0" height="78" fill="url(#ss)" opacity="0.11"/><rect x="911.9" y="666" width="2.0" height="136" fill="url(#ss)" opacity="0.14"/><rect x="897.0" y="678" width="1.5" height="124" fill="url(#ss)" opacity="0.12"/><rect x="258.8" y="713" width="1.1" height="89" fill="url(#ss)" opacity="0.07"/><rect x="307.6" y="715" width="2.3" height="87" fill="url(#ss)" opacity="0.16"/><rect x="1227.2" y="694" width="2.2" height="108" fill="url(#ss)" opacity="0.21"/><rect x="1135.5" y="738" width="2.3" height="64" fill="url(#ss)" opacity="0.18"/><rect x="300.9" y="683" width="1.3" height="119" fill="url(#ss)" opacity="0.12"/><rect x="888.6" y="662" width="1.5" height="140" fill="url(#ss)" opacity="0.14"/><rect x="614.2" y="751" width="1.3" height="51" fill="url(#ss)" opacity="0.12"/><rect x="956.7" y="730" width="1.3" height="72" fill="url(#ss)" opacity="0.14"/><rect x="673.2" y="662" width="1.1" height="140" fill="url(#ss)" opacity="0.13"/><rect x="872.7" y="690" width="1.8" height="112" fill="url(#ss)" opacity="0.23"/><rect x="419.2" y="722" width="1.9" height="80" fill="url(#ss)" opacity="0.14"/><rect x="687.6" y="714" width="2.3" height="88" fill="url(#ss)" opacity="0.17"/><rect x="931.4" y="688" width="1.6" height="114" fill="url(#ss)" opacity="0.17"/><rect x="172.2" y="718" width="2.4" height="84" fill="url(#ss)" opacity="0.13"/><rect x="1169.6" y="698" width="1.5" height="104" fill="url(#ss)" opacity="0.18"/><rect x="1086.9" y="733" width="1.8" height="69" fill="url(#ss)" opacity="0.21"/><rect x="1317.4" y="703" width="1.2" height="99" fill="url(#ss)" opacity="0.20"/><rect x="1266.4" y="688" width="2.3" height="114" fill="url(#ss)" opacity="0.18"/><rect x="581.6" y="672" width="1.3" height="130" fill="url(#ss)" opacity="0.09"/><rect x="235.8" y="735" width="1.9" height="67" fill="url(#ss)" opacity="0.09"/><rect x="570.3" y="711" width="2.1" height="91" fill="url(#ss)" opacity="0.09"/><rect x="1282.9" y="652" width="1.6" height="150" fill="url(#ss)" opacity="0.15"/><rect x="1163.0" y="651" width="1.7" height="151" fill="url(#ss)" opacity="0.09"/><rect x="1314.0" y="727" width="1.1" height="75" fill="url(#ss)" opacity="0.15"/><rect x="795.0" y="641" width="2.3" height="161" fill="url(#ss)" opacity="0.22"/><rect x="430.9" y="678" width="2.4" height="124" fill="url(#ss)" opacity="0.16"/><rect x="544.0" y="641" width="1.6" height="161" fill="url(#ss)" opacity="0.17"/><rect x="516.5" y="753" width="2.2" height="49" fill="url(#ss)" opacity="0.11"/><rect x="1180.6" y="688" width="1.6" height="114" fill="url(#ss)" opacity="0.16"/><rect x="684.6" y="699" width="2.2" height="103" fill="url(#ss)" opacity="0.12"/><rect x="512.0" y="750" width="1.8" height="52" fill="url(#ss)" opacity="0.12"/><rect x="219.8" y="712" width="2.2" height="90" fill="url(#ss)" opacity="0.11"/><rect x="175.0" y="709" width="1.2" height="93" fill="url(#ss)" opacity="0.19"/><rect x="871.1" y="707" width="1.0" height="95" fill="url(#ss)" opacity="0.14"/><rect x="358.6" y="712" width="1.6" height="90" fill="url(#ss)" opacity="0.14"/><rect x="281.0" y="701" width="1.4" height="101" fill="url(#ss)" opacity="0.13"/><rect x="992.6" y="718" width="1.2" height="84" fill="url(#ss)" opacity="0.20"/><rect x="1229.3" y="717" width="1.8" height="85" fill="url(#ss)" opacity="0.28"/><rect x="1153.2" y="739" width="1.8" height="63" fill="url(#ss)" opacity="0.16"/><rect x="876.1" y="654" width="1.0" height="148" fill="url(#ss)" opacity="0.21"/><rect x="485.9" y="723" width="2.1" height="79" fill="url(#ss)" opacity="0.16"/><rect x="1137.2" y="705" width="1.5" height="97" fill="url(#ss)" opacity="0.16"/><rect x="986.9" y="715" width="2.4" height="87" fill="url(#ss)" opacity="0.17"/><rect x="1268.5" y="692" width="2.1" height="110" fill="url(#ss)" opacity="0.14"/><rect x="460.7" y="654" width="1.9" height="148" fill="url(#ss)" opacity="0.16"/><rect x="1121.9" y="671" width="1.8" height="131" fill="url(#ss)" opacity="0.12"/><rect x="621.5" y="710" width="1.8" height="92" fill="url(#ss)" opacity="0.09"/><rect x="188.5" y="707" width="2.3" height="95" fill="url(#ss)" opacity="0.21"/><rect x="400.7" y="756" width="1.7" height="46" fill="url(#ss)" opacity="0.14"/><rect x="515.0" y="725" width="1.2" height="77" fill="url(#ss)" opacity="0.19"/><rect x="1293.6" y="728" width="2.0" height="74" fill="url(#ss)" opacity="0.11"/><rect x="262.1" y="754" width="1.8" height="48" fill="url(#ss)" opacity="0.11"/><rect x="1240.0" y="697" width="1.2" height="105" fill="url(#ss)" opacity="0.20"/><rect x="1070.3" y="739" width="1.9" height="63" fill="url(#ss)" opacity="0.21"/><rect x="327.5" y="679" width="2.4" height="123" fill="url(#ss)" opacity="0.12"/><rect x="303.1" y="671" width="2.1" height="131" fill="url(#ss)" opacity="0.11"/><rect x="562.1" y="730" width="2.3" height="72" fill="url(#ss)" opacity="0.18"/><rect x="235.8" y="705" width="1.8" height="97" fill="url(#ss)" opacity="0.13"/><rect x="859.1" y="702" width="2.3" height="100" fill="url(#ss)" opacity="0.14"/><rect x="681.6" y="658" width="2.5" height="144" fill="url(#ss)" opacity="0.17"/><rect x="1013.9" y="686" width="2.4" height="116" fill="url(#ss)" opacity="0.12"/><rect x="1140.1" y="734" width="1.2" height="68" fill="url(#ss)" opacity="0.19"/><rect x="1155.9" y="666" width="2.5" height="136" fill="url(#ss)" opacity="0.18"/><rect x="324.8" y="733" width="2.0" height="69" fill="url(#ss)" opacity="0.15"/><rect x="529.4" y="667" width="1.1" height="135" fill="url(#ss)" opacity="0.16"/><rect x="1338.1" y="738" width="1.8" height="64" fill="url(#ss)" opacity="0.10"/><rect x="740.6" y="639" width="2.4" height="163" fill="url(#ss)" opacity="0.22"/><rect x="1086.2" y="713" width="1.9" height="89" fill="url(#ss)" opacity="0.13"/><rect x="599.6" y="669" width="2.0" height="133" fill="url(#ss)" opacity="0.10"/><rect x="740.5" y="652" width="1.1" height="150" fill="url(#ss)" opacity="0.17"/><rect x="1232.8" y="696" width="2.1" height="106" fill="url(#ss)" opacity="0.24"/><rect x="237.8" y="724" width="1.5" height="78" fill="url(#ss)" opacity="0.08"/><rect x="848.3" y="708" width="2.1" height="94" fill="url(#ss)" opacity="0.15"/><rect x="588.9" y="667" width="1.9" height="135" fill="url(#ss)" opacity="0.14"/><rect x="522.6" y="691" width="1.8" height="111" fill="url(#ss)" opacity="0.13"/><rect x="567.7" y="753" width="1.9" height="49" fill="url(#ss)" opacity="0.13"/><rect x="649.6" y="755" width="2.4" height="47" fill="url(#ss)" opacity="0.16"/><rect x="1345.8" y="671" width="1.5" height="131" fill="url(#ss)" opacity="0.12"/><rect x="459.6" y="647" width="2.2" height="155" fill="url(#ss)" opacity="0.19"/><rect x="1144.8" y="670" width="1.7" height="132" fill="url(#ss)" opacity="0.12"/><rect x="536.3" y="736" width="1.1" height="66" fill="url(#ss)" opacity="0.20"/><rect x="1036.8" y="634" width="1.1" height="168" fill="url(#ss)" opacity="0.15"/><rect x="672.5" y="744" width="2.5" height="58" fill="url(#ss)" opacity="0.13"/><rect x="1049.5" y="715" width="2.4" height="87" fill="url(#ss)" opacity="0.16"/><rect x="1126.2" y="709" width="1.8" height="93" fill="url(#ss)" opacity="0.14"/><rect x="1021.4" y="691" width="2.2" height="111" fill="url(#ss)" opacity="0.19"/><rect x="1077.9" y="719" width="2.3" height="83" fill="url(#ss)" opacity="0.16"/><rect x="484.5" y="698" width="1.0" height="104" fill="url(#ss)" opacity="0.24"/><rect x="554.9" y="667" width="1.6" height="135" fill="url(#ss)" opacity="0.19"/><rect x="315.3" y="705" width="2.3" height="97" fill="url(#ss)" opacity="0.19"/><rect x="513.6" y="666" width="1.6" height="136" fill="url(#ss)" opacity="0.12"/><rect x="284.8" y="674" width="2.5" height="128" fill="url(#ss)" opacity="0.14"/><rect x="725.9" y="725" width="2.1" height="77" fill="url(#ss)" opacity="0.16"/><rect x="1346.5" y="685" width="1.1" height="117" fill="url(#ss)" opacity="0.10"/><rect x="355.4" y="729" width="1.6" height="73" fill="url(#ss)" opacity="0.12"/><rect x="529.1" y="669" width="1.6" height="133" fill="url(#ss)" opacity="0.14"/><rect x="900.1" y="699" width="1.4" height="103" fill="url(#ss)" opacity="0.11"/><rect x="1174.1" y="725" width="1.3" height="77" fill="url(#ss)" opacity="0.15"/><rect x="754.2" y="642" width="1.3" height="160" fill="url(#ss)" opacity="0.22"/><rect x="1173.9" y="665" width="1.3" height="137" fill="url(#ss)" opacity="0.15"/><rect x="1253.0" y="727" width="2.3" height="75" fill="url(#ss)" opacity="0.17"/><rect x="449.1" y="719" width="1.3" height="83" fill="url(#ss)" opacity="0.16"/><rect x="314.3" y="663" width="2.1" height="139" fill="url(#ss)" opacity="0.12"/><rect x="848.9" y="716" width="1.4" height="86" fill="url(#ss)" opacity="0.18"/><rect x="451.7" y="677" width="1.2" height="125" fill="url(#ss)" opacity="0.24"/><rect x="314.0" y="740" width="1.3" height="62" fill="url(#ss)" opacity="0.19"/><rect x="573.5" y="754" width="1.8" height="48" fill="url(#ss)" opacity="0.07"/><rect x="714.3" y="705" width="2.5" height="97" fill="url(#ss)" opacity="0.12"/><rect x="700.1" y="689" width="2.5" height="113" fill="url(#ss)" opacity="0.16"/><rect x="576.5" y="752" width="2.2" height="50" fill="url(#ss)" opacity="0.11"/><rect x="183.1" y="660" width="1.0" height="142" fill="url(#ss)" opacity="0.21"/><rect x="1350.7" y="722" width="1.9" height="80" fill="url(#ss)" opacity="0.12"/><rect x="784.0" y="696" width="1.2" height="106" fill="url(#ss)" opacity="0.25"/><rect x="1216.6" y="657" width="1.7" height="145" fill="url(#ss)" opacity="0.23"/><rect x="541.7" y="652" width="1.7" height="150" fill="url(#ss)" opacity="0.18"/><rect x="326.6" y="680" width="2.2" height="122" fill="url(#ss)" opacity="0.18"/><rect x="394.1" y="737" width="2.3" height="65" fill="url(#ss)" opacity="0.11"/><rect x="1336.6" y="741" width="1.9" height="61" fill="url(#ss)" opacity="0.16"/><rect x="800.0" y="671" width="2.5" height="131" fill="url(#ss)" opacity="0.21"/><rect x="413.0" y="671" width="1.6" height="131" fill="url(#ss)" opacity="0.13"/><rect x="1288.2" y="644" width="1.9" height="158" fill="url(#ss)" opacity="0.24"/><rect x="1020.0" y="646" width="1.8" height="156" fill="url(#ss)" opacity="0.17"/><rect x="291.1" y="677" width="1.1" height="125" fill="url(#ss)" opacity="0.10"/><rect x="1139.7" y="755" width="1.9" height="47" fill="url(#ss)" opacity="0.17"/><rect x="811.8" y="634" width="1.5" height="168" fill="url(#ss)" opacity="0.17"/><rect x="326.9" y="659" width="1.2" height="143" fill="url(#ss)" opacity="0.11"/><rect x="1167.2" y="696" width="1.7" height="106" fill="url(#ss)" opacity="0.13"/><rect x="275.9" y="743" width="1.6" height="59" fill="url(#ss)" opacity="0.14"/><rect x="573.3" y="685" width="1.3" height="117" fill="url(#ss)" opacity="0.16"/><rect x="1028.7" y="689" width="1.4" height="113" fill="url(#ss)" opacity="0.18"/><rect x="1126.3" y="682" width="1.8" height="120" fill="url(#ss)" opacity="0.10"/><rect x="197.3" y="713" width="1.1" height="89" fill="url(#ss)" opacity="0.24"/><rect x="855.9" y="657" width="1.1" height="145" fill="url(#ss)" opacity="0.18"/><rect x="1227.4" y="679" width="1.3" height="123" fill="url(#ss)" opacity="0.18"/><rect x="910.2" y="722" width="1.3" height="80" fill="url(#ss)" opacity="0.15"/><rect x="440.9" y="695" width="1.2" height="107" fill="url(#ss)" opacity="0.18"/><rect x="1338.9" y="692" width="1.2" height="110" fill="url(#ss)" opacity="0.19"/><rect x="453.8" y="645" width="1.2" height="157" fill="url(#ss)" opacity="0.20"/><rect x="1221.4" y="715" width="1.1" height="87" fill="url(#ss)" opacity="0.19"/><rect x="872.5" y="662" width="1.9" height="140" fill="url(#ss)" opacity="0.13"/><rect x="1275.9" y="634" width="1.6" height="168" fill="url(#ss)" opacity="0.23"/><rect x="1299.6" y="694" width="2.0" height="108" fill="url(#ss)" opacity="0.24"/><rect x="174.8" y="699" width="1.3" height="103" fill="url(#ss)" opacity="0.22"/><rect x="977.1" y="724" width="2.2" height="78" fill="url(#ss)" opacity="0.14"/><rect x="766.4" y="685" width="1.8" height="117" fill="url(#ss)" opacity="0.13"/><rect x="1270.4" y="662" width="1.4" height="140" fill="url(#ss)" opacity="0.19"/><rect x="531.3" y="724" width="1.7" height="78" fill="url(#ss)" opacity="0.20"/><rect x="587.9" y="678" width="1.8" height="124" fill="url(#ss)" opacity="0.12"/><rect x="351.8" y="713" width="1.2" height="89" fill="url(#ss)" opacity="0.09"/><rect x="1175.7" y="667" width="2.1" height="135" fill="url(#ss)" opacity="0.21"/><rect x="1158.8" y="719" width="1.5" height="83" fill="url(#ss)" opacity="0.17"/><rect x="1185.3" y="705" width="1.1" height="97" fill="url(#ss)" opacity="0.16"/><rect x="1048.0" y="679" width="1.9" height="123" fill="url(#ss)" opacity="0.11"/><rect x="348.2" y="750" width="1.3" height="52" fill="url(#ss)" opacity="0.11"/><rect x="512.2" y="723" width="1.7" height="79" fill="url(#ss)" opacity="0.13"/><rect x="1241.6" y="647" width="2.2" height="155" fill="url(#ss)" opacity="0.25"/><rect x="603.7" y="691" width="2.2" height="111" fill="url(#ss)" opacity="0.15"/><rect x="1134.8" y="662" width="1.8" height="140" fill="url(#ss)" opacity="0.11"/><rect x="1336.4" y="720" width="1.5" height="82" fill="url(#ss)" opacity="0.16"/><rect x="1255.5" y="661" width="1.5" height="141" fill="url(#ss)" opacity="0.17"/><rect x="413.2" y="686" width="1.5" height="116" fill="url(#ss)" opacity="0.16"/><rect x="922.1" y="714" width="2.4" height="88" fill="url(#ss)" opacity="0.12"/><rect x="973.6" y="719" width="1.5" height="83" fill="url(#ss)" opacity="0.18"/><rect x="754.7" y="733" width="1.9" height="69" fill="url(#ss)" opacity="0.19"/><rect x="1349.2" y="700" width="1.6" height="102" fill="url(#ss)" opacity="0.10"/><rect x="681.2" y="676" width="1.2" height="126" fill="url(#ss)" opacity="0.11"/><rect x="312.1" y="710" width="2.3" height="92" fill="url(#ss)" opacity="0.20"/><rect x="1100.8" y="752" width="1.2" height="50" fill="url(#ss)" opacity="0.15"/><rect x="553.4" y="716" width="1.6" height="86" fill="url(#ss)" opacity="0.18"/><rect x="897.2" y="722" width="1.4" height="80" fill="url(#ss)" opacity="0.09"/><rect x="875.5" y="688" width="1.5" height="114" fill="url(#ss)" opacity="0.19"/><rect x="672.8" y="680" width="1.2" height="122" fill="url(#ss)" opacity="0.16"/><rect x="441.2" y="637" width="1.9" height="165" fill="url(#ss)" opacity="0.13"/><rect x="637.2" y="673" width="1.0" height="129" fill="url(#ss)" opacity="0.16"/><rect x="1209.7" y="654" width="1.4" height="148" fill="url(#ss)" opacity="0.13"/><rect x="908.9" y="673" width="2.1" height="129" fill="url(#ss)" opacity="0.23"/><rect x="296.0" y="675" width="1.0" height="127" fill="url(#ss)" opacity="0.15"/><rect x="863.9" y="665" width="1.7" height="137" fill="url(#ss)" opacity="0.23"/><rect x="441.1" y="705" width="1.3" height="97" fill="url(#ss)" opacity="0.21"/><rect x="792.9" y="633" width="2.2" height="169" fill="url(#ss)" opacity="0.18"/><rect x="430.1" y="695" width="1.4" height="107" fill="url(#ss)" opacity="0.13"/><rect x="1256.6" y="711" width="2.0" height="91" fill="url(#ss)" opacity="0.11"/><rect x="1330.7" y="671" width="1.6" height="131" fill="url(#ss)" opacity="0.18"/><rect x="648.6" y="670" width="2.3" height="132" fill="url(#ss)" opacity="0.15"/><rect x="585.6" y="744" width="1.5" height="58" fill="url(#ss)" opacity="0.15"/><rect x="857.0" y="722" width="1.0" height="80" fill="url(#ss)" opacity="0.17"/><rect x="1012.8" y="701" width="1.8" height="101" fill="url(#ss)" opacity="0.16"/><rect x="749.0" y="693" width="2.1" height="109" fill="url(#ss)" opacity="0.19"/><rect x="259.0" y="703" width="1.9" height="99" fill="url(#ss)" opacity="0.15"/><rect x="1168.1" y="720" width="1.2" height="82" fill="url(#ss)" opacity="0.16"/><rect x="1028.7" y="710" width="1.7" height="92" fill="url(#ss)" opacity="0.16"/><rect x="721.1" y="678" width="1.0" height="124" fill="url(#ss)" opacity="0.22"/><rect x="718.4" y="633" width="1.9" height="169" fill="url(#ss)" opacity="0.16"/><rect x="431.0" y="710" width="1.4" height="92" fill="url(#ss)" opacity="0.22"/><rect x="660.4" y="726" width="1.9" height="76" fill="url(#ss)" opacity="0.12"/><rect x="1149.1" y="694" width="1.3" height="108" fill="url(#ss)" opacity="0.11"/><rect x="1225.3" y="724" width="1.8" height="78" fill="url(#ss)" opacity="0.16"/><rect x="506.7" y="713" width="1.2" height="89" fill="url(#ss)" opacity="0.14"/><rect x="1233.2" y="649" width="2.4" height="153" fill="url(#ss)" opacity="0.10"/><rect x="719.9" y="683" width="1.1" height="119" fill="url(#ss)" opacity="0.24"/><rect x="191.2" y="740" width="1.9" height="7" fill="#000" opacity="0.14"/><rect x="969.1" y="736" width="1.3" height="4" fill="#000" opacity="0.12"/><rect x="441.6" y="771" width="1.4" height="5" fill="#000" opacity="0.19"/><rect x="939.2" y="739" width="1.8" height="4" fill="#000" opacity="0.22"/><rect x="257.2" y="756" width="1.8" height="8" fill="#000" opacity="0.10"/><rect x="1284.2" y="715" width="1.6" height="7" fill="#000" opacity="0.17"/><rect x="1294.3" y="783" width="1.9" height="8" fill="#000" opacity="0.11"/><rect x="560.7" y="763" width="1.7" height="10" fill="#000" opacity="0.14"/><rect x="1074.9" y="793" width="1.6" height="8" fill="#000" opacity="0.16"/><rect x="734.2" y="719" width="1.1" height="7" fill="#000" opacity="0.21"/><rect x="784.2" y="764" width="1.1" height="9" fill="#000" opacity="0.13"/><rect x="751.8" y="795" width="1.3" height="5" fill="#000" opacity="0.20"/><rect x="779.8" y="689" width="1.6" height="5" fill="#000" opacity="0.16"/><rect x="452.9" y="678" width="1.6" height="6" fill="#000" opacity="0.18"/><rect x="392.1" y="720" width="1.6" height="6" fill="#000" opacity="0.18"/><rect x="1138.6" y="690" width="1.4" height="5" fill="#000" opacity="0.18"/><rect x="1339.8" y="764" width="1.7" height="4" fill="#000" opacity="0.14"/><rect x="642.2" y="683" width="1.1" height="5" fill="#000" opacity="0.13"/><rect x="457.6" y="710" width="1.2" height="4" fill="#000" opacity="0.17"/><rect x="509.9" y="769" width="1.3" height="4" fill="#000" opacity="0.21"/><rect x="411.2" y="685" width="1.5" height="5" fill="#000" opacity="0.13"/><rect x="702.8" y="693" width="1.5" height="3" fill="#000" opacity="0.16"/><rect x="640.0" y="717" width="2.0" height="6" fill="#000" opacity="0.19"/><rect x="177.6" y="761" width="1.1" height="4" fill="#000" opacity="0.21"/><rect x="544.4" y="757" width="1.2" height="7" fill="#000" opacity="0.18"/><rect x="453.6" y="737" width="1.9" height="5" fill="#000" opacity="0.13"/><rect x="238.2" y="763" width="1.7" height="9" fill="#000" opacity="0.20"/><rect x="916.1" y="768" width="1.8" height="8" fill="#000" opacity="0.20"/><rect x="903.3" y="749" width="1.4" height="5" fill="#000" opacity="0.14"/><rect x="990.1" y="718" width="1.7" height="8" fill="#000" opacity="0.21"/><rect x="963.9" y="786" width="1.5" height="7" fill="#000" opacity="0.17"/><rect x="355.2" y="726" width="1.5" height="8" fill="#000" opacity="0.12"/><rect x="500.3" y="757" width="1.0" height="4" fill="#000" opacity="0.21"/><rect x="941.7" y="737" width="1.9" height="8" fill="#000" opacity="0.14"/><rect x="1169.4" y="705" width="1.4" height="4" fill="#000" opacity="0.12"/><rect x="341.7" y="685" width="1.9" height="6" fill="#000" opacity="0.22"/><rect x="797.2" y="673" width="1.6" height="9" fill="#000" opacity="0.13"/><rect x="548.3" y="702" width="1.3" height="8" fill="#000" opacity="0.13"/><rect x="719.9" y="717" width="1.7" height="6" fill="#000" opacity="0.19"/><rect x="525.2" y="795" width="1.0" height="9" fill="#000" opacity="0.20"/><rect x="851.0" y="770" width="1.6" height="4" fill="#000" opacity="0.21"/><rect x="698.6" y="755" width="1.8" height="6" fill="#000" opacity="0.11"/><rect x="1157.9" y="759" width="1.7" height="7" fill="#000" opacity="0.22"/><rect x="1314.6" y="767" width="1.3" height="7" fill="#000" opacity="0.15"/><rect x="1051.2" y="719" width="1.8" height="6" fill="#000" opacity="0.18"/><rect x="366.4" y="783" width="1.7" height="4" fill="#000" opacity="0.09"/><rect x="895.4" y="728" width="1.9" height="3" fill="#000" opacity="0.19"/><rect x="1096.0" y="708" width="1.0" height="9" fill="#000" opacity="0.12"/><rect x="1247.0" y="734" width="2.0" height="9" fill="#000" opacity="0.18"/><rect x="628.2" y="788" width="1.5" height="4" fill="#000" opacity="0.20"/><rect x="370.1" y="698" width="1.5" height="6" fill="#000" opacity="0.20"/><rect x="541.5" y="783" width="1.1" height="4" fill="#000" opacity="0.18"/><rect x="957.3" y="786" width="1.1" height="4" fill="#000" opacity="0.16"/><rect x="1308.0" y="758" width="1.8" height="10" fill="#000" opacity="0.12"/><rect x="267.5" y="757" width="1.1" height="4" fill="#000" opacity="0.12"/><rect x="206.6" y="756" width="1.2" height="8" fill="#000" opacity="0.22"/><rect x="1029.8" y="742" width="1.6" height="6" fill="#000" opacity="0.10"/><rect x="979.9" y="758" width="1.3" height="8" fill="#000" opacity="0.20"/><rect x="622.3" y="771" width="1.4" height="6" fill="#000" opacity="0.20"/><rect x="1276.7" y="793" width="1.8" height="8" fill="#000" opacity="0.13"/><rect x="430.5" y="726" width="1.2" height="6" fill="#000" opacity="0.09"/><rect x="471.4" y="688" width="1.8" height="7" fill="#000" opacity="0.18"/><rect x="835.8" y="776" width="1.4" height="6" fill="#000" opacity="0.08"/><rect x="654.0" y="694" width="2.0" height="5" fill="#000" opacity="0.14"/><rect x="331.1" y="726" width="1.5" height="9" fill="#000" opacity="0.19"/><rect x="518.5" y="729" width="1.9" height="8" fill="#000" opacity="0.21"/><rect x="789.4" y="699" width="2.0" height="8" fill="#000" opacity="0.21"/><rect x="1176.2" y="792" width="1.9" height="5" fill="#000" opacity="0.09"/><rect x="1288.4" y="786" width="1.7" height="10" fill="#000" opacity="0.10"/><rect x="1162.1" y="752" width="2.0" height="3" fill="#000" opacity="0.15"/><rect x="1186.0" y="750" width="1.4" height="6" fill="#000" opacity="0.11"/><rect x="933.2" y="748" width="1.5" height="10" fill="#000" opacity="0.15"/><rect x="686.1" y="683" width="1.1" height="7" fill="#000" opacity="0.16"/><rect x="477.5" y="731" width="2.0" height="10" fill="#000" opacity="0.11"/><rect x="681.2" y="718" width="2.0" height="10" fill="#000" opacity="0.15"/><rect x="612.2" y="750" width="1.6" height="8" fill="#000" opacity="0.12"/><rect x="544.2" y="673" width="1.4" height="4" fill="#000" opacity="0.22"/><rect x="1254.5" y="755" width="2.0" height="8" fill="#000" opacity="0.15"/><rect x="1169.5" y="733" width="1.4" height="10" fill="#000" opacity="0.11"/><rect x="617.0" y="712" width="1.6" height="6" fill="#000" opacity="0.12"/><rect x="827.5" y="698" width="1.8" height="9" fill="#000" opacity="0.12"/><rect x="233.8" y="707" width="2.0" height="10" fill="#000" opacity="0.09"/><rect x="897.8" y="750" width="1.7" height="6" fill="#000" opacity="0.10"/><rect x="912.6" y="767" width="1.4" height="5" fill="#000" opacity="0.10"/><rect x="251.8" y="699" width="1.5" height="9" fill="#000" opacity="0.16"/><rect x="860.3" y="721" width="1.4" height="8" fill="#000" opacity="0.17"/><rect x="640.0" y="687" width="1.1" height="6" fill="#000" opacity="0.14"/><rect x="446.2" y="743" width="1.2" height="4" fill="#000" opacity="0.19"/><rect x="827.9" y="788" width="1.0" height="6" fill="#000" opacity="0.18"/><rect x="266.9" y="749" width="1.1" height="7" fill="#000" opacity="0.14"/><rect x="623.8" y="690" width="1.7" height="5" fill="#000" opacity="0.12"/><rect x="637.8" y="758" width="1.6" height="6" fill="#000" opacity="0.19"/><rect x="631.2" y="784" width="1.5" height="7" fill="#000" opacity="0.10"/><rect x="639.6" y="790" width="1.0" height="8" fill="#000" opacity="0.14"/><rect x="991.3" y="789" width="1.6" height="4" fill="#000" opacity="0.17"/><rect x="738.8" y="785" width="1.3" height="7" fill="#000" opacity="0.16"/><rect x="167.8" y="696" width="1.6" height="7" fill="#000" opacity="0.10"/><rect x="523.4" y="759" width="2.0" height="9" fill="#000" opacity="0.18"/><rect x="831.1" y="735" width="1.3" height="10" fill="#000" opacity="0.14"/><rect x="741.2" y="704" width="1.3" height="6" fill="#000" opacity="0.17"/><rect x="339.5" y="707" width="1.5" height="7" fill="#000" opacity="0.16"/><rect x="667.8" y="725" width="1.2" height="8" fill="#000" opacity="0.20"/><rect x="735.1" y="673" width="1.6" height="5" fill="#000" opacity="0.18"/><rect x="720.4" y="697" width="2.0" height="6" fill="#000" opacity="0.21"/><rect x="569.3" y="686" width="1.1" height="4" fill="#000" opacity="0.19"/><rect x="1130.2" y="725" width="1.3" height="3" fill="#000" opacity="0.15"/><rect x="1110.0" y="678" width="1.5" height="4" fill="#000" opacity="0.13"/><rect x="724.3" y="674" width="1.5" height="9" fill="#000" opacity="0.19"/><rect x="1263.1" y="728" width="1.4" height="7" fill="#000" opacity="0.11"/><rect x="239.7" y="743" width="1.2" height="6" fill="#000" opacity="0.15"/><rect x="544.7" y="694" width="1.8" height="6" fill="#000" opacity="0.18"/><rect x="576.5" y="787" width="1.4" height="5" fill="#000" opacity="0.16"/><rect x="691.3" y="774" width="1.2" height="7" fill="#000" opacity="0.12"/><rect x="985.6" y="786" width="1.3" height="9" fill="#000" opacity="0.15"/><rect x="1288.2" y="785" width="2.0" height="3" fill="#000" opacity="0.13"/><rect x="867.6" y="768" width="1.6" height="9" fill="#000" opacity="0.10"/><rect x="427.8" y="780" width="1.7" height="7" fill="#000" opacity="0.09"/><rect x="233.6" y="688" width="1.0" height="6" fill="#000" opacity="0.15"/><rect x="528.0" y="691" width="1.2" height="7" fill="#000" opacity="0.20"/><rect x="527.8" y="706" width="1.5" height="8" fill="#000" opacity="0.12"/><rect x="1295.3" y="708" width="1.7" height="7" fill="#000" opacity="0.13"/><rect x="237.3" y="720" width="1.5" height="4" fill="#000" opacity="0.20"/><rect x="205.8" y="706" width="1.1" height="8" fill="#000" opacity="0.09"/><rect x="1052.4" y="738" width="1.6" height="9" fill="#000" opacity="0.10"/><rect x="1244.2" y="735" width="1.5" height="9" fill="#000" opacity="0.21"/><rect x="1178.4" y="739" width="2.0" height="3" fill="#000" opacity="0.11"/><rect x="515.6" y="738" width="1.6" height="4" fill="#000" opacity="0.12"/><rect x="980.7" y="780" width="1.1" height="4" fill="#000" opacity="0.21"/><rect x="846.9" y="744" width="1.0" height="3" fill="#000" opacity="0.19"/><rect x="881.6" y="795" width="1.5" height="8" fill="#000" opacity="0.11"/><rect x="1057.2" y="777" width="1.8" height="4" fill="#000" opacity="0.17"/><rect x="437.0" y="698" width="2.0" height="10" fill="#000" opacity="0.08"/><rect x="1168.1" y="752" width="1.4" height="7" fill="#000" opacity="0.10"/><rect x="436.4" y="731" width="1.1" height="8" fill="#000" opacity="0.22"/><rect x="1344.0" y="722" width="1.1" height="7" fill="#000" opacity="0.09"/><rect x="1232.3" y="737" width="1.4" height="9" fill="#000" opacity="0.14"/><rect x="1066.1" y="734" width="1.2" height="9" fill="#000" opacity="0.09"/><rect x="200.1" y="715" width="1.5" height="7" fill="#000" opacity="0.17"/><rect x="427.7" y="699" width="1.9" height="9" fill="#000" opacity="0.14"/><rect x="464.7" y="761" width="1.2" height="4" fill="#000" opacity="0.08"/><rect x="199.4" y="715" width="1.4" height="5" fill="#000" opacity="0.20"/><rect x="971.1" y="766" width="1.2" height="9" fill="#000" opacity="0.08"/><rect x="208.2" y="673" width="1.6" height="6" fill="#000" opacity="0.10"/><rect x="1216.4" y="682" width="1.1" height="10" fill="#000" opacity="0.11"/><rect x="553.1" y="712" width="1.6" height="3" fill="#000" opacity="0.16"/><rect x="653.3" y="680" width="1.6" height="5" fill="#000" opacity="0.12"/><rect x="540.4" y="765" width="1.1" height="4" fill="#000" opacity="0.12"/><rect x="1077.4" y="681" width="2.0" height="7" fill="#000" opacity="0.19"/><rect x="791.7" y="722" width="1.1" height="5" fill="#000" opacity="0.11"/><rect x="911.7" y="737" width="1.0" height="3" fill="#000" opacity="0.09"/><rect x="1223.0" y="753" width="2.0" height="8" fill="#000" opacity="0.12"/><rect x="953.3" y="794" width="1.7" height="5" fill="#000" opacity="0.18"/><rect x="756.6" y="683" width="1.9" height="8" fill="#000" opacity="0.08"/><rect x="892.1" y="703" width="1.9" height="8" fill="#000" opacity="0.18"/><rect x="1098.5" y="750" width="1.7" height="6" fill="#000" opacity="0.19"/><rect x="322.6" y="792" width="1.8" height="9" fill="#000" opacity="0.21"/><rect x="648.0" y="790" width="1.6" height="7" fill="#000" opacity="0.20"/><rect x="566.1" y="771" width="1.4" height="9" fill="#000" opacity="0.18"/><rect x="794.7" y="770" width="1.3" height="10" fill="#000" opacity="0.13"/><rect x="861.3" y="696" width="1.5" height="8" fill="#000" opacity="0.21"/><rect x="755.6" y="727" width="1.9" height="7" fill="#000" opacity="0.18"/><rect x="605.1" y="717" width="1.2" height="9" fill="#000" opacity="0.22"/><rect x="328.2" y="711" width="1.2" height="4" fill="#000" opacity="0.12"/><rect x="478.1" y="767" width="1.6" height="10" fill="#000" opacity="0.19"/><rect x="308.6" y="726" width="1.4" height="8" fill="#000" opacity="0.12"/><rect x="275.4" y="734" width="1.1" height="3" fill="#000" opacity="0.17"/><rect x="994.1" y="744" width="1.6" height="4" fill="#000" opacity="0.22"/><rect x="548.0" y="721" width="2.0" height="8" fill="#000" opacity="0.09"/><rect x="1058.2" y="785" width="1.1" height="4" fill="#000" opacity="0.20"/><rect x="221.1" y="698" width="1.4" height="4" fill="#000" opacity="0.10"/><rect x="1249.0" y="727" width="1.1" height="5" fill="#000" opacity="0.19"/><rect x="377.7" y="703" width="1.3" height="7" fill="#000" opacity="0.18"/><rect x="707.2" y="770" width="1.8" height="4" fill="#000" opacity="0.18"/><rect x="765.1" y="779" width="1.3" height="3" fill="#000" opacity="0.21"/><rect x="967.0" y="703" width="1.7" height="7" fill="#000" opacity="0.11"/><rect x="362.0" y="719" width="1.7" height="8" fill="#000" opacity="0.13"/><rect x="1325.9" y="784" width="1.8" height="7" fill="#000" opacity="0.22"/><rect x="1332.2" y="685" width="1.9" height="8" fill="#000" opacity="0.15"/><rect x="513.9" y="748" width="1.7" height="8" fill="#000" opacity="0.17"/><rect x="266.4" y="720" width="1.6" height="5" fill="#000" opacity="0.20"/><rect x="1219.5" y="790" width="1.1" height="7" fill="#000" opacity="0.21"/><rect x="592.6" y="704" width="1.7" height="4" fill="#000" opacity="0.15"/><rect x="361.4" y="692" width="1.8" height="8" fill="#000" opacity="0.18"/><rect x="1257.0" y="691" width="1.9" height="5" fill="#000" opacity="0.13"/><rect x="1313.8" y="675" width="1.7" height="3" fill="#000" opacity="0.15"/><rect x="1290.7" y="741" width="1.7" height="9" fill="#000" opacity="0.10"/><rect x="802.6" y="718" width="1.3" height="9" fill="#000" opacity="0.21"/><rect x="1176.8" y="713" width="1.5" height="9" fill="#000" opacity="0.15"/><rect x="1335.1" y="746" width="1.2" height="6" fill="#000" opacity="0.19"/><rect x="213.8" y="770" width="1.8" height="9" fill="#000" opacity="0.14"/><rect x="216.8" y="762" width="1.1" height="7" fill="#000" opacity="0.08"/><rect x="174.7" y="700" width="1.6" height="8" fill="#000" opacity="0.16"/><rect x="170.3" y="702" width="1.7" height="6" fill="#000" opacity="0.14"/><rect x="1091.0" y="736" width="2.0" height="4" fill="#000" opacity="0.16"/><rect x="558.1" y="677" width="1.7" height="7" fill="#000" opacity="0.17"/><rect x="207.6" y="765" width="2.0" height="6" fill="#000" opacity="0.09"/><rect x="431.6" y="752" width="1.7" height="5" fill="#000" opacity="0.15"/><rect x="663.3" y="781" width="1.8" height="10" fill="#000" opacity="0.20"/><rect x="689.3" y="683" width="1.1" height="4" fill="#000" opacity="0.10"/><rect x="924.4" y="698" width="1.6" height="4" fill="#000" opacity="0.20"/><rect x="216.0" y="757" width="1.8" height="9" fill="#000" opacity="0.16"/><rect x="1053.9" y="724" width="1.1" height="7" fill="#000" opacity="0.15"/><rect x="1114.2" y="773" width="1.7" height="3" fill="#000" opacity="0.21"/><rect x="569.6" y="792" width="1.9" height="8" fill="#000" opacity="0.11"/><rect x="386.1" y="773" width="1.4" height="8" fill="#000" opacity="0.22"/><rect x="609.6" y="790" width="1.5" height="10" fill="#000" opacity="0.15"/><rect x="930.4" y="675" width="1.4" height="7" fill="#000" opacity="0.14"/><rect x="274.1" y="752" width="1.8" height="9" fill="#000" opacity="0.10"/><rect x="897.5" y="748" width="1.8" height="3" fill="#000" opacity="0.12"/><rect x="969.7" y="680" width="1.4" height="8" fill="#000" opacity="0.21"/><rect x="826.3" y="731" width="1.8" height="5" fill="#000" opacity="0.14"/><rect x="245.3" y="676" width="1.2" height="5" fill="#000" opacity="0.15"/><rect x="300.3" y="749" width="1.1" height="5" fill="#000" opacity="0.18"/><rect x="848.4" y="723" width="1.4" height="8" fill="#000" opacity="0.09"/><rect x="906.2" y="755" width="1.3" height="6" fill="#000" opacity="0.12"/><rect x="1322.3" y="731" width="1.1" height="6" fill="#000" opacity="0.14"/><rect x="183.8" y="697" width="1.9" height="7" fill="#000" opacity="0.15"/><rect x="704.8" y="783" width="1.2" height="6" fill="#000" opacity="0.18"/><rect x="833.3" y="784" width="1.8" height="9" fill="#000" opacity="0.20"/><rect x="1185.1" y="698" width="1.5" height="7" fill="#000" opacity="0.21"/><rect x="1098.0" y="676" width="1.6" height="10" fill="#000" opacity="0.12"/><rect x="514.1" y="782" width="1.2" height="4" fill="#000" opacity="0.12"/><rect x="705.2" y="728" width="1.5" height="3" fill="#000" opacity="0.19"/><rect x="641.1" y="714" width="1.1" height="5" fill="#000" opacity="0.18"/><rect x="923.6" y="782" width="1.8" height="9" fill="#000" opacity="0.15"/><rect x="463.2" y="672" width="1.2" height="7" fill="#000" opacity="0.20"/><rect x="315.7" y="763" width="1.5" height="8" fill="#000" opacity="0.17"/><rect x="581.8" y="689" width="1.6" height="6" fill="#000" opacity="0.18"/><rect x="655.5" y="673" width="1.0" height="7" fill="#000" opacity="0.15"/><rect x="846.6" y="707" width="1.5" height="7" fill="#000" opacity="0.10"/><rect x="1257.4" y="729" width="1.8" height="3" fill="#000" opacity="0.16"/><rect x="910.4" y="751" width="1.7" height="10" fill="#000" opacity="0.13"/><rect x="665.3" y="760" width="1.0" height="7" fill="#000" opacity="0.14"/><rect x="1276.9" y="755" width="1.9" height="4" fill="#000" opacity="0.13"/><rect x="536.8" y="696" width="2.0" height="9" fill="#000" opacity="0.12"/><rect x="842.6" y="715" width="1.8" height="8" fill="#000" opacity="0.19"/><rect x="1188.6" y="733" width="1.6" height="5" fill="#000" opacity="0.14"/><rect x="1319.9" y="738" width="1.4" height="5" fill="#000" opacity="0.12"/><rect x="691.3" y="681" width="1.8" height="4" fill="#000" opacity="0.15"/><rect x="1026.3" y="724" width="1.1" height="7" fill="#000" opacity="0.19"/><rect x="340.9" y="728" width="1.8" height="6" fill="#000" opacity="0.09"/><rect x="799.3" y="694" width="1.4" height="8" fill="#000" opacity="0.09"/><rect x="176.6" y="748" width="1.0" height="8" fill="#000" opacity="0.17"/><rect x="785.6" y="758" width="1.7" height="6" fill="#000" opacity="0.12"/><rect x="260.3" y="770" width="1.3" height="10" fill="#000" opacity="0.10"/><rect x="726.5" y="788" width="1.4" height="7" fill="#000" opacity="0.15"/><rect x="523.6" y="706" width="1.5" height="4" fill="#000" opacity="0.09"/><rect x="263.5" y="772" width="1.6" height="7" fill="#000" opacity="0.22"/><rect x="761.5" y="698" width="1.4" height="9" fill="#000" opacity="0.16"/><rect x="355.1" y="730" width="1.8" height="8" fill="#000" opacity="0.12"/><rect x="219.8" y="753" width="1.3" height="8" fill="#000" opacity="0.16"/><rect x="231.2" y="703" width="1.2" height="9" fill="#000" opacity="0.17"/><rect x="1069.6" y="776" width="1.5" height="6" fill="#000" opacity="0.11"/><rect x="584.6" y="694" width="1.7" height="9" fill="#000" opacity="0.11"/><rect x="181.6" y="780" width="1.0" height="5" fill="#000" opacity="0.10"/><rect x="1260.1" y="690" width="1.1" height="4" fill="#000" opacity="0.17"/><rect x="1281.3" y="719" width="1.8" height="9" fill="#000" opacity="0.10"/><rect x="949.8" y="744" width="2.0" height="3" fill="#000" opacity="0.22"/><rect x="246.7" y="698" width="2.0" height="7" fill="#000" opacity="0.15"/><rect x="1262.1" y="774" width="1.9" height="3" fill="#000" opacity="0.12"/><rect x="170.7" y="753" width="1.6" height="49" fill="url(#ss)" opacity="0.61"/><rect x="177" y="664" width="2" height="138" fill="url(#ss)" opacity="0.40"/><rect x="179.5" y="595" width="4" height="207" fill="url(#ss)" opacity="0.48"/><rect x="180.1" y="704" width="4.8" height="98" fill="url(#ss)" opacity="0.90"/><rect x="181.3" y="728" width="2.4" height="74" fill="url(#sc)" opacity="0.51"/><rect x="185" y="736" width="2" height="66" fill="url(#ss)" opacity="0.71"/><rect x="197.5" y="731" width="2" height="71" fill="url(#ss)" opacity="0.68"/><rect x="204" y="746" width="2" height="56" fill="url(#ss)" opacity="0.72"/><rect x="211.7" y="754" width="1.6" height="48" fill="url(#ss)" opacity="0.67"/><rect x="189.2" y="723" width="1.6" height="79" fill="url(#ss)" opacity="0.45"/><rect x="221.2" y="764" width="1.6" height="38" fill="url(#ss)" opacity="0.34"/><rect x="235.2" y="769" width="1.6" height="33" fill="url(#ss)" opacity="0.38"/><rect x="271.7" y="647" width="1.6" height="155" fill="url(#ss)" opacity="0.60"/><rect x="273.4" y="725" width="1.2" height="77" fill="url(#ss)" opacity="0.55"/><rect x="318.4" y="712" width="2.4" height="90" fill="url(#ss)" opacity="0.89"/><rect x="319" y="734" width="1.2" height="68" fill="url(#sc)" opacity="0.50"/><rect x="331.4" y="771" width="1.2" height="31" fill="url(#ss)" opacity="0.33"/><rect x="344.4" y="775" width="1.2" height="27" fill="url(#ss)" opacity="0.36"/><rect x="377.2" y="760" width="1.6" height="42" fill="url(#ss)" opacity="0.58"/><rect x="383.7" y="758" width="1.6" height="44" fill="url(#ss)" opacity="0.62"/><rect x="391.4" y="771" width="1.2" height="31" fill="url(#ss)" opacity="0.39"/><rect x="407.4" y="770" width="1.2" height="32" fill="url(#ss)" opacity="0.36"/><rect x="424.9" y="727" width="1.6" height="75" fill="url(#ss)" opacity="0.55"/><rect x="432.2" y="755" width="1.6" height="47" fill="url(#ss)" opacity="0.54"/><rect x="436.1" y="748" width="2.8" height="54" fill="url(#ss)" opacity="0.95"/><rect x="436.8" y="761" width="1.4" height="41" fill="url(#sc)" opacity="0.56"/><rect x="440.2" y="759" width="1.6" height="43" fill="url(#ss)" opacity="0.66"/><rect x="447.2" y="760" width="1.6" height="42" fill="url(#ss)" opacity="0.55"/><rect x="451.2" y="762" width="1.6" height="40" fill="url(#ss)" opacity="0.68"/><rect x="464" y="724" width="2" height="78" fill="url(#ss)" opacity="0.91"/><rect x="464.5" y="744" width="1" height="58" fill="url(#sc)" opacity="0.52"/><rect x="471.4" y="764" width="1.2" height="38" fill="url(#ss)" opacity="0.37"/><rect x="477.8" y="716" width="2.4" height="86" fill="url(#ss)" opacity="1.00"/><rect x="478.4" y="738" width="1.2" height="64" fill="url(#sc)" opacity="0.69"/><rect x="489" y="733" width="2" height="69" fill="url(#ss)" opacity="0.78"/><rect x="492.2" y="740" width="1.6" height="62" fill="url(#ss)" opacity="0.71"/><rect x="495" y="734" width="2" height="68" fill="url(#ss)" opacity="0.79"/><rect x="495.5" y="751" width="1" height="51" fill="url(#sc)" opacity="0.40"/><rect x="502.4" y="766" width="1.2" height="36" fill="url(#ss)" opacity="0.41"/><rect x="511.4" y="769" width="1.2" height="33" fill="url(#ss)" opacity="0.45"/><rect x="524.4" y="771" width="1.2" height="31" fill="url(#ss)" opacity="0.32"/><rect x="536.2" y="726" width="1.6" height="76" fill="url(#ss)" opacity="0.61"/><rect x="539.8" y="712" width="2.4" height="90" fill="url(#ss)" opacity="0.69"/><rect x="544.5" y="717" width="2" height="85" fill="url(#ss)" opacity="0.60"/><rect x="550.4" y="756" width="1.2" height="46" fill="url(#ss)" opacity="0.37"/><rect x="559.4" y="771" width="1.2" height="31" fill="url(#ss)" opacity="0.38"/><rect x="583.4" y="774" width="1.2" height="28" fill="url(#ss)" opacity="0.58"/><rect x="595.4" y="776" width="1.2" height="26" fill="url(#ss)" opacity="0.32"/><rect x="609.4" y="771" width="1.2" height="31" fill="url(#ss)" opacity="0.41"/><rect x="618.2" y="736" width="1.6" height="66" fill="url(#ss)" opacity="0.58"/><rect x="627.4" y="771" width="1.2" height="31" fill="url(#ss)" opacity="0.39"/><rect x="639.4" y="777" width="1.2" height="25" fill="url(#ss)" opacity="0.34"/><rect x="651.4" y="768" width="1.2" height="34" fill="url(#ss)" opacity="0.44"/><rect x="665.1" y="766" width="1.2" height="36" fill="url(#ss)" opacity="0.64"/><rect x="675.4" y="769" width="1.2" height="33" fill="url(#ss)" opacity="0.46"/><rect x="685.2" y="763" width="1.6" height="39" fill="url(#ss)" opacity="0.60"/><rect x="695.2" y="753" width="1.6" height="49" fill="url(#ss)" opacity="0.52"/><rect x="700.8" y="722" width="2.4" height="80" fill="url(#ss)" opacity="0.89"/><rect x="701.4" y="742" width="1.2" height="60" fill="url(#sc)" opacity="0.50"/><rect x="705" y="725" width="2" height="77" fill="url(#ss)" opacity="1.00"/><rect x="705.5" y="744" width="1" height="58" fill="url(#sc)" opacity="0.73"/><rect x="709.3" y="722" width="2.4" height="80" fill="url(#ss)" opacity="0.92"/><rect x="709.9" y="742" width="1.2" height="60" fill="url(#sc)" opacity="0.53"/><rect x="714.4" y="745" width="1.2" height="57" fill="url(#ss)" opacity="0.48"/><rect x="717.2" y="761" width="1.6" height="41" fill="url(#ss)" opacity="0.73"/><rect x="725.4" y="765" width="1.2" height="37" fill="url(#ss)" opacity="0.42"/><rect x="733.2" y="757" width="1.6" height="45" fill="url(#ss)" opacity="0.75"/><rect x="737.2" y="756" width="1.6" height="46" fill="url(#ss)" opacity="0.64"/><rect x="744.4" y="766" width="1.2" height="36" fill="url(#ss)" opacity="0.51"/><rect x="751.2" y="745" width="1.6" height="57" fill="url(#ss)" opacity="0.56"/><rect x="754.8" y="667" width="3.2" height="135" fill="url(#ss)" opacity="1.00"/><rect x="755.6" y="701" width="1.6" height="101" fill="url(#sc)" opacity="0.87"/><rect x="760.2" y="746" width="1.6" height="56" fill="url(#ss)" opacity="0.58"/><rect x="765.2" y="734" width="1.6" height="68" fill="url(#ss)" opacity="0.42"/><rect x="769.2" y="740" width="1.6" height="62" fill="url(#ss)" opacity="0.48"/><rect x="772.6" y="716" width="2" height="86" fill="url(#ss)" opacity="1.00"/><rect x="773.1" y="737" width="1" height="65" fill="url(#sc)" opacity="0.71"/><rect x="778" y="716" width="2" height="86" fill="url(#ss)" opacity="0.89"/><rect x="778.5" y="737" width="1" height="65" fill="url(#sc)" opacity="0.50"/><rect x="783.5" y="718" width="2" height="84" fill="url(#ss)" opacity="1.00"/><rect x="784" y="739" width="1" height="63" fill="url(#sc)" opacity="0.70"/><rect x="788.2" y="745" width="1.6" height="57" fill="url(#ss)" opacity="0.49"/><rect x="793.2" y="750" width="1.6" height="52" fill="url(#ss)" opacity="0.52"/><rect x="800.2" y="749" width="1.6" height="53" fill="url(#ss)" opacity="0.43"/><rect x="807.2" y="745" width="1.6" height="57" fill="url(#ss)" opacity="0.55"/><rect x="811.4" y="759" width="1.2" height="43" fill="url(#ss)" opacity="0.43"/><rect x="815.2" y="745" width="1.6" height="57" fill="url(#ss)" opacity="0.68"/><rect x="821.2" y="750" width="1.6" height="52" fill="url(#ss)" opacity="0.49"/><rect x="826.2" y="746" width="1.6" height="56" fill="url(#ss)" opacity="0.62"/><rect x="829.8" y="724" width="2.4" height="78" fill="url(#ss)" opacity="0.98"/><rect x="830.4" y="744" width="1.2" height="58" fill="url(#sc)" opacity="0.59"/><rect x="833.6" y="716" width="2.8" height="86" fill="url(#ss)" opacity="1.00"/><rect x="834.3" y="738" width="1.4" height="64" fill="url(#sc)" opacity="0.68"/><rect x="837.8" y="724" width="2.4" height="78" fill="url(#ss)" opacity="0.79"/><rect x="838.4" y="744" width="1.2" height="58" fill="url(#sc)" opacity="0.40"/><rect x="842" y="728" width="2" height="74" fill="url(#ss)" opacity="0.79"/><rect x="842.5" y="747" width="1" height="55" fill="url(#sc)" opacity="0.40"/><rect x="846" y="708" width="2" height="94" fill="url(#ss)" opacity="0.75"/><rect x="849.6" y="708" width="2.8" height="94" fill="url(#ss)" opacity="1.00"/><rect x="850.3" y="731" width="1.4" height="71" fill="url(#sc)" opacity="0.67"/><rect x="854" y="716" width="2" height="86" fill="url(#ss)" opacity="0.86"/><rect x="854.5" y="738" width="1" height="64" fill="url(#sc)" opacity="0.47"/><rect x="858.2" y="736" width="1.6" height="66" fill="url(#ss)" opacity="0.62"/><rect x="860.2" y="746" width="1.6" height="56" fill="url(#ss)" opacity="0.67"/><rect x="865.2" y="747" width="1.6" height="55" fill="url(#ss)" opacity="0.76"/><rect x="869.2" y="745" width="1.6" height="57" fill="url(#ss)" opacity="0.65"/><rect x="875.4" y="761" width="1.2" height="41" fill="url(#ss)" opacity="0.40"/><rect x="883.4" y="767" width="1.2" height="35" fill="url(#ss)" opacity="0.38"/><rect x="891.4" y="766" width="1.2" height="36" fill="url(#ss)" opacity="0.39"/><rect x="899.2" y="765" width="1.6" height="37" fill="url(#ss)" opacity="0.68"/><rect x="903.2" y="767" width="1.6" height="35" fill="url(#ss)" opacity="0.65"/><rect x="911.4" y="770" width="1.2" height="32" fill="url(#ss)" opacity="0.36"/><rect x="921.5" y="758" width="2" height="44" fill="url(#ss)" opacity="0.70"/><rect x="930.4" y="765" width="1.2" height="37" fill="url(#ss)" opacity="0.38"/><rect x="939.9" y="738" width="1.6" height="64" fill="url(#ss)" opacity="0.62"/><rect x="949.4" y="772" width="1.2" height="30" fill="url(#ss)" opacity="0.43"/><rect x="958.2" y="766" width="1.6" height="36" fill="url(#ss)" opacity="0.74"/><rect x="967.4" y="771" width="1.2" height="31" fill="url(#ss)" opacity="0.45"/><rect x="974.4" y="769" width="1.2" height="33" fill="url(#ss)" opacity="0.45"/><rect x="980.6" y="755" width="1.6" height="47" fill="url(#ss)" opacity="0.70"/><rect x="985.2" y="745" width="1.6" height="57" fill="url(#ss)" opacity="0.50"/><rect x="991" y="739" width="2" height="63" fill="url(#ss)" opacity="0.69"/><rect x="995.2" y="750" width="1.6" height="52" fill="url(#ss)" opacity="0.54"/><rect x="1003.4" y="763" width="1.2" height="39" fill="url(#ss)" opacity="0.42"/><rect x="1012.4" y="764" width="1.2" height="38" fill="url(#ss)" opacity="0.37"/><rect x="1021.2" y="740" width="1.6" height="62" fill="url(#ss)" opacity="0.77"/><rect x="1027.6" y="729" width="2" height="73" fill="url(#ss)" opacity="0.81"/><rect x="1028.1" y="747" width="1" height="55" fill="url(#sc)" opacity="0.42"/><rect x="1031.2" y="746" width="1.6" height="56" fill="url(#ss)" opacity="0.66"/><rect x="1034.8" y="703" width="2.4" height="99" fill="url(#ss)" opacity="1.00"/><rect x="1035.4" y="728" width="1.2" height="74" fill="url(#sc)" opacity="0.67"/><rect x="1040.2" y="750" width="1.6" height="52" fill="url(#ss)" opacity="0.54"/><rect x="1049.4" y="764" width="1.2" height="38" fill="url(#ss)" opacity="0.37"/><rect x="1059.2" y="762" width="1.6" height="40" fill="url(#ss)" opacity="0.46"/><rect x="1070.6" y="738" width="2.4" height="64" fill="url(#ss)" opacity="1.00"/><rect x="1071.2" y="754" width="1.2" height="48" fill="url(#sc)" opacity="0.63"/><rect x="1079.4" y="765" width="1.2" height="37" fill="url(#ss)" opacity="0.44"/><rect x="1085.4" y="761" width="1.2" height="41" fill="url(#ss)" opacity="0.48"/><rect x="1094.4" y="771" width="1.2" height="31" fill="url(#ss)" opacity="0.44"/><rect x="1103.4" y="770" width="1.2" height="32" fill="url(#ss)" opacity="0.39"/><rect x="1112.2" y="757" width="1.6" height="45" fill="url(#ss)" opacity="0.56"/><rect x="1121.4" y="770" width="1.2" height="32" fill="url(#ss)" opacity="0.44"/><rect x="1132.4" y="772" width="1.2" height="30" fill="url(#ss)" opacity="0.36"/><rect x="1144.4" y="771" width="1.2" height="31" fill="url(#ss)" opacity="0.44"/><rect x="1153.8" y="765" width="1.6" height="37" fill="url(#ss)" opacity="0.50"/><rect x="1161.4" y="768" width="1.2" height="34" fill="url(#ss)" opacity="0.39"/><rect x="1167.9" y="774" width="1.6" height="28" fill="url(#ss)" opacity="0.66"/><rect x="1173.4" y="781" width="1.2" height="21" fill="url(#ss)" opacity="0.86"/><rect x="1173.7" y="786" width="1" height="16" fill="url(#sc)" opacity="0.47"/><rect x="1179.4" y="771" width="1.2" height="31" fill="url(#ss)" opacity="0.41"/><rect x="1185.2" y="761" width="1.6" height="41" fill="url(#ss)" opacity="0.49"/><rect x="1194.4" y="770" width="1.2" height="32" fill="url(#ss)" opacity="0.40"/><rect x="1203.4" y="771" width="1.2" height="31" fill="url(#ss)" opacity="0.44"/><rect x="1212.4" y="767" width="1.2" height="35" fill="url(#ss)" opacity="0.51"/><rect x="1223.1" y="709" width="2.4" height="93" fill="url(#ss)" opacity="1.00"/><rect x="1223.7" y="733" width="1.2" height="69" fill="url(#sc)" opacity="0.68"/><rect x="1227.8" y="754" width="1.6" height="48" fill="url(#ss)" opacity="0.72"/><rect x="1233.2" y="754" width="1.6" height="48" fill="url(#ss)" opacity="0.75"/><rect x="1240.4" y="770" width="1.2" height="32" fill="url(#ss)" opacity="0.40"/><rect x="1247.4" y="769" width="1.2" height="33" fill="url(#ss)" opacity="0.44"/><rect x="1254.2" y="744" width="1.6" height="58" fill="url(#ss)" opacity="0.75"/><rect x="1259.2" y="752" width="1.6" height="50" fill="url(#ss)" opacity="0.70"/><rect x="1264.9" y="747" width="1.6" height="55" fill="url(#ss)" opacity="0.71"/><rect x="1271.4" y="765" width="1.2" height="37" fill="url(#ss)" opacity="0.45"/><rect x="1278" y="735" width="1.6" height="67" fill="url(#ss)" opacity="0.87"/><rect x="1278.4" y="752" width="1" height="50" fill="url(#sc)" opacity="0.48"/><rect x="1282.2" y="697" width="1.6" height="105" fill="url(#ss)" opacity="1.00"/><rect x="1282.6" y="723" width="1" height="79" fill="url(#sc)" opacity="0.83"/><rect x="1288.2" y="750" width="1.6" height="52" fill="url(#ss)" opacity="0.51"/><rect x="1292.8" y="723" width="2.4" height="79" fill="url(#ss)" opacity="0.65"/><rect x="1295.5" y="711" width="3.6" height="91" fill="url(#ss)" opacity="0.96"/><rect x="1296.4" y="734" width="1.8" height="68" fill="url(#sc)" opacity="0.57"/><rect x="1300" y="735" width="2" height="67" fill="url(#ss)" opacity="0.70"/><rect x="1305.4" y="762" width="1.2" height="40" fill="url(#ss)" opacity="0.43"/><rect x="1310.2" y="756" width="1.6" height="46" fill="url(#ss)" opacity="0.59"/><rect x="1315.2" y="755" width="1.6" height="47" fill="url(#ss)" opacity="0.67"/><rect x="1320.2" y="755" width="1.6" height="47" fill="url(#ss)" opacity="0.63"/><rect x="1325.9" y="756" width="1.6" height="46" fill="url(#ss)" opacity="0.65"/><rect x="1333.4" y="767" width="1.2" height="35" fill="url(#ss)" opacity="0.44"/><rect x="1340.4" y="767" width="1.2" height="35" fill="url(#ss)" opacity="0.36"/><rect x="1346.2" y="767" width="1.6" height="35" fill="url(#ss)" opacity="0.43"/><path d="M271.3 663.0 L271.4 667.8 L274.1 671.4 L274.0 677.6 L273.0 684.3 L272.5 691.2 L273.0 694.7 L271.6 700.5 L270.8 704.6 L273.7 709.4 L270.9 713.9 L272.1 718.3 L273.5 722.2 L270.8 728.6 L273.8 734.7 L273.3 741.1 L273.6 745.0 L273.8 749.6" fill="none" stroke="#e0e0e0" stroke-width="1.500" stroke-dasharray="5 1" opacity="0.55"/><path d="M275.5 750.0 L272.2 755.6 L274.0 759.6 L271.9 765.7 L275.1 772.3 L275.5 775.3 L271.9 779.4 L276.3 783.4" fill="none" stroke="#e0e0e0" stroke-width="1.500" stroke-dasharray="5 1" opacity="0.40"/><path d="M620.2 645.0 L619.0 650.1 L620.2 655.4 L620.0 661.2 L619.8 664.7 L619.7 668.3 L619.2 674.8 L619.8 678.4 L619.5 682.6 L620.4 688.4" fill="none" stroke="#e0e0e0" stroke-width="1.500" stroke-dasharray="5 2" opacity="0.50"/><path d="M741.2 695.0 L740.9 701.2 L740.3 704.7 L741.6 709.2 L741.5 714.6 L740.0 721.5 L741.8 725.9 L741.2 732.5 L740.2 736.3 L741.7 742.8 L741.5 748.9" fill="none" stroke="#e0e0e0" stroke-width="1.500" stroke-dasharray="3 1" opacity="0.50"/><path d="M745.9 737.0 L746.3 741.2 L745.5 744.3 L745.9 749.7 L744.1 753.3 L746.2 759.0 L747.8 763.8" fill="none" stroke="#e0e0e0" stroke-width="1.500" stroke-dasharray="3 1" opacity="0.40"/><path d="M850.1 675.0 L849.0 678.9 L850.0 684.1 L848.6 687.8 L848.6 694.2 L850.1 699.4 L848.6 706.1 L848.8 709.7 L849.4 715.5" fill="none" stroke="#e0e0e0" stroke-width="1.500" stroke-dasharray="4 2" opacity="0.50"/><path d="M989.9 650.0 L991.3 657.0 L990.6 660.9 L994.7 664.7 L990.0 668.0 L990.9 671.4 L990.3 677.3 L990.6 682.1 L990.1 685.4 L992.5 690.9 L994.1 696.8 L991.4 703.2 L990.6 708.3 L994.1 714.3 L992.7 718.1 L992.8 722.7 L992.3 728.3 L990.3 735.1 L991.1 738.8 L992.2 742.1 L990.9 748.6 L992.7 752.5 L989.6 758.0 L992.4 764.3" fill="none" stroke="#e0e0e0" stroke-width="1.500" stroke-dasharray="4 2" opacity="0.50"/><path d="M985.3 675.0 L986.1 679.9 L985.3 683.7 L986.9 687.3 L986.9 692.2 L985.5 699.0 L988.1 705.2 L986.8 708.9 L986.5 713.9 L985.6 719.3 L987.1 724.2 L983.8 727.3 L987.9 731.5 L986.4 737.6 L985.5 744.2" fill="none" stroke="#e0e0e0" stroke-width="1.500" stroke-dasharray="3 1" opacity="0.35"/><path d="M1114.2 680.0 L1111.8 684.6 L1114.7 691.3 L1112.5 695.8 L1111.6 700.5 L1111.1 704.8 L1110.7 711.7 L1114.7 715.5 L1110.8 721.6 L1115.4 726.9 L1111.1 733.4 L1114.8 736.7 L1112.7 743.4 L1110.9 749.5 L1113.1 754.1" fill="none" stroke="#e0e0e0" stroke-width="1.500" stroke-dasharray="5 2" opacity="0.50"/><path d="M1109.5 695.0 L1109.8 698.4 L1107.2 701.5 L1106.6 705.3 L1105.8 710.3 L1106.6 717.2 L1107.3 722.9 L1108.3 729.6 L1109.3 734.6 L1107.8 739.8 L1109.4 743.5" fill="none" stroke="#e0e0e0" stroke-width="1.500" stroke-dasharray="4 1" opacity="0.35"/><path d="M1064.7 685.0 L1062.3 689.9 L1058.7 693.5 L1057.7 699.0 L1064.7 706.0 L1062.1 711.6 L1062.6 715.7 L1059.6 722.1" fill="none" stroke="#e0e0e0" stroke-width="1.500" stroke-dasharray="5 2" opacity="0.40"/><path d="M1185.0 675.0 L1184.7 678.2 L1186.5 683.3 L1185.1 689.7 L1185.7 693.4 L1185.0 697.0 L1186.7 702.0 L1184.7 705.4 L1186.1 710.3 L1186.6 714.0 L1187.9 719.3 L1186.5 726.1 L1186.1 729.4 L1185.1 733.5 L1186.8 736.8 L1185.1 742.4" fill="none" stroke="#e0e0e0" stroke-width="1.500" stroke-dasharray="5 2" opacity="0.40"/><path d="M1214.3 680.0 L1215.5 684.0 L1213.4 689.9 L1213.1 693.3 L1212.0 696.4 L1211.5 702.5 L1212.6 706.4 L1211.8 713.2 L1213.6 717.9 L1213.7 721.1 L1212.5 724.4" fill="none" stroke="#e0e0e0" stroke-width="1.500" stroke-dasharray="3 2" opacity="0.50"/><path d="M1298.1 645.0 L1296.1 649.0 L1296.9 653.7 L1296.9 658.5 L1297.6 663.2 L1297.1 667.1 L1296.4 672.2 L1297.6 675.5 L1297.3 679.5 L1295.8 684.8 L1297.1 688.6 L1298.1 692.8 L1297.3 696.8 L1296.7 702.5 L1296.9 706.6 L1296.5 712.4" fill="none" stroke="#e0e0e0" stroke-width="1.500" stroke-dasharray="5 2" opacity="0.50"/><path d="M424.5 730.0 L426.5 736.6 L425.2 742.3" fill="none" stroke="#e0e0e0" stroke-width="1.500" stroke-dasharray="5 2" opacity="0.50"/><path d="M541.7 740.0 L542.1 745.2 L542.0 751.0 L542.3 757.9 L544.2 762.2 L538.6 767.0 L537.9 772.9" fill="none" stroke="#e0e0e0" stroke-width="1.500" stroke-dasharray="4 2" opacity="0.35"/><path d="M1146.1 740.0 L1146.5 747.0 L1150.8 750.2 L1149.6 757.1 L1146.2 761.0 L1148.9 764.6" fill="none" stroke="#e0e0e0" stroke-width="1.500" stroke-dasharray="4 1" opacity="0.40"/><ellipse cx="267" cy="780" rx="24" ry="7.5" fill="url(#sr)" opacity="0.84"/><ellipse cx="267" cy="780" rx="19.5" ry="3.75" fill="url(#sr)" opacity="1.00"/><ellipse cx="808" cy="747" rx="18" ry="10.5" fill="url(#sr)" opacity="0.73"/><ellipse cx="853" cy="745" rx="10.5" ry="21" fill="url(#sr)" opacity="1.00"/><ellipse cx="1048" cy="773" rx="16.5" ry="5.25" fill="url(#sr)" opacity="1.00"/><ellipse cx="835" cy="765" rx="13.5" ry="45" fill="url(#sr)" opacity="0.53"/><ellipse cx="272" cy="705" rx="3.75" ry="60" fill="url(#sr)" opacity="0.73"/><ellipse cx="619.5" cy="675" rx="3" ry="27" fill="url(#sr)" opacity="0.63"/><ellipse cx="619" cy="742" rx="4.5" ry="12" fill="url(#sr)" opacity="0.73"/><ellipse cx="992" cy="707" rx="6" ry="82.5" fill="url(#sr)" opacity="0.63"/><ellipse cx="1113" cy="715" rx="5.25" ry="90" fill="url(#sr)" opacity="0.63"/><ellipse cx="1154.6" cy="745" rx="4.5" ry="7.5" fill="url(#sr)" opacity="0.84"/><ellipse cx="1186" cy="750" rx="6" ry="13.5" fill="url(#sr)" opacity="0.73"/><ellipse cx="1213.4" cy="684" rx="4.5" ry="4.5" fill="url(#sr)" opacity="0.95"/><ellipse cx="1213.4" cy="719" rx="4.5" ry="6" fill="url(#sr)" opacity="0.95"/><ellipse cx="400" cy="688" rx="3" ry="3" fill="url(#sr)" opacity="0.84"/><ellipse cx="400" cy="709" rx="3.75" ry="3.75" fill="url(#sr)" opacity="0.84"/><ellipse cx="425.7" cy="738" rx="3.75" ry="7.5" fill="url(#sr)" opacity="0.84"/><ellipse cx="1059" cy="700" rx="12" ry="12" fill="url(#sr)" opacity="0.42"/><ellipse cx="1297" cy="685" rx="4.5" ry="45" fill="url(#sr)" opacity="0.63"/><ellipse cx="778" cy="735" rx="33" ry="112.5" fill="url(#sr)" opacity="0.34"/><ellipse cx="708" cy="745" rx="21" ry="105" fill="url(#sr)" opacity="0.29"/><ellipse cx="183" cy="745" rx="15" ry="135" fill="url(#sr)" opacity="0.32"/><ellipse cx="845" cy="745" rx="45" ry="90" fill="url(#sr)" opacity="0.29"/><ellipse cx="541" cy="755" rx="18" ry="75" fill="url(#sr)" opacity="0.21"/><ellipse cx="1036" cy="745" rx="15" ry="75" fill="url(#sr)" opacity="0.21"/><ellipse cx="1297" cy="745" rx="21" ry="90" fill="url(#sr)" opacity="0.21"/><ellipse cx="1224" cy="755" rx="15" ry="67.5" fill="url(#sr)" opacity="0.17"/></g></g><rect x="165" y="457" width="1186" height="2" fill="#9a9a9a"/><rect x="165" y="459" width="1186" height="2" fill="#3c3c3c"/><path d="M166.5 116V802" stroke="#ffee00" stroke-width="1" stroke-dasharray="1 2"/></svg>
<svg class="a" style="left:0;top:0" width="1400" height="1050" viewBox="0 0 1400 1050"><path d="M1351.5 115V803" stroke="#bdbdbd"/><path d="M165 802.5H1352" stroke="#bdbdbd"/><path d="M1352 451.5H1356" stroke="#e0e0e0"/><path d="M1352 796.5H1356" stroke="#e0e0e0"/><path d="M1352 430.5H1354" stroke="#e0e0e0"/><path d="M1352 775.5H1354" stroke="#e0e0e0"/><path d="M1352 415.5H1354" stroke="#e0e0e0"/><path d="M1352 760.5H1354" stroke="#e0e0e0"/><path d="M1352 404.5H1354" stroke="#e0e0e0"/><path d="M1352 749.5H1354" stroke="#e0e0e0"/><path d="M1352 394.5H1354" stroke="#e0e0e0"/><path d="M1352 739.5H1354" stroke="#e0e0e0"/><path d="M1352 386.5H1354" stroke="#e0e0e0"/><path d="M1352 731.5H1354" stroke="#e0e0e0"/><path d="M1352 379.5H1354" stroke="#e0e0e0"/><path d="M1352 725.5H1354" stroke="#e0e0e0"/><path d="M1352 373.5H1354" stroke="#e0e0e0"/><path d="M1352 718.5H1354" stroke="#e0e0e0"/><path d="M1352 368.5H1356" stroke="#e0e0e0"/><path d="M1352 713.5H1356" stroke="#e0e0e0"/><path d="M1352 332.5H1354" stroke="#e0e0e0"/><path d="M1352 677.5H1354" stroke="#e0e0e0"/><path d="M1352 312.5H1354" stroke="#e0e0e0"/><path d="M1352 656.5H1354" stroke="#e0e0e0"/><path d="M1352 297.5H1354" stroke="#e0e0e0"/><path d="M1352 641.5H1354" stroke="#e0e0e0"/><path d="M1352 285.5H1354" stroke="#e0e0e0"/><path d="M1352 630.5H1354" stroke="#e0e0e0"/><path d="M1352 276.5H1354" stroke="#e0e0e0"/><path d="M1352 620.5H1354" stroke="#e0e0e0"/><path d="M1352 268.5H1354" stroke="#e0e0e0"/><path d="M1352 612.5H1354" stroke="#e0e0e0"/><path d="M1352 261.5H1354" stroke="#e0e0e0"/><path d="M1352 606.5H1354" stroke="#e0e0e0"/><path d="M1352 255.5H1354" stroke="#e0e0e0"/><path d="M1352 599.5H1354" stroke="#e0e0e0"/><path d="M1352 250.5H1356" stroke="#e0e0e0"/><path d="M1352 594.5H1356" stroke="#e0e0e0"/><path d="M1352 214.5H1354" stroke="#e0e0e0"/><path d="M1352 558.5H1354" stroke="#e0e0e0"/><path d="M1352 193.5H1354" stroke="#e0e0e0"/><path d="M1352 537.5H1354" stroke="#e0e0e0"/><path d="M1352 178.5H1354" stroke="#e0e0e0"/><path d="M1352 522.5H1354" stroke="#e0e0e0"/><path d="M1352 167.5H1354" stroke="#e0e0e0"/><path d="M1352 511.5H1354" stroke="#e0e0e0"/><path d="M1352 158.5H1354" stroke="#e0e0e0"/><path d="M1352 501.5H1354" stroke="#e0e0e0"/><path d="M1352 150.5H1354" stroke="#e0e0e0"/><path d="M1352 493.5H1354" stroke="#e0e0e0"/><path d="M1352 143.5H1354" stroke="#e0e0e0"/><path d="M1352 487.5H1354" stroke="#e0e0e0"/><path d="M1352 137.5H1354" stroke="#e0e0e0"/><path d="M1352 480.5H1354" stroke="#e0e0e0"/><path d="M1352 131.5H1356" stroke="#e0e0e0"/><path d="M1352 475.5H1356" stroke="#e0e0e0"/><path d="M166.5 803V809" stroke="#e0e0e0"/><path d="M193.5 803V806" stroke="#e0e0e0"/><path d="M220.5 803V809" stroke="#e0e0e0"/><path d="M247.5 803V806" stroke="#e0e0e0"/><path d="M274.5 803V809" stroke="#e0e0e0"/><path d="M300.5 803V806" stroke="#e0e0e0"/><path d="M327.5 803V809" stroke="#e0e0e0"/><path d="M354.5 803V806" stroke="#e0e0e0"/><path d="M381.5 803V809" stroke="#e0e0e0"/><path d="M408.5 803V806" stroke="#e0e0e0"/><path d="M435.5 803V809" stroke="#e0e0e0"/><path d="M462.5 803V806" stroke="#e0e0e0"/><path d="M489.5 803V809" stroke="#e0e0e0"/><path d="M516.5 803V806" stroke="#e0e0e0"/><path d="M543.5 803V809" stroke="#e0e0e0"/><path d="M570.5 803V806" stroke="#e0e0e0"/><path d="M596.5 803V809" stroke="#e0e0e0"/><path d="M623.5 803V806" stroke="#e0e0e0"/><path d="M650.5 803V809" stroke="#e0e0e0"/><path d="M677.5 803V806" stroke="#e0e0e0"/><path d="M704.5 803V809" stroke="#e0e0e0"/><path d="M731.5 803V806" stroke="#e0e0e0"/><path d="M758.5 803V809" stroke="#e0e0e0"/><path d="M785.5 803V806" stroke="#e0e0e0"/><path d="M812.5 803V809" stroke="#e0e0e0"/><path d="M838.5 803V806" stroke="#e0e0e0"/><path d="M865.5 803V809" stroke="#e0e0e0"/><path d="M892.5 803V806" stroke="#e0e0e0"/><path d="M919.5 803V809" stroke="#e0e0e0"/><path d="M946.5 803V806" stroke="#e0e0e0"/><path d="M973.5 803V809" stroke="#e0e0e0"/><path d="M1000.5 803V806" stroke="#e0e0e0"/><path d="M1027.5 803V809" stroke="#e0e0e0"/><path d="M1054.5 803V806" stroke="#e0e0e0"/><path d="M1081.5 803V809" stroke="#e0e0e0"/><path d="M1108.5 803V806" stroke="#e0e0e0"/><path d="M1134.5 803V809" stroke="#e0e0e0"/><path d="M1161.5 803V806" stroke="#e0e0e0"/><path d="M1188.5 803V809" stroke="#e0e0e0"/><path d="M1215.5 803V806" stroke="#e0e0e0"/><path d="M1242.5 803V809" stroke="#e0e0e0"/><path d="M1269.5 803V806" stroke="#e0e0e0"/><path d="M1296.5 803V809" stroke="#e0e0e0"/><path d="M1323.5 803V806" stroke="#e0e0e0"/><path d="M1350.5 803V809" stroke="#e0e0e0"/></svg><div class="t " style="left:1358.5px;top:114px;font-size:9.5px;letter-spacing:-0.16px;color:#f0f0f0;">Hz (log)</div><div class="t " style="left:1356.3px;top:129.8px;font-size:9.5px;letter-spacing:-0.38px;color:#8e8e8e;">9000</div><div class="t " style="left:1356.3px;top:142.8px;font-size:9.5px;letter-spacing:-0.38px;color:#8e8e8e;">7000</div><div class="t " style="left:1356.3px;top:159.8px;font-size:9.5px;letter-spacing:-0.38px;color:#8e8e8e;">5000</div><div class="t " style="left:1356.3px;top:186.5px;font-size:9.5px;letter-spacing:-0.38px;color:#8e8e8e;">3000</div><div class="t " style="left:1356.3px;top:207px;font-size:9.5px;letter-spacing:-0.38px;color:#8e8e8e;">2000</div><div class="t " style="left:1358.5px;top:242.7px;font-size:9.5px;letter-spacing:-0.38px;color:#f0f0f0;">1000</div><div class="t " style="left:1356.3px;top:261.5px;font-size:9.5px;letter-spacing:-0.38px;color:#8e8e8e;">700</div><div class="t " style="left:1356.3px;top:279px;font-size:9.5px;letter-spacing:-0.38px;color:#8e8e8e;">500</div><div class="t " style="left:1356.3px;top:304.5px;font-size:9.5px;letter-spacing:-0.38px;color:#8e8e8e;">300</div><div class="t " style="left:1356.3px;top:325.5px;font-size:9.5px;letter-spacing:-0.38px;color:#8e8e8e;">200</div><div class="t " style="left:1358.5px;top:361px;font-size:9.5px;letter-spacing:-0.38px;color:#f0f0f0;">100</div><div class="t " style="left:1356.3px;top:372.5px;font-size:9.5px;letter-spacing:-0.38px;color:#8e8e8e;">80</div><div class="t " style="left:1356.3px;top:387.5px;font-size:9.5px;letter-spacing:-0.38px;color:#8e8e8e;">60</div><div class="t " style="left:1356.3px;top:408px;font-size:9.5px;letter-spacing:-0.38px;color:#8e8e8e;">40</div><div class="t " style="left:1356.3px;top:423px;font-size:9.5px;letter-spacing:-0.38px;color:#8e8e8e;">30</div><div class="t " style="left:1358.5px;top:444px;font-size:9.5px;letter-spacing:-0.38px;color:#f0f0f0;">20</div><div class="t " style="left:1358.5px;top:469.5px;font-size:9.5px;letter-spacing:-0.38px;color:#f0f0f0;">10000</div><div class="t " style="left:1356.3px;top:488px;font-size:9.5px;letter-spacing:-0.38px;color:#8e8e8e;">7000</div><div class="t " style="left:1356.3px;top:504.5px;font-size:9.5px;letter-spacing:-0.38px;color:#8e8e8e;">5000</div><div class="t " style="left:1356.3px;top:531px;font-size:9.5px;letter-spacing:-0.38px;color:#8e8e8e;">3000</div><div class="t " style="left:1356.3px;top:552px;font-size:9.5px;letter-spacing:-0.38px;color:#8e8e8e;">2000</div><div class="t " style="left:1358.5px;top:587px;font-size:9.5px;letter-spacing:-0.38px;color:#f0f0f0;">1000</div><div class="t " style="left:1356.3px;top:605.5px;font-size:9.5px;letter-spacing:-0.38px;color:#8e8e8e;">700</div><div class="t " style="left:1356.3px;top:623px;font-size:9.5px;letter-spacing:-0.38px;color:#8e8e8e;">500</div><div class="t " style="left:1356.3px;top:650px;font-size:9.5px;letter-spacing:-0.38px;color:#8e8e8e;">300</div><div class="t " style="left:1356.3px;top:671.5px;font-size:9.5px;letter-spacing:-0.38px;color:#8e8e8e;">200</div><div class="t " style="left:1358.5px;top:706.5px;font-size:9.5px;letter-spacing:-0.38px;color:#f0f0f0;">100</div><div class="t " style="left:1356.3px;top:719.5px;font-size:9.5px;letter-spacing:-0.38px;color:#8e8e8e;">80</div><div class="t " style="left:1356.3px;top:734px;font-size:9.5px;letter-spacing:-0.38px;color:#8e8e8e;">60</div><div class="t " style="left:1356.3px;top:754.5px;font-size:9.5px;letter-spacing:-0.38px;color:#8e8e8e;">40</div><div class="t " style="left:1358.5px;top:769.5px;font-size:9.5px;letter-spacing:-0.38px;color:#f0f0f0;">30</div><div class="t " style="left:1358.5px;top:790px;font-size:9.5px;letter-spacing:-0.16px;color:#f0f0f0;">Hz (log)</div><div class="t " style="left:169px;top:806px;font-size:9.5px;letter-spacing:-0.15px;color:#e6e6e6;">hms</div><div class="t " style="left:1330.5px;top:806px;font-size:9.5px;letter-spacing:-0.15px;color:#e6e6e6;">hms</div><div class="t " style="left:211.45px;top:806px;font-size:9.5px;letter-spacing:-0.20px;color:#e6e6e6;">2:00</div><div class="t " style="left:265.25px;top:806px;font-size:9.5px;letter-spacing:-0.20px;color:#e6e6e6;">4:00</div><div class="t " style="left:319.05px;top:806px;font-size:9.5px;letter-spacing:-0.20px;color:#e6e6e6;">6:00</div><div class="t " style="left:372.85px;top:806px;font-size:9.5px;letter-spacing:-0.20px;color:#e6e6e6;">8:00</div><div class="t " style="left:424.2px;top:806px;font-size:9.5px;letter-spacing:-0.23px;color:#e6e6e6;">10:00</div><div class="t " style="left:478px;top:806px;font-size:9.5px;letter-spacing:-0.23px;color:#e6e6e6;">12:00</div><div class="t " style="left:531.8px;top:806px;font-size:9.5px;letter-spacing:-0.23px;color:#e6e6e6;">14:00</div><div class="t " style="left:585.6px;top:806px;font-size:9.5px;letter-spacing:-0.23px;color:#e6e6e6;">16:00</div><div class="t " style="left:639.4px;top:806px;font-size:9.5px;letter-spacing:-0.23px;color:#e6e6e6;">18:00</div><div class="t " style="left:693.2px;top:806px;font-size:9.5px;letter-spacing:-0.23px;color:#e6e6e6;">20:00</div><div class="t " style="left:747px;top:806px;font-size:9.5px;letter-spacing:-0.23px;color:#e6e6e6;">22:00</div><div class="t " style="left:800.8px;top:806px;font-size:9.5px;letter-spacing:-0.23px;color:#e6e6e6;">24:00</div><div class="t " style="left:854.6px;top:806px;font-size:9.5px;letter-spacing:-0.23px;color:#e6e6e6;">26:00</div><div class="t " style="left:908.4px;top:806px;font-size:9.5px;letter-spacing:-0.23px;color:#e6e6e6;">28:00</div><div class="t " style="left:962.2px;top:806px;font-size:9.5px;letter-spacing:-0.23px;color:#e6e6e6;">30:00</div><div class="t " style="left:1016px;top:806px;font-size:9.5px;letter-spacing:-0.23px;color:#e6e6e6;">32:00</div><div class="t " style="left:1069.8px;top:806px;font-size:9.5px;letter-spacing:-0.23px;color:#e6e6e6;">34:00</div><div class="t " style="left:1123.6px;top:806px;font-size:9.5px;letter-spacing:-0.23px;color:#e6e6e6;">36:00</div><div class="t " style="left:1177.4px;top:806px;font-size:9.5px;letter-spacing:-0.23px;color:#e6e6e6;">38:00</div><div class="t " style="left:1231.2px;top:806px;font-size:9.5px;letter-spacing:-0.23px;color:#e6e6e6;">40:00</div><div class="t " style="left:1285px;top:806px;font-size:9.5px;letter-spacing:-0.23px;color:#e6e6e6;">42:00</div>
<div class="a gap" style="left:0;top:830px;width:1400px;height:25px"></div><div class="a gap" style="left:0;top:923px;width:1400px;height:25px"></div><svg class="a" style="left:2px;top:839px;overflow:visible" width="670" height="84" viewBox="0 0 670 84"><defs><linearGradient id="pg2" x1="0" y1="0" x2="0" y2="21" gradientUnits="userSpaceOnUse"><stop offset="0" stop-color="#c8c8c8"/><stop offset="1" stop-color="#a7a7a7"/></linearGradient></defs><path d="M0 84 V16 Q0 15 2 15 H5 Q7 15 7 12 V4 Q7 0 11 0 H78 C84.75 0 85.5 15 93 15 H634 C640.5 15 641 -1.5 648 -1.5 H667 Q670 -1.5 670 1.5 V84 Z" fill="url(#pg2)"/><path d="M0 84 V16 Q0 15 2 15 H5 Q7 15 7 12 V4 Q7 0 11 0 H78 C84.75 0 85.5 15 93 15 H634 C640.5 15 641 -1.5 648 -1.5 H667 Q670 -1.5 670 1.5 V84 Z" fill="none" stroke="#dadada" stroke-width="1" transform="translate(0,0.5)" clip-path="inset(-3px 1px 67px 1px)"/><rect x="10" y="4" width="2" height="2" fill="#e2e2e2"/><rect x="11" y="5" width="1" height="1" fill="#8a8a8a"/><rect x="14" y="4" width="2" height="2" fill="#e2e2e2"/><rect x="15" y="5" width="1" height="1" fill="#8a8a8a"/><rect x="10" y="8" width="2" height="2" fill="#e2e2e2"/><rect x="11" y="9" width="1" height="1" fill="#8a8a8a"/><rect x="14" y="8" width="2" height="2" fill="#e2e2e2"/><rect x="15" y="9" width="1" height="1" fill="#8a8a8a"/><rect x="10" y="12" width="2" height="2" fill="#e2e2e2"/><rect x="11" y="13" width="1" height="1" fill="#8a8a8a"/><rect x="14" y="12" width="2" height="2" fill="#e2e2e2"/><rect x="15" y="13" width="1" height="1" fill="#8a8a8a"/><rect x="642" y="8" width="2" height="2" fill="#dcdcdc"/><rect x="646" y="8" width="2" height="2" fill="#dcdcdc"/><rect x="646" y="4" width="2" height="2" fill="#dcdcdc"/><rect x="650" y="4" width="2" height="2" fill="#dcdcdc"/><circle cx="659" cy="8" r="5.500" fill="#bdbdbd" stroke="#555" stroke-width="1"/><path d="M657 5 l5 3 l-5 3z" fill="#000"/></svg><div class="t " style="left:20px;top:841px;font-size:11px;letter-spacing:0.15px;">Transport</div><svg class="a" style="left:75px;top:845px" width="7" height="7"><path d="M0.500 0.500L6 6M6 0.500L0.500 6" stroke="#000" stroke-width="1.700"/></svg><div class="a" style="left:7px;top:860px;width:28px;height:25px;border:1px solid #8a8a8a;border-radius:4px;background:linear-gradient(#b4b4b4,#a2a2a2);box-shadow:inset 0 1px 0 #d0d0d0"></div><svg class="a" style="left:7px;top:860px" width="27" height="25" opacity=".45"><rect x="10" y="9" width="7" height="7" fill="#555"/></svg><div class="a" style="left:37px;top:860px;width:28px;height:25px;border:1px solid #585858;border-radius:4px;background:linear-gradient(#bcbcbc,#9a9a9a);box-shadow:inset 0 1px 0 #d0d0d0"></div><svg class="a" style="left:37px;top:860px" width="27" height="25"><path d="M11 7l6 5.5l-6 5.5z" fill="#383838"/></svg><div class="a" style="left:67px;top:860px;width:28px;height:25px;border:1px solid #8a8a8a;border-radius:4px;background:linear-gradient(#b4b4b4,#a2a2a2);box-shadow:inset 0 1px 0 #d0d0d0"></div><svg class="a" style="left:67px;top:860px" width="27" height="25" opacity=".45"><rect x="10" y="8" width="2.5" height="9" fill="#555"/><rect x="15" y="8" width="2.5" height="9" fill="#555"/></svg><div class="a" style="left:97px;top:860px;width:28px;height:25px;border:1px solid #585858;border-radius:4px;background:linear-gradient(#bcbcbc,#9a9a9a);box-shadow:inset 0 1px 0 #d0d0d0"></div><svg class="a" style="left:97px;top:860px" width="27" height="25"><circle cx="13.5" cy="12.5" r="6" fill="none" stroke="#383838" stroke-width="1.3"/><path d="M11.5 8l5 4.5l-5 4.5z" fill="#383838"/></svg><div class="a" style="left:127px;top:860px;width:28px;height:25px;border:1px solid #585858;border-radius:4px;background:linear-gradient(#bcbcbc,#9a9a9a);box-shadow:inset 0 1px 0 #d0d0d0"></div><svg class="a" style="left:127px;top:860px" width="27" height="25"><path d="M8 11v6h11v-4M8 11h8" fill="none" stroke="#383838" stroke-width="2"/><path d="M15 7l5 4l-5 4z" fill="#383838"/></svg><div class="a" style="left:157px;top:860px;width:28px;height:25px;border:1px solid #585858;border-radius:4px;background:linear-gradient(#bcbcbc,#9a9a9a);box-shadow:inset 0 1px 0 #d0d0d0"></div><svg class="a" style="left:157px;top:860px" width="27" height="25"><rect x="9" y="8" width="2" height="9" fill="#383838"/><path d="M18 8v9l-6-4.5z" fill="#383838"/></svg><div class="a" style="left:187px;top:860px;width:28px;height:25px;border:1px solid #585858;border-radius:4px;background:linear-gradient(#bcbcbc,#9a9a9a);box-shadow:inset 0 1px 0 #d0d0d0"></div><svg class="a" style="left:187px;top:860px" width="27" height="25"><path d="M13 8v9l-5-4.5zM19 8v9l-5-4.5z" fill="#383838"/></svg><div class="a" style="left:217px;top:860px;width:28px;height:25px;border:1px solid #585858;border-radius:4px;background:linear-gradient(#bcbcbc,#9a9a9a);box-shadow:inset 0 1px 0 #d0d0d0"></div><svg class="a" style="left:217px;top:860px" width="27" height="25"><path d="M8 8v9l5-4.5zM14 8v9l5-4.5z" fill="#383838"/></svg><div class="a" style="left:247px;top:860px;width:28px;height:25px;border:1px solid #585858;border-radius:4px;background:linear-gradient(#bcbcbc,#9a9a9a);box-shadow:inset 0 1px 0 #d0d0d0"></div><svg class="a" style="left:247px;top:860px" width="27" height="25"><rect x="16" y="8" width="2" height="9" fill="#383838"/><path d="M9 8v9l6-4.5z" fill="#383838"/></svg><div class="a" style="left:277px;top:860px;width:28px;height:25px;border:1px solid #585858;border-radius:4px;background:linear-gradient(#bcbcbc,#9a9a9a);box-shadow:inset 0 1px 0 #d0d0d0"></div><svg class="a" style="left:277px;top:860px" width="27" height="25"><circle cx="13.5" cy="12.5" r="4" fill="#c41c1c"/></svg><div class="a" style="left:680px;top:836px;width:113px;height:4px;border-radius:2px;background:#9c9c9c;border-top:1px solid #b5b5b5"></div><svg class="a" style="left:678px;top:845px;overflow:visible" width="118" height="78" viewBox="0 0 118 78"><defs><linearGradient id="pg3" x1="0" y1="0" x2="0" y2="21" gradientUnits="userSpaceOnUse"><stop offset="0" stop-color="#c8c8c8"/><stop offset="1" stop-color="#a7a7a7"/></linearGradient></defs><path d="M0 78 V16 Q0 15 2 15 H5 Q7 15 7 12 V4 Q7 0 11 0 H64 C70.75 0 71.5 15 79 15 C86 15 86.5 -1.5 94 -1.5 H115 Q118 -1.5 118 1.5 V78 Z" fill="url(#pg3)"/><path d="M0 78 V16 Q0 15 2 15 H5 Q7 15 7 12 V4 Q7 0 11 0 H64 C70.75 0 71.5 15 79 15 C86 15 86.5 -1.5 94 -1.5 H115 Q118 -1.5 118 1.5 V78 Z" fill="none" stroke="#dadada" stroke-width="1" transform="translate(0,0.5)" clip-path="inset(-3px 1px 61px 1px)"/><rect x="10" y="4" width="2" height="2" fill="#e2e2e2"/><rect x="11" y="5" width="1" height="1" fill="#8a8a8a"/><rect x="14" y="4" width="2" height="2" fill="#e2e2e2"/><rect x="15" y="5" width="1" height="1" fill="#8a8a8a"/><rect x="10" y="8" width="2" height="2" fill="#e2e2e2"/><rect x="11" y="9" width="1" height="1" fill="#8a8a8a"/><rect x="14" y="8" width="2" height="2" fill="#e2e2e2"/><rect x="15" y="9" width="1" height="1" fill="#8a8a8a"/><rect x="10" y="12" width="2" height="2" fill="#e2e2e2"/><rect x="11" y="13" width="1" height="1" fill="#8a8a8a"/><rect x="14" y="12" width="2" height="2" fill="#e2e2e2"/><rect x="15" y="13" width="1" height="1" fill="#8a8a8a"/><rect x="90" y="8" width="2" height="2" fill="#dcdcdc"/><rect x="94" y="8" width="2" height="2" fill="#dcdcdc"/><rect x="94" y="4" width="2" height="2" fill="#dcdcdc"/><rect x="98" y="4" width="2" height="2" fill="#dcdcdc"/><circle cx="107" cy="8" r="5.500" fill="#bdbdbd" stroke="#555" stroke-width="1"/><path d="M105 5 l5 3 l-5 3z" fill="#000"/></svg><div class="t " style="left:696px;top:847px;font-size:11px;letter-spacing:-0.08px;">Temps</div><svg class="a" style="left:737px;top:851px" width="7" height="7"><path d="M0.500 0.500L6 6M6 0.500L0.500 6" stroke="#000" stroke-width="1.700"/></svg><div class="t " style="left:701.7px;top:881px;font-size:21.5px;letter-spacing:-0.24px;color:#1a1a1a;line-height:24px;">0:00.000</div><svg class="a" style="left:802px;top:839px;overflow:visible" width="255" height="84" viewBox="0 0 255 84"><defs><linearGradient id="pg4" x1="0" y1="0" x2="0" y2="21" gradientUnits="userSpaceOnUse"><stop offset="0" stop-color="#c8c8c8"/><stop offset="1" stop-color="#a7a7a7"/></linearGradient></defs><path d="M0 84 V16 Q0 15 2 15 H5 Q7 15 7 12 V4 Q7 0 11 0 H64 C70.75 0 71.5 15 79 15 H219 C225.5 15 226 -1.5 233 -1.5 H252 Q255 -1.5 255 1.5 V84 Z" fill="url(#pg4)"/><path d="M0 84 V16 Q0 15 2 15 H5 Q7 15 7 12 V4 Q7 0 11 0 H64 C70.75 0 71.5 15 79 15 H219 C225.5 15 226 -1.5 233 -1.5 H252 Q255 -1.5 255 1.5 V84 Z" fill="none" stroke="#dadada" stroke-width="1" transform="translate(0,0.5)" clip-path="inset(-3px 1px 67px 1px)"/><rect x="10" y="4" width="2" height="2" fill="#e2e2e2"/><rect x="11" y="5" width="1" height="1" fill="#8a8a8a"/><rect x="14" y="4" width="2" height="2" fill="#e2e2e2"/><rect x="15" y="5" width="1" height="1" fill="#8a8a8a"/><rect x="10" y="8" width="2" height="2" fill="#e2e2e2"/><rect x="11" y="9" width="1" height="1" fill="#8a8a8a"/><rect x="14" y="8" width="2" height="2" fill="#e2e2e2"/><rect x="15" y="9" width="1" height="1" fill="#8a8a8a"/><rect x="10" y="12" width="2" height="2" fill="#e2e2e2"/><rect x="11" y="13" width="1" height="1" fill="#8a8a8a"/><rect x="14" y="12" width="2" height="2" fill="#e2e2e2"/><rect x="15" y="13" width="1" height="1" fill="#8a8a8a"/><rect x="227" y="8" width="2" height="2" fill="#dcdcdc"/><rect x="231" y="8" width="2" height="2" fill="#dcdcdc"/><rect x="231" y="4" width="2" height="2" fill="#dcdcdc"/><rect x="235" y="4" width="2" height="2" fill="#dcdcdc"/><circle cx="244" cy="8" r="5.500" fill="#bdbdbd" stroke="#555" stroke-width="1"/><path d="M242 5 l5 3 l-5 3z" fill="#000"/></svg><div class="t " style="left:820px;top:841px;font-size:11px;letter-spacing:-0.22px;">Loupe</div><svg class="a" style="left:861px;top:845px" width="7" height="7"><path d="M0.500 0.500L6 6M6 0.500L0.500 6" stroke="#000" stroke-width="1.700"/></svg><svg class="a" style="left:810px;top:860px" width="245" height="28"><path d="M5 5h15M5 3v4M20 3v4" stroke="#1a1a1a"/><circle cx="12" cy="13" r="4.2" fill="#e8e8e8" stroke="#1a1a1a" stroke-width="1.2"/><path d="M15.2 16.2l4.5 4.5" stroke="#1a1a1a" stroke-width="2.4"/><path d="M9.5 13h5" stroke="#1a1a1a" stroke-width="1"/><path d="M12 10.5v5" stroke="#1a1a1a" stroke-width="1"/><path d="M35 5h15M35 3v4M50 3v4" stroke="#8a8a8a"/><circle cx="42" cy="13" r="4.2" fill="#c4c4c4" stroke="#8a8a8a" stroke-width="1.2"/><path d="M45.2 16.2l4.5 4.5" stroke="#8a8a8a" stroke-width="2.4"/><path d="M39.5 13h5" stroke="#8a8a8a" stroke-width="1"/><path d="M63 12h3M79 12h-3M71 4v2M71 20v-2" stroke="#1a1a1a" stroke-dasharray="1 1"/><circle cx="71" cy="12" r="4.2" fill="#e8e8e8" stroke="#1a1a1a" stroke-width="1.2"/><path d="M74.2 15.2l4.5 4.5" stroke="#1a1a1a" stroke-width="2.4"/><path d="M68.5 12h5" stroke="#1a1a1a" stroke-width="1"/><rect x="94.5" y="5.500" width="12" height="14" fill="none" stroke="#1a1a1a" stroke-dasharray="1 1"/><circle cx="101" cy="11" r="4.2" fill="#e8e8e8" stroke="#1a1a1a" stroke-width="1.2"/><path d="M104.2 14.2l4.5 4.5" stroke="#1a1a1a" stroke-width="2.4"/><path d="M135.500 5v15" stroke="#1a1a1a" stroke-dasharray="1 1"/><circle cx="130" cy="11" r="4.2" fill="#e8e8e8" stroke="#1a1a1a" stroke-width="1.2"/><path d="M133.2 14.2l4.5 4.5" stroke="#1a1a1a" stroke-width="2.4"/><path d="M154.500 5v15h8M154.500 5h8" fill="none" stroke="#1a1a1a" stroke-dasharray="1 1"/><circle cx="161" cy="11" r="4.2" fill="#e8e8e8" stroke="#1a1a1a" stroke-width="1.2"/><path d="M164.2 14.2l4.5 4.5" stroke="#1a1a1a" stroke-width="2.4"/><path d="M179.500 1v25" stroke="#6a6a6a"/><path d="M188.500 5v14M186 8l2.500-3l2.500 3M186 16l2.500 3l2.500-3" fill="none" stroke="#1a1a1a"/><circle cx="197" cy="11" r="4.2" fill="#e8e8e8" stroke="#1a1a1a" stroke-width="1.2"/><path d="M200.2 14.2l4.5 4.5" stroke="#1a1a1a" stroke-width="2.4"/><path d="M194.5 11h5" stroke="#1a1a1a" stroke-width="1"/><path d="M197 8.5v5" stroke="#1a1a1a" stroke-width="1"/><path d="M218.500 5v14M216 8l2.500-3l2.500 3M216 16l2.500 3l2.500-3" fill="none" stroke="#1a1a1a"/><circle cx="227" cy="11" r="4.2" fill="#e8e8e8" stroke="#1a1a1a" stroke-width="1.2"/><path d="M230.2 14.2l4.5 4.5" stroke="#1a1a1a" stroke-width="2.4"/><path d="M224.5 11h5" stroke="#1a1a1a" stroke-width="1"/></svg><svg class="a" style="left:1063px;top:839px;overflow:visible" width="335" height="84" viewBox="0 0 335 84"><defs><linearGradient id="pg5" x1="0" y1="0" x2="0" y2="21" gradientUnits="userSpaceOnUse"><stop offset="0" stop-color="#c8c8c8"/><stop offset="1" stop-color="#a7a7a7"/></linearGradient></defs><path d="M0 84 V16 Q0 15 2 15 H5 Q7 15 7 12 V4 Q7 0 11 0 H101 C107.75 0 108.5 15 116 15 H299 C305.5 15 306 -1.5 313 -1.5 H332 Q335 -1.5 335 1.5 V84 Z" fill="url(#pg5)"/><path d="M0 84 V16 Q0 15 2 15 H5 Q7 15 7 12 V4 Q7 0 11 0 H101 C107.75 0 108.5 15 116 15 H299 C305.5 15 306 -1.5 313 -1.5 H332 Q335 -1.5 335 1.5 V84 Z" fill="none" stroke="#dadada" stroke-width="1" transform="translate(0,0.5)" clip-path="inset(-3px 1px 67px 1px)"/><rect x="10" y="4" width="2" height="2" fill="#e2e2e2"/><rect x="11" y="5" width="1" height="1" fill="#8a8a8a"/><rect x="14" y="4" width="2" height="2" fill="#e2e2e2"/><rect x="15" y="5" width="1" height="1" fill="#8a8a8a"/><rect x="10" y="8" width="2" height="2" fill="#e2e2e2"/><rect x="11" y="9" width="1" height="1" fill="#8a8a8a"/><rect x="14" y="8" width="2" height="2" fill="#e2e2e2"/><rect x="15" y="9" width="1" height="1" fill="#8a8a8a"/><rect x="10" y="12" width="2" height="2" fill="#e2e2e2"/><rect x="11" y="13" width="1" height="1" fill="#8a8a8a"/><rect x="14" y="12" width="2" height="2" fill="#e2e2e2"/><rect x="15" y="13" width="1" height="1" fill="#8a8a8a"/><rect x="307" y="8" width="2" height="2" fill="#dcdcdc"/><rect x="311" y="8" width="2" height="2" fill="#dcdcdc"/><rect x="311" y="4" width="2" height="2" fill="#dcdcdc"/><rect x="315" y="4" width="2" height="2" fill="#dcdcdc"/><circle cx="324" cy="8" r="5.500" fill="#bdbdbd" stroke="#555" stroke-width="1"/><path d="M322 5 l5 3 l-5 3z" fill="#000"/></svg><div class="t " style="left:1081px;top:841px;font-size:11px;letter-spacing:-0.07px;">Sélection/Vue</div><svg class="a" style="left:1159px;top:845px" width="7" height="7"><path d="M0.500 0.500L6 6M6 0.500L0.500 6" stroke="#000" stroke-width="1.700"/></svg><div class="t " style="left:1122.5px;top:859px;font-size:11px;letter-spacing:0.13px;">Début</div><div class="t " style="left:1197.5px;top:859px;font-size:11px;letter-spacing:-0.43px;">Fin</div><div class="t " style="left:1272.5px;top:859px;font-size:11px;letter-spacing:-0.09px;">Durée</div><div class="t " style="left:1069.5px;top:877px;font-size:11px;letter-spacing:-0.14px;">Sélection</div><div class="t " style="left:1067px;top:897px;font-size:11px;letter-spacing:0.09px;">Affichage</div><div class="fld" style="left:1117px;top:876px"></div><div class="t " style="left:1128.5px;top:877px;font-size:11.5px;letter-spacing:-0.35px;color:#111;">0:00.000</div><div class="fld" style="left:1192px;top:876px"></div><div class="fld" style="left:1267px;top:876px"></div><div class="t " style="left:1278.5px;top:877px;font-size:11.5px;letter-spacing:-0.35px;color:#111;">0:00.000</div><div class="fld" style="left:1117px;top:896px"></div><div class="t " style="left:1128.5px;top:897px;font-size:11.5px;letter-spacing:-0.35px;color:#111;">0:00.000</div><div class="fld" style="left:1192px;top:896px"></div><div class="t " style="left:1200.5px;top:897px;font-size:11.5px;letter-spacing:-0.35px;color:#111;">44:03.819</div><div class="fld" style="left:1267px;top:896px"></div><div class="t " style="left:1275.5px;top:897px;font-size:11.5px;letter-spacing:-0.35px;color:#111;">44:03.819</div><svg class="a" style="left:2px;top:932px;overflow:visible" width="1396" height="66" viewBox="0 0 1396 66"><defs><linearGradient id="pg6" x1="0" y1="0" x2="0" y2="21" gradientUnits="userSpaceOnUse"><stop offset="0" stop-color="#c8c8c8"/><stop offset="1" stop-color="#a7a7a7"/></linearGradient></defs><path d="M0 66 V16 Q0 15 2 15 H5 Q7 15 7 12 V4 Q7 0 11 0 H73 C79.75 0 80.5 15 88 15 H1360 C1366.5 15 1367 -1.5 1374 -1.5 H1393 Q1396 -1.5 1396 1.5 V66 Z" fill="url(#pg6)"/><path d="M0 66 V16 Q0 15 2 15 H5 Q7 15 7 12 V4 Q7 0 11 0 H73 C79.75 0 80.5 15 88 15 H1360 C1366.5 15 1367 -1.5 1374 -1.5 H1393 Q1396 -1.5 1396 1.5 V66 Z" fill="none" stroke="#dadada" stroke-width="1" transform="translate(0,0.5)" clip-path="inset(-3px 1px 49px 1px)"/><rect x="10" y="4" width="2" height="2" fill="#e2e2e2"/><rect x="11" y="5" width="1" height="1" fill="#8a8a8a"/><rect x="14" y="4" width="2" height="2" fill="#e2e2e2"/><rect x="15" y="5" width="1" height="1" fill="#8a8a8a"/><rect x="10" y="8" width="2" height="2" fill="#e2e2e2"/><rect x="11" y="9" width="1" height="1" fill="#8a8a8a"/><rect x="14" y="8" width="2" height="2" fill="#e2e2e2"/><rect x="15" y="9" width="1" height="1" fill="#8a8a8a"/><rect x="10" y="12" width="2" height="2" fill="#e2e2e2"/><rect x="11" y="13" width="1" height="1" fill="#8a8a8a"/><rect x="14" y="12" width="2" height="2" fill="#e2e2e2"/><rect x="15" y="13" width="1" height="1" fill="#8a8a8a"/><rect x="1368" y="8" width="2" height="2" fill="#dcdcdc"/><rect x="1372" y="8" width="2" height="2" fill="#dcdcdc"/><rect x="1372" y="4" width="2" height="2" fill="#dcdcdc"/><rect x="1376" y="4" width="2" height="2" fill="#dcdcdc"/><circle cx="1385" cy="8" r="5.500" fill="#bdbdbd" stroke="#555" stroke-width="1"/><path d="M1383 5 l5 3 l-5 3z" fill="#000"/></svg><div class="t " style="left:20px;top:934px;font-size:11px;letter-spacing:-0.11px;">Niveaux</div><svg class="a" style="left:70px;top:938px" width="7" height="7"><path d="M0.500 0.500L6 6M6 0.500L0.500 6" stroke="#000" stroke-width="1.700"/></svg><div class="a" style="left:5px;top:950px;width:1393px;height:29px;background:#000"></div><div class="a" style="left:5px;top:951px;width:1px;height:27px;background:#ffe800"></div><div class="a" style="left:1385px;top:950px;width:12px;height:15px;border:1px solid #fff"></div><div class="a" style="left:1385px;top:965px;width:12px;height:14px;border:1px solid #fff;border-top:none"></div><svg class="a" style="left:0;top:979px" width="1400" height="6"><path d="M1384.5 0V4" stroke="#111"/><path d="M1364.5 0V2" stroke="#111"/><path d="M1345.5 0V2" stroke="#111"/><path d="M1326.5 0V4" stroke="#111"/><path d="M1307.5 0V2" stroke="#111"/><path d="M1288.5 0V2" stroke="#111"/><path d="M1269.5 0V4" stroke="#111"/><path d="M1250.5 0V2" stroke="#111"/><path d="M1230.5 0V2" stroke="#111"/><path d="M1211.5 0V4" stroke="#111"/><path d="M1192.5 0V2" stroke="#111"/><path d="M1173.5 0V2" stroke="#111"/><path d="M1154.5 0V4" stroke="#111"/><path d="M1135.5 0V2" stroke="#111"/><path d="M1116.5 0V2" stroke="#111"/><path d="M1096.5 0V4" stroke="#111"/><path d="M1077.5 0V2" stroke="#111"/><path d="M1058.5 0V2" stroke="#111"/><path d="M1039.5 0V4" stroke="#111"/><path d="M1020.5 0V2" stroke="#111"/><path d="M1001.5 0V2" stroke="#111"/><path d="M982.5 0V4" stroke="#111"/><path d="M962.5 0V2" stroke="#111"/><path d="M943.5 0V2" stroke="#111"/><path d="M924.5 0V4" stroke="#111"/><path d="M905.5 0V2" stroke="#111"/><path d="M886.5 0V2" stroke="#111"/><path d="M867.5 0V4" stroke="#111"/><path d="M848.5 0V2" stroke="#111"/><path d="M828.5 0V2" stroke="#111"/><path d="M809.5 0V4" stroke="#111"/><path d="M790.5 0V2" stroke="#111"/><path d="M771.5 0V2" stroke="#111"/><path d="M752.5 0V4" stroke="#111"/><path d="M733.5 0V2" stroke="#111"/><path d="M714.5 0V2" stroke="#111"/><path d="M694.5 0V4" stroke="#111"/><path d="M675.5 0V2" stroke="#111"/><path d="M656.5 0V2" stroke="#111"/><path d="M637.5 0V4" stroke="#111"/><path d="M618.5 0V2" stroke="#111"/><path d="M599.5 0V2" stroke="#111"/><path d="M580.5 0V4" stroke="#111"/><path d="M560.5 0V2" stroke="#111"/><path d="M541.5 0V2" stroke="#111"/><path d="M522.5 0V4" stroke="#111"/><path d="M503.5 0V2" stroke="#111"/><path d="M484.5 0V2" stroke="#111"/><path d="M465.5 0V4" stroke="#111"/><path d="M446.5 0V2" stroke="#111"/><path d="M426.5 0V2" stroke="#111"/><path d="M407.5 0V4" stroke="#111"/><path d="M388.5 0V2" stroke="#111"/><path d="M369.5 0V2" stroke="#111"/><path d="M350.5 0V4" stroke="#111"/><path d="M331.5 0V2" stroke="#111"/><path d="M312.5 0V2" stroke="#111"/><path d="M293.5 0V4" stroke="#111"/><path d="M273.5 0V2" stroke="#111"/><path d="M254.5 0V2" stroke="#111"/><path d="M235.5 0V4" stroke="#111"/><path d="M216.5 0V2" stroke="#111"/><path d="M197.5 0V2" stroke="#111"/><path d="M178.5 0V4" stroke="#111"/><path d="M159.5 0V2" stroke="#111"/><path d="M139.5 0V2" stroke="#111"/><path d="M120.5 0V4" stroke="#111"/><path d="M101.5 0V2" stroke="#111"/><path d="M82.5 0V2" stroke="#111"/><path d="M63.5 0V4" stroke="#111"/><path d="M44.5 0V2" stroke="#111"/><path d="M25.5 0V2" stroke="#111"/><path d="M5.5 0V4" stroke="#111"/></svg><div class="t " style="left:5px;top:982.5px;font-size:9.5px;letter-spacing:-0.56px;color:#111;">dB</div><div class="t " style="left:1381.55px;top:982.5px;font-size:9.5px;letter-spacing:-0.38px;color:#111;">0</div><div class="t " style="left:1321.52px;top:982.5px;font-size:9.5px;letter-spacing:-0.17px;color:#111;">-3</div><div class="t " style="left:1264.09px;top:982.5px;font-size:9.5px;letter-spacing:-0.17px;color:#111;">-6</div><div class="t " style="left:1206.66px;top:982.5px;font-size:9.5px;letter-spacing:-0.17px;color:#111;">-9</div><div class="t " style="left:1146.78px;top:982.5px;font-size:9.5px;letter-spacing:-0.24px;color:#111;">-12</div><div class="t " style="left:1089.35px;top:982.5px;font-size:9.5px;letter-spacing:-0.24px;color:#111;">-15</div><div class="t " style="left:1031.92px;top:982.5px;font-size:9.5px;letter-spacing:-0.24px;color:#111;">-18</div><div class="t " style="left:974.49px;top:982.5px;font-size:9.5px;letter-spacing:-0.24px;color:#111;">-21</div><div class="t " style="left:917.06px;top:982.5px;font-size:9.5px;letter-spacing:-0.24px;color:#111;">-24</div><div class="t " style="left:859.63px;top:982.5px;font-size:9.5px;letter-spacing:-0.24px;color:#111;">-27</div><div class="t " style="left:802.2px;top:982.5px;font-size:9.5px;letter-spacing:-0.24px;color:#111;">-30</div><div class="t " style="left:744.77px;top:982.5px;font-size:9.5px;letter-spacing:-0.24px;color:#111;">-33</div><div class="t " style="left:687.34px;top:982.5px;font-size:9.5px;letter-spacing:-0.24px;color:#111;">-36</div><div class="t " style="left:629.91px;top:982.5px;font-size:9.5px;letter-spacing:-0.24px;color:#111;">-39</div><div class="t " style="left:572.48px;top:982.5px;font-size:9.5px;letter-spacing:-0.24px;color:#111;">-42</div><div class="t " style="left:515.05px;top:982.5px;font-size:9.5px;letter-spacing:-0.24px;color:#111;">-45</div><div class="t " style="left:457.62px;top:982.5px;font-size:9.5px;letter-spacing:-0.24px;color:#111;">-48</div><div class="t " style="left:400.19px;top:982.5px;font-size:9.5px;letter-spacing:-0.24px;color:#111;">-51</div><div class="t " style="left:342.76px;top:982.5px;font-size:9.5px;letter-spacing:-0.24px;color:#111;">-54</div><div class="t " style="left:285.33px;top:982.5px;font-size:9.5px;letter-spacing:-0.24px;color:#111;">-57</div><div class="t " style="left:227.9px;top:982.5px;font-size:9.5px;letter-spacing:-0.24px;color:#111;">-60</div><div class="t " style="left:170.47px;top:982.5px;font-size:9.5px;letter-spacing:-0.24px;color:#111;">-63</div><div class="t " style="left:113.04px;top:982.5px;font-size:9.5px;letter-spacing:-0.24px;color:#111;">-66</div><div class="t " style="left:55.61px;top:982.5px;font-size:9.5px;letter-spacing:-0.24px;color:#111;">-69</div><div class="a" style="left:0;top:998px;width:1400px;height:2px;background:#5a5a5a"></div><div class="a" style="left:0;top:1000px;width:1400px;height:22px;background:linear-gradient(#dcdcdc,#c4c4c4 50%,#adadad)"></div><div class="t " style="left:6px;top:1005px;font-size:11px;letter-spacing:0.02px;color:#111;">Ouvert en 47.24 secondes</div><div class="a" style="left:790px;top:1002px;width:1px;height:19px;background:#8a8a8a"></div><div class="a" style="left:791px;top:1002px;width:1px;height:19px;background:#e8e8e8"></div><div class="a" style="left:931px;top:1002px;width:1px;height:19px;background:#8a8a8a"></div><div class="a" style="left:932px;top:1002px;width:1px;height:19px;background:#e8e8e8"></div><div class="a" style="left:1008px;top:1002px;width:1px;height:19px;background:#8a8a8a"></div><div class="a" style="left:1009px;top:1002px;width:1px;height:19px;background:#e8e8e8"></div><div class="a" style="left:1106px;top:1002px;width:1px;height:19px;background:#8a8a8a"></div><div class="a" style="left:1107px;top:1002px;width:1px;height:19px;background:#e8e8e8"></div><div class="a" style="left:1214px;top:1002px;width:1px;height:19px;background:#8a8a8a"></div><div class="a" style="left:1215px;top:1002px;width:1px;height:19px;background:#e8e8e8"></div><div class="a" style="left:1283px;top:1002px;width:1px;height:19px;background:#8a8a8a"></div><div class="a" style="left:1284px;top:1002px;width:1px;height:19px;background:#e8e8e8"></div><div class="t " style="left:798.5px;top:1005px;font-size:11px;letter-spacing:0.15px;color:#111;">44100 • 16 bits • Stéréo</div><div class="t " style="left:939px;top:1005px;font-size:11px;letter-spacing:-0.11px;color:#111;">444.76 Mo</div><div class="t " style="left:1016px;top:1005px;font-size:11px;letter-spacing:0.08px;color:#111;">5.60 Go libre</div><div class="t " style="left:1114px;top:1005px;font-size:11px;letter-spacing:0.15px;color:#111;">9:28:45.786 libre</div><div class="t " style="left:1290px;top:1005px;font-size:11px;letter-spacing:-0.07px;color:#111;">Fréquence spectrale</div>
<div class="a" style="left:0;top:1022px;width:1400px;height:28px;background:#d4d0c8;border-top:1px solid #fff"></div><div class="a" style="left:0;top:1022px;width:1400px;height:1px;background:#d4d0c8"></div><div class="a" style="left:3px;top:1026px;width:77px;height:22px;background:#d4d0c8;border:1px solid;border-color:#fff #404040 #404040 #fff;box-shadow:inset -1px -1px 0 #808080"></div><svg class="a" style="left:6px;top:1029px" width="16" height="16"><path d="M1 3q3-2 6 0v5q-3-2-6 0z" fill="#e04020"/><path d="M8 3q3 2 6 0v5q-3 2-6 0z" fill="#40a030"/><path d="M1 9q3-2 6 0v5q-3-2-6 0z" fill="#3060d0"/><path d="M8 9q3 2 6 0v5q-3 2-6 0z" fill="#f0c020"/></svg><div class="t " style="left:22.6px;top:1030px;font-size:11.5px;letter-spacing:0.41px;font-weight:bold;line-height:14px;">Démarrer</div><div class="a" style="left:804px;top:1027px;width:2px;height:20px;border-left:1px solid #808080;border-right:1px solid #fff"></div><div class="a" style="left:87px;top:1027px;width:3px;height:20px;border:1px solid;border-color:#fff #808080 #808080 #fff"></div><div class="a" style="left:131px;top:1027px;width:3px;height:20px;border:1px solid;border-color:#fff #808080 #808080 #fff"></div><svg class="a" style="left:100px;top:1028px" width="18" height="18"><rect x="1" y="8" width="14" height="8" fill="#5080d8"/><path d="M2 10h12M2 12h12M2 14h12" stroke="#fff" stroke-width="1" stroke-dasharray="2 1"/><path d="M8 8L15 2" stroke="#3060c0" stroke-width="2.500"/></svg><svg class="a" style="left:140px;top:1028px" width="16" height="16"><rect x="0" y="0" width="16" height="16" fill="#3a6e78"/><text x="8" y="11" font-size="9" text-anchor="middle" fill="#fff" font-family="Liberation Sans,sans-serif" font-weight="bold">Au</text></svg><svg class="a" style="left:164px;top:1028px" width="16" height="16"><circle cx="8" cy="8" r="7.500" fill="#d8d8d8" stroke="#a0a0a0"/><path d="M8 3v10M5 6l6 4M11 6l-6 4" stroke="#888" stroke-width="1"/></svg><svg class="a" style="left:186px;top:1028px" width="16" height="16"><rect x="3" y="1" width="10" height="15" rx="1" fill="#6a9ae8" stroke="#3a60b0"/><rect x="5" y="3" width="6" height="3" fill="#d8e8ff"/><path d="M5 9h6M5 12h6" stroke="#fff" stroke-dasharray="1.500 1"/></svg><svg class="a" style="left:210px;top:1028px" width="16" height="16"><rect x="0" y="1" width="16" height="14" fill="#c07020"/><rect x="0" y="1" width="16" height="5" fill="#d89040"/><text x="8" y="13" font-size="8" text-anchor="middle" fill="#201000" font-family="Liberation Sans,sans-serif" font-weight="bold">RX</text></svg><svg class="a" style="left:232px;top:1028px" width="16" height="16"><path d="M1 4h8l2 2h4v9H1z" fill="#f09020"/><path d="M1 4h8l2 2h4v3H1z" fill="#f8b040"/><path d="M5 11L14 5" stroke="#3070d0" stroke-width="2.500"/></svg><svg class="a" style="left:256px;top:1028px" width="16" height="16"><rect x="3" y="1" width="12" height="14" fill="#f4f0f8" stroke="#b090c0"/><rect x="0" y="4" width="9" height="9" fill="#8040a0"/><text x="4.500" y="11.500" font-size="8" text-anchor="middle" fill="#fff" font-style="italic" font-family="Liberation Sans,sans-serif" font-weight="bold">N</text></svg><svg class="a" style="left:278px;top:1028px" width="16" height="16"><rect x="3" y="1" width="12" height="14" fill="#f0f4fc" stroke="#90a8d8"/><rect x="0" y="4" width="9" height="9" fill="#3060c0"/><text x="4.500" y="11.500" font-size="8" text-anchor="middle" fill="#fff" font-style="italic" font-family="Liberation Sans,sans-serif" font-weight="bold">W</text></svg><svg class="a" style="left:302px;top:1028px" width="16" height="16"><circle cx="8" cy="8" r="5" fill="#3080e0"/><ellipse cx="8" cy="8" rx="8" ry="2.500" fill="none" stroke="#e02030" stroke-width="1.500" transform="rotate(-20 8 8)"/></svg><svg class="a" style="left:324px;top:1028px" width="16" height="16"><rect x="0" y="0" width="16" height="16" fill="#000"/><rect x="2" y="2" width="12" height="12" fill="#102050"/><text x="8" y="13" font-size="12" text-anchor="middle" fill="#fff" font-family="Liberation Serif,serif" font-weight="bold">N</text></svg><svg class="a" style="left:348px;top:1028px" width="16" height="16"><rect x="0" y="0" width="16" height="16" fill="#1040d0"/><path d="M2 2L14 14" stroke="#101010" stroke-width="3"/><path d="M2 2L9 9" stroke="#f0e040" stroke-width="1.500"/></svg><svg class="a" style="left:370px;top:1028px" width="16" height="16"><rect x="0" y="0" width="16" height="16" fill="#1040d0"/><path d="M8 1v14M1 8h14M3 3l10 10M13 3L3 13" stroke="#f0e040" stroke-width="1.500"/><rect x="5" y="5" width="6" height="6" fill="#101010"/></svg><svg class="a" style="left:394px;top:1028px" width="16" height="16"><rect x="0" y="0" width="16" height="16" fill="#1040d0"/><rect x="3" y="4" width="11" height="8" fill="#fff" transform="rotate(20 8 8)"/><path d="M5 7h6" stroke="#e03030" transform="rotate(20 8 8)"/></svg><svg class="a" style="left:416px;top:1028px" width="16" height="16"><rect x="2" y="1" width="12" height="14" fill="#f4f6fa" stroke="#a0a8b8"/><path d="M5 12l3-7l3 7M6 10h4" stroke="#90a8d0" stroke-width="1.300" fill="none"/></svg><svg class="a" style="left:440px;top:1028px" width="16" height="16"><rect x="1" y="2" width="14" height="6" fill="#6080a0"/><rect x="1" y="8" width="14" height="7" fill="#30a040"/><path d="M2 3l4 4l3-3l5 4" stroke="#e8e040" stroke-width="1.500" fill="none"/><text x="12" y="15" font-size="9" text-anchor="middle" fill="#f0e020" font-family="Liberation Sans,sans-serif" font-weight="bold">3</text></svg><svg class="a" style="left:462px;top:1028px" width="16" height="16"><circle cx="8" cy="8" r="7" fill="#4070d0"/><path d="M8 1a7 7 0 0 1 0 14q5-7 0-14z" fill="#f0c020"/><path d="M3 5q3 2 5 0" stroke="#90c0ff" fill="none"/></svg><svg class="a" style="left:486px;top:1028px" width="16" height="16"><circle cx="8" cy="8" r="7" fill="#4080e0"/><path d="M9 1a7 7 0 0 1 2 13q3-7-2-13z" fill="#f0c020"/><path d="M3 6q3 2 6 0" stroke="#b0d8ff" fill="none"/></svg><svg class="a" style="left:508px;top:1028px" width="16" height="16"><rect x="0" y="0" width="16" height="16" fill="#901818"/><rect x="2" y="2" width="12" height="12" fill="#f0f0f0"/><ellipse cx="8" cy="8" rx="5.500" ry="3.500" fill="#181818"/><circle cx="9" cy="8" r="1.500" fill="#fff"/></svg><svg class="a" style="left:532px;top:1028px" width="16" height="16"><circle cx="8" cy="8" r="8" fill="#1458a8"/><text x="8" y="11" font-size="8" text-anchor="middle" fill="#fff" font-family="Liberation Sans,sans-serif" font-weight="bold">TC</text></svg><svg class="a" style="left:554px;top:1028px" width="16" height="16"><path d="M8 1q7 0 7 6t-7 8q-7-2-7-8t7-6z" fill="#f8f8f8" stroke="#202020" stroke-width="1.300"/><path d="M5 6l4-1l2 6" stroke="#202020" fill="none" stroke-width="1.300"/></svg><svg class="a" style="left:578px;top:1028px" width="16" height="16"><text x="8" y="9" font-size="11" text-anchor="middle" fill="#e01020" font-family="Liberation Sans,sans-serif" font-weight="bold">S</text><rect x="1" y="9" width="14" height="7" fill="#f4f4f4"/><text x="8" y="15.500" font-size="6.500" text-anchor="middle" fill="#202020" font-family="Liberation Sans,sans-serif">SBP</text></svg><svg class="a" style="left:600px;top:1028px" width="16" height="16"><circle cx="8" cy="8" r="7.500" fill="#d8a820" stroke="#302000" stroke-width="1.200"/><text x="8" y="11" font-size="8" text-anchor="middle" fill="#201000" font-style="italic" font-family="Liberation Sans,sans-serif" font-weight="bold">UE</text></svg><svg class="a" style="left:624px;top:1028px" width="16" height="16"><rect x="4" y="1" width="9" height="10" rx="1" fill="#a8d0f8" stroke="#70a0d8"/><rect x="6" y="11" width="6" height="4" fill="#c8e0f8"/><rect x="3" y="9" width="5" height="6" fill="#88b8f0"/></svg><svg class="a" style="left:646px;top:1028px" width="16" height="16"><circle cx="8" cy="8" r="7.500" fill="#2090e0"/><path d="M2 7q3-2 6 1q3-4 6-2q-3 0-6 4q-2-3-6-3z" fill="#fff"/><path d="M4 12h8" stroke="#fff"/></svg><svg class="a" style="left:670px;top:1028px" width="16" height="16"><rect x="0" y="0" width="16" height="16" fill="#f08820"/><path d="M3 9L10 2" stroke="#fff" stroke-width="1.500"/><text x="8" y="14.500" font-size="6.500" text-anchor="middle" fill="#fff" font-family="Liberation Sans,sans-serif" font-weight="bold">PDF</text></svg><svg class="a" style="left:692px;top:1028px" width="16" height="16"><circle cx="8" cy="8" r="7.500" fill="#f0f0f0" stroke="#909090"/><path d="M8 .5a7.500 7.500 0 0 1 7.500 7.500h-3.500a4 4 0 0 0-4-4z" fill="#e08020"/><path d="M8 15.500a7.500 7.500 0 0 1-7.500-7.500h3.500a4 4 0 0 0 4 4z" fill="#40a040"/><path d="M.5 8a7.500 7.500 0 0 1 7.500-7.500v3.500a4 4 0 0 0-4 4z" fill="#3070d0"/><path d="M6.500 5l5 3l-5 3z" fill="#202020"/></svg><div class="a" style="left:810px;top:1026px;width:132px;height:22px;background:#eceae4;border:1px solid;border-color:#404040 #fff #fff #404040;box-shadow:inset 1px 1px 0 #808080"></div><svg class="a" style="left:815px;top:1030px" width="16" height="16"><rect x="0" y="0" width="16" height="16" fill="#3a6e78"/><text x="8" y="11" font-size="9" text-anchor="middle" fill="#fff" font-family="Liberation Sans,sans-serif" font-weight="bold">Au</text></svg><div class="t " style="left:835px;top:1031px;font-size:11.5px;letter-spacing:0.04px;font-weight:bold;line-height:14px;">Adobe Audition -...</div><div class="a" style="left:945px;top:1026px;width:132px;height:22px;background:#d4d0c8;border:1px solid;border-color:#fff #404040 #404040 #fff;box-shadow:inset -1px -1px 0 #808080"></div><svg class="a" style="left:949px;top:1029px" width="16" height="16"><rect x="0" y="0" width="16" height="16" fill="#901818"/><rect x="2" y="2" width="12" height="12" fill="#f0f0f0"/><ellipse cx="8" cy="8" rx="5.500" ry="3.500" fill="#181818"/><circle cx="9" cy="8" r="1.500" fill="#fff"/></svg><div class="t " style="left:968.5px;top:1031px;font-size:11px;letter-spacing:-0.16px;line-height:14px;">Adobe Photoshop</div><div class="a" style="left:1084px;top:1026px;width:314px;height:22px;border:1px solid;border-color:#808080 #fff #fff #808080"></div><svg class="a" style="left:1087px;top:1029px" width="16" height="16"><rect x="0" y="0" width="16" height="16" fill="#181800"/><rect x="1" y="1" width="14" height="14" fill="none" stroke="#c8c820"/><rect x="3" y="3" width="4" height="10" fill="none" stroke="#c8e040" stroke-width="1.500"/><rect x="9" y="3" width="4" height="10" fill="none" stroke="#c8e040" stroke-width="1.500"/></svg><svg class="a" style="left:1123px;top:1029px" width="16" height="16"><rect x="3" y="5" width="11" height="2.500" fill="#f0e000" stroke="#202000" stroke-width=".6"/><rect x="3" y="9" width="11" height="2.500" fill="#f0e000" stroke="#202000" stroke-width=".6"/><rect x="3" y="13" width="11" height="2.500" fill="#f0e000" stroke="#202000" stroke-width=".6"/></svg><svg class="a" style="left:1141px;top:1029px" width="16" height="16"><path d="M4 1v15" stroke="#a0a0a0" stroke-width="2"/><path d="M5 2q4-2 9 1v6q-5-3-9-1z" fill="#20a020"/></svg><svg class="a" style="left:1158px;top:1029px" width="16" height="16"><rect x="2" y="2" width="9" height="7" fill="#5070c0" stroke="#303860"/><rect x="0" y="10" width="12" height="3" fill="#8090b0"/><path d="M8 9l7 7M15 9l-7 7" stroke="#e01010" stroke-width="2"/><path d="M12 1q2 2 0 5M14 0q3 3 0 7" stroke="#404040" fill="none"/></svg><svg class="a" style="left:1177px;top:1029px" width="16" height="16"><rect x="4" y="1" width="9" height="7" fill="#5070c0" stroke="#303860"/><rect x="0" y="5" width="8" height="6" fill="#6888d0" stroke="#303860"/><path d="M7 8l8 8M15 8l-8 8" stroke="#e01010" stroke-width="2.200"/></svg><svg class="a" style="left:1194px;top:1029px" width="16" height="16"><circle cx="7" cy="7" r="6" fill="#909090" stroke="#505050"/><circle cx="7" cy="7" r="2.500" fill="#d0d0d0"/><circle cx="11" cy="11" r="4.500" fill="#fff" stroke="#e01010" stroke-width="1.800"/><path d="M8 8l6 6" stroke="#e01010" stroke-width="1.800"/></svg><svg class="a" style="left:1212px;top:1029px" width="16" height="16"><rect x="3" y="7" width="11" height="8" fill="#b0b8c0" stroke="#404850" transform="rotate(-15 8 11)"/><path d="M9 0l-6 5h3v4h5V5h3z" fill="#20a030" transform="rotate(160 8 5)"/></svg><svg class="a" style="left:1230px;top:1029px" width="16" height="16"><path d="M1 1q2 9 8 10" stroke="#202020" fill="none" stroke-width="1.500"/><rect x="8" y="9" width="7" height="5" fill="#e8e8e8" stroke="#202020" transform="rotate(25 11 11)"/><rect x="11" y="13" width="4" height="2" fill="#c0c020"/></svg><svg class="a" style="left:1248px;top:1029px" width="16" height="16"><rect x="0" y="0" width="16" height="16" fill="#e01818"/><path d="M9 1L4 8h4l-2 7l6-8H8z" fill="#fff"/></svg><svg class="a" style="left:1266px;top:1029px" width="16" height="16"><rect x="0" y="1" width="16" height="14" rx="1" fill="#f0f0e8" stroke="#505050"/><rect x="1" y="2" width="14" height="5" fill="#2040c0"/><circle cx="4" cy="11" r="1.500" fill="none" stroke="#202020"/><circle cx="8" cy="11" r="1.500" fill="none" stroke="#202020"/><circle cx="12" cy="11" r="1.500" fill="none" stroke="#202020"/></svg><svg class="a" style="left:1283px;top:1029px" width="16" height="16"><path d="M6 5v10l2.500-2.500l2 4l1.500-.8l-2-4h3.500z" fill="#fff" stroke="#000"/><path d="M2 1l2 2M6 0v2M0 5h2M9 1L8 3" stroke="#202020"/></svg><svg class="a" style="left:1302px;top:1029px" width="16" height="16"><text x="6" y="10" font-size="12" text-anchor="middle" fill="#e01020" font-family="Liberation Sans,sans-serif" font-weight="bold">S</text><path d="M4 9l5 4" stroke="#2040d0" stroke-width="1.500"/><rect x="6" y="10" width="10" height="6" rx="2" fill="#101010"/><text x="11" y="15.500" font-size="6.500" text-anchor="middle" fill="#30e030" font-family="Liberation Sans,sans-serif" font-weight="bold">28</text></svg><svg class="a" style="left:1320px;top:1029px" width="16" height="16"><path d="M5 6q0-3 3-3t3 3v6q0 3-3 3t-3-3z" fill="#fff" stroke="#202020"/><path d="M8 3v4M5 7h6" stroke="#202020"/><path d="M3 2l3 1" stroke="#e02020" stroke-width="1.500"/></svg><svg class="a" style="left:1337px;top:1029px" width="16" height="16"><path d="M2 5l8-3l4 2v8l-8 3l-4-2z" fill="#a8c8f0" stroke="#5080c0"/><path d="M2 5l4 2l8-3M6 7v8" stroke="#5080c0" fill="none"/><path d="M6 7l8-3v3l-8 3z" fill="#3878e0"/></svg><div class="t " style="left:1105.5px;top:1031px;font-size:11.5px;letter-spacing:-0.30px;color:#10d8e8;line-height:14px;">50°</div><div class="t " style="left:1362.5px;top:1031px;font-size:11px;letter-spacing:-0.01px;line-height:14px;">17:59</div>
</body></html>
